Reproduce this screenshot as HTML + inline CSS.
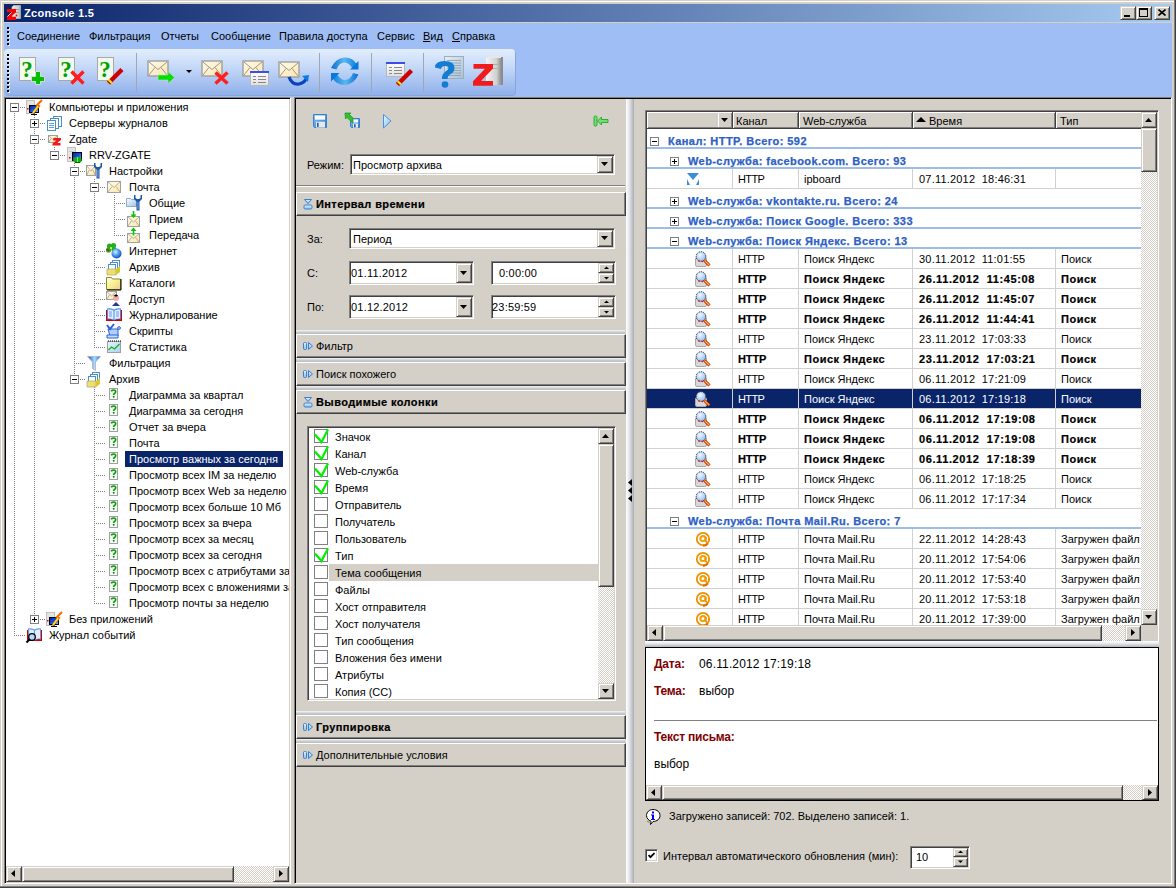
<!DOCTYPE html>
<html><head><meta charset="utf-8"><style>
html,body{margin:0;padding:0}
body{width:1176px;height:888px;overflow:hidden;position:relative;background:#D4D0C8;font-family:"Liberation Sans",sans-serif;font-size:11px;color:#000}
div{position:absolute;box-sizing:border-box}
.t{position:absolute;white-space:pre;line-height:13px}
u{text-decoration:underline;text-underline-offset:1px}
</style></head><body>
<div style="left:1px;top:1px;width:1173px;height:1px;background:#fff"></div>
<div style="left:1px;top:1px;width:1px;height:885px;background:#fff"></div>
<div style="left:1174px;top:0px;width:1px;height:887px;background:#808080"></div>
<div style="left:1175px;top:0px;width:1px;height:888px;background:#404040"></div>
<div style="left:0px;top:886px;width:1175px;height:1px;background:#808080"></div>
<div style="left:0px;top:887px;width:1176px;height:1px;background:#404040"></div>
<div style="left:4px;top:4px;width:1168px;height:18px;background:linear-gradient(90deg,#0A246A,#A6CAF0)"></div>
<span class="t " style="left:24px;top:7px;color:#fff;font-weight:bold;letter-spacing:0.3px">Zconsole 1.5</span>
<svg style="position:absolute;left:6px;top:5px;" width="16" height="16" viewBox="0 0 16 16"><defs><linearGradient id="tsv" x1="0" y1="0" x2="1" y2="0"><stop offset="0" stop-color="#F0F0F0"/><stop offset="0.8" stop-color="#C8C8C8"/><stop offset="1" stop-color="#A0A0A0"/></linearGradient></defs><path d="M7.5 0.5h7v13h-8.5v-11.5z" fill="url(#tsv)" stroke="#B8B8B8" stroke-width="0.8"/><rect x="9" y="4" width="4" height="0.8" fill="#909090"/><rect x="9" y="7" width="4" height="0.8" fill="#909090"/><circle cx="10.5" cy="10.5" r="0.9" fill="#E00"/><path d="M1 4h9v3.2l-5 4.6h5v3.2H1v-3.2l5-4.6H1z" fill="#f00"/><path d="M1.5 11.5l4-4" stroke="#fff" stroke-width="0.8"/></svg>
<div style="left:1120px;top:6px;width:16px;height:14px;background:#D4D0C8;border:1px solid;border-color:#D4D0C8 #404040 #404040 #D4D0C8;box-shadow:inset 1px 1px #fff,inset -1px -1px #808080;"></div>
<div style="left:1136px;top:6px;width:16px;height:14px;background:#D4D0C8;border:1px solid;border-color:#D4D0C8 #404040 #404040 #D4D0C8;box-shadow:inset 1px 1px #fff,inset -1px -1px #808080;"></div>
<div style="left:1154px;top:6px;width:16px;height:14px;background:#D4D0C8;border:1px solid;border-color:#D4D0C8 #404040 #404040 #D4D0C8;box-shadow:inset 1px 1px #fff,inset -1px -1px #808080;"></div>
<div style="left:1124px;top:15px;width:6px;height:2px;background:#000"></div>
<div style="left:1139px;top:8px;width:9px;height:9px;border:1px solid #000;border-top-width:2px;box-sizing:border-box"></div>
<svg style="position:absolute;left:1158px;top:9px;" width="8" height="7" viewBox="0 0 8 7"><path d="M0.5 0.5L7.5 6.5M7.5 0.5L0.5 6.5" stroke="#000" stroke-width="1.6"/></svg>
<div style="left:4px;top:23px;width:1168px;height:74px;background:#9EBEF5"></div>
<div style="left:7px;top:27px;width:2px;height:2px;background:#000;box-shadow:1px 1px #dce8fc"></div>
<div style="left:7px;top:31px;width:2px;height:2px;background:#000;box-shadow:1px 1px #dce8fc"></div>
<div style="left:7px;top:35px;width:2px;height:2px;background:#000;box-shadow:1px 1px #dce8fc"></div>
<div style="left:7px;top:39px;width:2px;height:2px;background:#000;box-shadow:1px 1px #dce8fc"></div>
<div style="left:7px;top:43px;width:2px;height:2px;background:#000;box-shadow:1px 1px #dce8fc"></div>
<span class="t " style="left:17px;top:30px;">Соединение</span>
<span class="t " style="left:89px;top:30px;">Фильтрация</span>
<span class="t " style="left:161px;top:30px;">Отчеты</span>
<span class="t " style="left:211px;top:30px;">Сообщение</span>
<span class="t " style="left:279px;top:30px;">Правила доступа</span>
<span class="t " style="left:377px;top:30px;">Сервис</span>
<span class="t " style="left:423px;top:30px;"><u>В</u>ид</span>
<span class="t " style="left:452px;top:30px;"><u>С</u>правка</span>
<div style="left:4px;top:49px;width:511px;height:46px;background:linear-gradient(#E3EEFD,#C4D8F8 40%,#8FB0EA);border-radius:4px;box-shadow:1px 1px 0 #86a6e0"></div>
<div style="left:7px;top:54px;width:2px;height:2px;background:#000;box-shadow:1px 1px #e8f0fc"></div>
<div style="left:7px;top:58px;width:2px;height:2px;background:#000;box-shadow:1px 1px #e8f0fc"></div>
<div style="left:7px;top:62px;width:2px;height:2px;background:#000;box-shadow:1px 1px #e8f0fc"></div>
<div style="left:7px;top:66px;width:2px;height:2px;background:#000;box-shadow:1px 1px #e8f0fc"></div>
<div style="left:7px;top:70px;width:2px;height:2px;background:#000;box-shadow:1px 1px #e8f0fc"></div>
<div style="left:7px;top:74px;width:2px;height:2px;background:#000;box-shadow:1px 1px #e8f0fc"></div>
<div style="left:7px;top:78px;width:2px;height:2px;background:#000;box-shadow:1px 1px #e8f0fc"></div>
<div style="left:7px;top:82px;width:2px;height:2px;background:#000;box-shadow:1px 1px #e8f0fc"></div>
<div style="left:7px;top:86px;width:2px;height:2px;background:#000;box-shadow:1px 1px #e8f0fc"></div>
<div style="left:7px;top:90px;width:2px;height:2px;background:#000;box-shadow:1px 1px #e8f0fc"></div>
<div style="left:136px;top:53px;width:1px;height:39px;background:#A2A6B0"></div>
<div style="left:319px;top:53px;width:1px;height:39px;background:#A2A6B0"></div>
<div style="left:371px;top:53px;width:1px;height:39px;background:#A2A6B0"></div>
<div style="left:423px;top:53px;width:1px;height:39px;background:#A2A6B0"></div>
<svg style="position:absolute;left:0;top:0" width="520" height="100" viewBox="0 0 520 100"><defs>
<linearGradient id="envg" x1="0" y1="0" x2="1" y2="1"><stop offset="0" stop-color="#FFFBEA"/><stop offset="1" stop-color="#FCE6B0"/></linearGradient>
<linearGradient id="listg" x1="0" y1="0" x2="0" y2="1"><stop offset="0" stop-color="#FFFFFF"/><stop offset="1" stop-color="#E0E0E0"/></linearGradient>
<linearGradient id="refg" x1="0" y1="0" x2="1" y2="0"><stop offset="0" stop-color="#0A6CD0"/><stop offset="0.5" stop-color="#5AB8F0"/><stop offset="1" stop-color="#1080E0"/></linearGradient>
<linearGradient id="srvg" x1="0" y1="0" x2="1" y2="0"><stop offset="0" stop-color="#F4F4F4"/><stop offset="0.7" stop-color="#D0D0D0"/><stop offset="1" stop-color="#909090"/></linearGradient>
<linearGradient id="helpdoc" x1="0" y1="0" x2="1" y2="1"><stop offset="0" stop-color="#E6EEF4"/><stop offset="1" stop-color="#A8C0D0"/></linearGradient>
</defs><rect x="19.5" y="57.5" width="16" height="23" fill="#F2FAEE" stroke="#A8A8A8"/>
<text x="27" y="77" font-family="Liberation Serif" font-weight="bold" font-size="23" fill="#00A000" text-anchor="middle">?</text><path d="M35.5 71.5h5v5h4v5h-4v3h-5v-3h-4v-5h4z" fill="#00C000" stroke="#D8D8D8" stroke-width="1"/><rect x="58.5" y="57.5" width="16" height="23" fill="#F2FAEE" stroke="#A8A8A8"/>
<text x="66" y="77" font-family="Liberation Serif" font-weight="bold" font-size="23" fill="#00A000" text-anchor="middle">?</text><path d="M71.5 71.5L83.5 83.5M83.5 71.5L71.5 83.5" stroke="#FF1E1E" stroke-width="3.4" stroke-linecap="butt"/><rect x="97.5" y="57.5" width="16" height="23" fill="#F2FAEE" stroke="#A8A8A8"/>
<text x="105" y="77" font-family="Liberation Serif" font-weight="bold" font-size="23" fill="#00A000" text-anchor="middle">?</text><line x1="108.5" y1="83" x2="122" y2="69.5" stroke="#D00000" stroke-width="4.5" stroke-linecap="butt"/>
<line x1="108.5" y1="83" x2="110.93" y2="80.57" stroke="#F8F000" stroke-width="4.5"/>
<line x1="108.5" y1="83" x2="109.445" y2="82.055" stroke="#C00000" stroke-width="4.5"/><defs></defs><rect x="148" y="61" width="20" height="15" fill="url(#envg)" stroke="#A4A4A4" stroke-width="1.5"/>
<path d="M149 62L158.0 69.5L167 62M149 75L155.0 67.5M167 75L161.0 67.5" stroke="#A09888" stroke-width="1" fill="none"/><path d="M158 75h10v-3.5l6.5 6l-6.5 6v-3.5h-10z" fill="#00E000" stroke="#C8D8C8" stroke-width="0.6"/><path d="M186 70h6l-3 3z" fill="#000"/><defs></defs><rect x="202" y="61" width="20" height="15" fill="url(#envg)" stroke="#A4A4A4" stroke-width="1.5"/>
<path d="M203 62L212.0 69.5L221 62M203 75L209.0 67.5M221 75L215.0 67.5" stroke="#A09888" stroke-width="1" fill="none"/><path d="M215.5 72.5L227.5 83.5M227.5 72.5L215.5 83.5" stroke="#FF1E1E" stroke-width="3.4" stroke-linecap="butt"/><defs></defs><rect x="243" y="61" width="20" height="15" fill="url(#envg)" stroke="#A4A4A4" stroke-width="1.5"/>
<path d="M244 62L253.0 69.5L262 62M244 75L250.0 67.5M262 75L256.0 67.5" stroke="#A09888" stroke-width="1" fill="none"/><rect x="250.5" y="71.5" width="18" height="14" fill="url(#listg)" stroke="#B8B8B8"/><rect x="250" y="71" width="19" height="2" fill="#3B4CF0"/><rect x="253" y="76" width="3" height="1" fill="#888"/><rect x="258" y="76" width="8" height="1" fill="#888"/><rect x="253" y="79" width="3" height="1" fill="#888"/><rect x="258" y="79" width="8" height="1" fill="#888"/><rect x="253" y="82" width="3" height="1" fill="#888"/><rect x="258" y="82" width="8" height="1" fill="#888"/><defs></defs><rect x="279" y="62" width="20" height="15" fill="url(#envg)" stroke="#A4A4A4" stroke-width="1.5"/>
<path d="M280 63L289.0 70.5L298 63M280 76L286.0 68.5M298 76L292.0 68.5" stroke="#A09888" stroke-width="1" fill="none"/><path d="M289 77 Q292 85 299 84 Q304 83 306 79" stroke="#0A44B8" stroke-width="3.2" fill="none"/><path d="M302 76L309 75L308 82z" fill="#0A7CE8"/><path d="M331 68Q336 57.5 345 57.5Q353 57.5 357 64.5L352.5 68.5Q349 62.5 344.5 62.5Q339 62.5 336.5 69.5z" fill="url(#refg)"/><path d="M358.5 61v8.5h-8.5z" fill="#0A78D8"/><g transform="rotate(180 344.75 71.25)"><path d="M331 68Q336 57.5 345 57.5Q353 57.5 357 64.5L352.5 68.5Q349 62.5 344.5 62.5Q339 62.5 336.5 69.5z" fill="url(#refg)"/><path d="M358.5 61v8.5h-8.5z" fill="#0A78D8"/></g><rect x="386.5" y="62.5" width="18" height="14" fill="url(#listg)" stroke="#B8B8B8"/><rect x="386" y="62" width="19" height="2" fill="#3B4CF0"/><rect x="389" y="67" width="3" height="1" fill="#888"/><rect x="394" y="67" width="8" height="1" fill="#888"/><rect x="389" y="70" width="3" height="1" fill="#888"/><rect x="394" y="70" width="8" height="1" fill="#888"/><rect x="389" y="73" width="3" height="1" fill="#888"/><rect x="394" y="73" width="8" height="1" fill="#888"/><line x1="397.5" y1="84.5" x2="411.5" y2="70.5" stroke="#D00000" stroke-width="4.5" stroke-linecap="butt"/>
<line x1="397.5" y1="84.5" x2="400.02" y2="81.98" stroke="#F8F000" stroke-width="4.5"/>
<line x1="397.5" y1="84.5" x2="398.48" y2="83.52" stroke="#C00000" stroke-width="4.5"/><rect x="444.5" y="56.5" width="19" height="22" fill="url(#helpdoc)" stroke="#98B0C0"/><rect x="447" y="60.0" width="14" height="1" fill="#8FA8BC"/><rect x="447" y="62.5" width="14" height="1" fill="#8FA8BC"/><rect x="447" y="65.0" width="14" height="1" fill="#8FA8BC"/><rect x="447" y="67.5" width="14" height="1" fill="#8FA8BC"/><rect x="447" y="70.0" width="14" height="1" fill="#8FA8BC"/><rect x="447" y="72.5" width="14" height="1" fill="#8FA8BC"/><rect x="447" y="75.0" width="14" height="1" fill="#8FA8BC"/><path d="M435 67.5q0-6.5 9.5-6.5q10 0 10 7q0 4-4.5 6.5q-2.5 1.3-2.5 4.5h-5.5q-.3-5 3.5-7.5q3-1.8 3-3.5q0-2-3.5-2q-3.5 0-4 3z" fill="#137CD4"/><circle cx="445" cy="84.5" r="3.3" fill="#137CD4"/><rect x="486" y="58" width="15" height="27" fill="url(#srvg)"/><path d="M486 58l3-1.5h14l-2 1.5z" fill="#E8E8E8"/><rect x="501" y="57" width="2" height="28" fill="#8C8C8C"/><rect x="488" y="64" width="11" height="1" fill="#B0B0B0"/><rect x="488" y="68" width="11" height="1" fill="#B0B0B0"/><path d="M473.5 64h19.5v4.5l-12 12.5h12v4.7h-20v-4.5l12-12.5h-11.5z" fill="#F01C1C"/></svg>
<div style="left:4px;top:97px;width:287px;height:787px;background:#fff;border:1px solid;border-color:#808080 #fff #fff #808080;box-shadow:inset 1px 1px #000,inset -1px -1px #D4D0C8;"></div>
<div style="left:6px;top:99px;width:283px;height:767px;overflow:hidden"><div style="left:-6px;top:-99px;width:300px;height:900px"><svg style="position:absolute;left:0;top:0" width="300" height="900" viewBox="0 0 300 900" shape-rendering="auto"><defs>
<linearGradient id="tenv" x1="0" y1="0" x2="1" y2="1"><stop offset="0" stop-color="#FFFDF0"/><stop offset="1" stop-color="#FBE6A8"/></linearGradient>
<linearGradient id="tmon" x1="0" y1="0" x2="1" y2="1"><stop offset="0" stop-color="#0018A8"/><stop offset="0.6" stop-color="#2060E0"/><stop offset="1" stop-color="#A0C8FF"/></linearGradient>
<linearGradient id="tfold" x1="0" y1="0" x2="1" y2="1"><stop offset="0" stop-color="#FFFFFF"/><stop offset="1" stop-color="#98C0E8"/></linearGradient>
<linearGradient id="tyfold" x1="0" y1="0" x2="1" y2="1"><stop offset="0" stop-color="#FFFFF0"/><stop offset="0.5" stop-color="#F8F090"/><stop offset="1" stop-color="#F0C8A0"/></linearGradient>
<radialGradient id="tglobe" cx="0.4" cy="0.35" r="0.7"><stop offset="0" stop-color="#D0F0FF"/><stop offset="0.5" stop-color="#4A9AF0"/><stop offset="1" stop-color="#1040B0"/></radialGradient>
<linearGradient id="tstat" x1="0" y1="0" x2="1" y2="1"><stop offset="0" stop-color="#E8F4FF"/><stop offset="1" stop-color="#A8D0F0"/></linearGradient>
<linearGradient id="tfun" x1="0" y1="0" x2="1" y2="0"><stop offset="0" stop-color="#0050E8"/><stop offset="0.55" stop-color="#A8E0FF"/><stop offset="1" stop-color="#0060E8"/></linearGradient>
</defs><rect x="34" y="115" width="1" height="1" fill="#808080"/><rect x="34" y="117" width="1" height="1" fill="#808080"/><rect x="34" y="119" width="1" height="1" fill="#808080"/><rect x="34" y="121" width="1" height="1" fill="#808080"/><rect x="34" y="123" width="1" height="1" fill="#808080"/><rect x="34" y="125" width="1" height="1" fill="#808080"/><rect x="34" y="127" width="1" height="1" fill="#808080"/><rect x="34" y="129" width="1" height="1" fill="#808080"/><rect x="34" y="131" width="1" height="1" fill="#808080"/><rect x="34" y="133" width="1" height="1" fill="#808080"/><rect x="34" y="135" width="1" height="1" fill="#808080"/><rect x="34" y="137" width="1" height="1" fill="#808080"/><rect x="34" y="139" width="1" height="1" fill="#808080"/><rect x="34" y="141" width="1" height="1" fill="#808080"/><rect x="34" y="143" width="1" height="1" fill="#808080"/><rect x="34" y="145" width="1" height="1" fill="#808080"/><rect x="34" y="147" width="1" height="1" fill="#808080"/><rect x="34" y="149" width="1" height="1" fill="#808080"/><rect x="34" y="151" width="1" height="1" fill="#808080"/><rect x="34" y="153" width="1" height="1" fill="#808080"/><rect x="34" y="155" width="1" height="1" fill="#808080"/><rect x="34" y="157" width="1" height="1" fill="#808080"/><rect x="34" y="159" width="1" height="1" fill="#808080"/><rect x="34" y="161" width="1" height="1" fill="#808080"/><rect x="34" y="163" width="1" height="1" fill="#808080"/><rect x="34" y="165" width="1" height="1" fill="#808080"/><rect x="34" y="167" width="1" height="1" fill="#808080"/><rect x="34" y="169" width="1" height="1" fill="#808080"/><rect x="34" y="171" width="1" height="1" fill="#808080"/><rect x="34" y="173" width="1" height="1" fill="#808080"/><rect x="34" y="175" width="1" height="1" fill="#808080"/><rect x="34" y="177" width="1" height="1" fill="#808080"/><rect x="34" y="179" width="1" height="1" fill="#808080"/><rect x="34" y="181" width="1" height="1" fill="#808080"/><rect x="34" y="183" width="1" height="1" fill="#808080"/><rect x="34" y="185" width="1" height="1" fill="#808080"/><rect x="34" y="187" width="1" height="1" fill="#808080"/><rect x="34" y="189" width="1" height="1" fill="#808080"/><rect x="34" y="191" width="1" height="1" fill="#808080"/><rect x="34" y="193" width="1" height="1" fill="#808080"/><rect x="34" y="195" width="1" height="1" fill="#808080"/><rect x="34" y="197" width="1" height="1" fill="#808080"/><rect x="34" y="199" width="1" height="1" fill="#808080"/><rect x="34" y="201" width="1" height="1" fill="#808080"/><rect x="34" y="203" width="1" height="1" fill="#808080"/><rect x="34" y="205" width="1" height="1" fill="#808080"/><rect x="34" y="207" width="1" height="1" fill="#808080"/><rect x="34" y="209" width="1" height="1" fill="#808080"/><rect x="34" y="211" width="1" height="1" fill="#808080"/><rect x="34" y="213" width="1" height="1" fill="#808080"/><rect x="34" y="215" width="1" height="1" fill="#808080"/><rect x="34" y="217" width="1" height="1" fill="#808080"/><rect x="34" y="219" width="1" height="1" fill="#808080"/><rect x="34" y="221" width="1" height="1" fill="#808080"/><rect x="34" y="223" width="1" height="1" fill="#808080"/><rect x="34" y="225" width="1" height="1" fill="#808080"/><rect x="34" y="227" width="1" height="1" fill="#808080"/><rect x="34" y="229" width="1" height="1" fill="#808080"/><rect x="34" y="231" width="1" height="1" fill="#808080"/><rect x="34" y="233" width="1" height="1" fill="#808080"/><rect x="34" y="235" width="1" height="1" fill="#808080"/><rect x="34" y="237" width="1" height="1" fill="#808080"/><rect x="34" y="239" width="1" height="1" fill="#808080"/><rect x="34" y="241" width="1" height="1" fill="#808080"/><rect x="34" y="243" width="1" height="1" fill="#808080"/><rect x="34" y="245" width="1" height="1" fill="#808080"/><rect x="34" y="247" width="1" height="1" fill="#808080"/><rect x="34" y="249" width="1" height="1" fill="#808080"/><rect x="34" y="251" width="1" height="1" fill="#808080"/><rect x="34" y="253" width="1" height="1" fill="#808080"/><rect x="34" y="255" width="1" height="1" fill="#808080"/><rect x="34" y="257" width="1" height="1" fill="#808080"/><rect x="34" y="259" width="1" height="1" fill="#808080"/><rect x="34" y="261" width="1" height="1" fill="#808080"/><rect x="34" y="263" width="1" height="1" fill="#808080"/><rect x="34" y="265" width="1" height="1" fill="#808080"/><rect x="34" y="267" width="1" height="1" fill="#808080"/><rect x="34" y="269" width="1" height="1" fill="#808080"/><rect x="34" y="271" width="1" height="1" fill="#808080"/><rect x="34" y="273" width="1" height="1" fill="#808080"/><rect x="34" y="275" width="1" height="1" fill="#808080"/><rect x="34" y="277" width="1" height="1" fill="#808080"/><rect x="34" y="279" width="1" height="1" fill="#808080"/><rect x="34" y="281" width="1" height="1" fill="#808080"/><rect x="34" y="283" width="1" height="1" fill="#808080"/><rect x="34" y="285" width="1" height="1" fill="#808080"/><rect x="34" y="287" width="1" height="1" fill="#808080"/><rect x="34" y="289" width="1" height="1" fill="#808080"/><rect x="34" y="291" width="1" height="1" fill="#808080"/><rect x="34" y="293" width="1" height="1" fill="#808080"/><rect x="34" y="295" width="1" height="1" fill="#808080"/><rect x="34" y="297" width="1" height="1" fill="#808080"/><rect x="34" y="299" width="1" height="1" fill="#808080"/><rect x="34" y="301" width="1" height="1" fill="#808080"/><rect x="34" y="303" width="1" height="1" fill="#808080"/><rect x="34" y="305" width="1" height="1" fill="#808080"/><rect x="34" y="307" width="1" height="1" fill="#808080"/><rect x="34" y="309" width="1" height="1" fill="#808080"/><rect x="34" y="311" width="1" height="1" fill="#808080"/><rect x="34" y="313" width="1" height="1" fill="#808080"/><rect x="34" y="315" width="1" height="1" fill="#808080"/><rect x="34" y="317" width="1" height="1" fill="#808080"/><rect x="34" y="319" width="1" height="1" fill="#808080"/><rect x="34" y="321" width="1" height="1" fill="#808080"/><rect x="34" y="323" width="1" height="1" fill="#808080"/><rect x="34" y="325" width="1" height="1" fill="#808080"/><rect x="34" y="327" width="1" height="1" fill="#808080"/><rect x="34" y="329" width="1" height="1" fill="#808080"/><rect x="34" y="331" width="1" height="1" fill="#808080"/><rect x="34" y="333" width="1" height="1" fill="#808080"/><rect x="34" y="335" width="1" height="1" fill="#808080"/><rect x="34" y="337" width="1" height="1" fill="#808080"/><rect x="34" y="339" width="1" height="1" fill="#808080"/><rect x="34" y="341" width="1" height="1" fill="#808080"/><rect x="34" y="343" width="1" height="1" fill="#808080"/><rect x="34" y="345" width="1" height="1" fill="#808080"/><rect x="34" y="347" width="1" height="1" fill="#808080"/><rect x="34" y="349" width="1" height="1" fill="#808080"/><rect x="34" y="351" width="1" height="1" fill="#808080"/><rect x="34" y="353" width="1" height="1" fill="#808080"/><rect x="34" y="355" width="1" height="1" fill="#808080"/><rect x="34" y="357" width="1" height="1" fill="#808080"/><rect x="34" y="359" width="1" height="1" fill="#808080"/><rect x="34" y="361" width="1" height="1" fill="#808080"/><rect x="34" y="363" width="1" height="1" fill="#808080"/><rect x="34" y="365" width="1" height="1" fill="#808080"/><rect x="34" y="367" width="1" height="1" fill="#808080"/><rect x="34" y="369" width="1" height="1" fill="#808080"/><rect x="34" y="371" width="1" height="1" fill="#808080"/><rect x="34" y="373" width="1" height="1" fill="#808080"/><rect x="34" y="375" width="1" height="1" fill="#808080"/><rect x="34" y="377" width="1" height="1" fill="#808080"/><rect x="34" y="379" width="1" height="1" fill="#808080"/><rect x="34" y="381" width="1" height="1" fill="#808080"/><rect x="34" y="383" width="1" height="1" fill="#808080"/><rect x="34" y="385" width="1" height="1" fill="#808080"/><rect x="34" y="387" width="1" height="1" fill="#808080"/><rect x="34" y="389" width="1" height="1" fill="#808080"/><rect x="34" y="391" width="1" height="1" fill="#808080"/><rect x="34" y="393" width="1" height="1" fill="#808080"/><rect x="34" y="395" width="1" height="1" fill="#808080"/><rect x="34" y="397" width="1" height="1" fill="#808080"/><rect x="34" y="399" width="1" height="1" fill="#808080"/><rect x="34" y="401" width="1" height="1" fill="#808080"/><rect x="34" y="403" width="1" height="1" fill="#808080"/><rect x="34" y="405" width="1" height="1" fill="#808080"/><rect x="34" y="407" width="1" height="1" fill="#808080"/><rect x="34" y="409" width="1" height="1" fill="#808080"/><rect x="34" y="411" width="1" height="1" fill="#808080"/><rect x="34" y="413" width="1" height="1" fill="#808080"/><rect x="34" y="415" width="1" height="1" fill="#808080"/><rect x="34" y="417" width="1" height="1" fill="#808080"/><rect x="34" y="419" width="1" height="1" fill="#808080"/><rect x="34" y="421" width="1" height="1" fill="#808080"/><rect x="34" y="423" width="1" height="1" fill="#808080"/><rect x="34" y="425" width="1" height="1" fill="#808080"/><rect x="34" y="427" width="1" height="1" fill="#808080"/><rect x="34" y="429" width="1" height="1" fill="#808080"/><rect x="34" y="431" width="1" height="1" fill="#808080"/><rect x="34" y="433" width="1" height="1" fill="#808080"/><rect x="34" y="435" width="1" height="1" fill="#808080"/><rect x="34" y="437" width="1" height="1" fill="#808080"/><rect x="34" y="439" width="1" height="1" fill="#808080"/><rect x="34" y="441" width="1" height="1" fill="#808080"/><rect x="34" y="443" width="1" height="1" fill="#808080"/><rect x="34" y="445" width="1" height="1" fill="#808080"/><rect x="34" y="447" width="1" height="1" fill="#808080"/><rect x="34" y="449" width="1" height="1" fill="#808080"/><rect x="34" y="451" width="1" height="1" fill="#808080"/><rect x="34" y="453" width="1" height="1" fill="#808080"/><rect x="34" y="455" width="1" height="1" fill="#808080"/><rect x="34" y="457" width="1" height="1" fill="#808080"/><rect x="34" y="459" width="1" height="1" fill="#808080"/><rect x="34" y="461" width="1" height="1" fill="#808080"/><rect x="34" y="463" width="1" height="1" fill="#808080"/><rect x="34" y="465" width="1" height="1" fill="#808080"/><rect x="34" y="467" width="1" height="1" fill="#808080"/><rect x="34" y="469" width="1" height="1" fill="#808080"/><rect x="34" y="471" width="1" height="1" fill="#808080"/><rect x="34" y="473" width="1" height="1" fill="#808080"/><rect x="34" y="475" width="1" height="1" fill="#808080"/><rect x="34" y="477" width="1" height="1" fill="#808080"/><rect x="34" y="479" width="1" height="1" fill="#808080"/><rect x="34" y="481" width="1" height="1" fill="#808080"/><rect x="34" y="483" width="1" height="1" fill="#808080"/><rect x="34" y="485" width="1" height="1" fill="#808080"/><rect x="34" y="487" width="1" height="1" fill="#808080"/><rect x="34" y="489" width="1" height="1" fill="#808080"/><rect x="34" y="491" width="1" height="1" fill="#808080"/><rect x="34" y="493" width="1" height="1" fill="#808080"/><rect x="34" y="495" width="1" height="1" fill="#808080"/><rect x="34" y="497" width="1" height="1" fill="#808080"/><rect x="34" y="499" width="1" height="1" fill="#808080"/><rect x="34" y="501" width="1" height="1" fill="#808080"/><rect x="34" y="503" width="1" height="1" fill="#808080"/><rect x="34" y="505" width="1" height="1" fill="#808080"/><rect x="34" y="507" width="1" height="1" fill="#808080"/><rect x="34" y="509" width="1" height="1" fill="#808080"/><rect x="34" y="511" width="1" height="1" fill="#808080"/><rect x="34" y="513" width="1" height="1" fill="#808080"/><rect x="34" y="515" width="1" height="1" fill="#808080"/><rect x="34" y="517" width="1" height="1" fill="#808080"/><rect x="34" y="519" width="1" height="1" fill="#808080"/><rect x="34" y="521" width="1" height="1" fill="#808080"/><rect x="34" y="523" width="1" height="1" fill="#808080"/><rect x="34" y="525" width="1" height="1" fill="#808080"/><rect x="34" y="527" width="1" height="1" fill="#808080"/><rect x="34" y="529" width="1" height="1" fill="#808080"/><rect x="34" y="531" width="1" height="1" fill="#808080"/><rect x="34" y="533" width="1" height="1" fill="#808080"/><rect x="34" y="535" width="1" height="1" fill="#808080"/><rect x="34" y="537" width="1" height="1" fill="#808080"/><rect x="34" y="539" width="1" height="1" fill="#808080"/><rect x="34" y="541" width="1" height="1" fill="#808080"/><rect x="34" y="543" width="1" height="1" fill="#808080"/><rect x="34" y="545" width="1" height="1" fill="#808080"/><rect x="34" y="547" width="1" height="1" fill="#808080"/><rect x="34" y="549" width="1" height="1" fill="#808080"/><rect x="34" y="551" width="1" height="1" fill="#808080"/><rect x="34" y="553" width="1" height="1" fill="#808080"/><rect x="34" y="555" width="1" height="1" fill="#808080"/><rect x="34" y="557" width="1" height="1" fill="#808080"/><rect x="34" y="559" width="1" height="1" fill="#808080"/><rect x="34" y="561" width="1" height="1" fill="#808080"/><rect x="34" y="563" width="1" height="1" fill="#808080"/><rect x="34" y="565" width="1" height="1" fill="#808080"/><rect x="34" y="567" width="1" height="1" fill="#808080"/><rect x="34" y="569" width="1" height="1" fill="#808080"/><rect x="34" y="571" width="1" height="1" fill="#808080"/><rect x="34" y="573" width="1" height="1" fill="#808080"/><rect x="34" y="575" width="1" height="1" fill="#808080"/><rect x="34" y="577" width="1" height="1" fill="#808080"/><rect x="34" y="579" width="1" height="1" fill="#808080"/><rect x="34" y="581" width="1" height="1" fill="#808080"/><rect x="34" y="583" width="1" height="1" fill="#808080"/><rect x="34" y="585" width="1" height="1" fill="#808080"/><rect x="34" y="587" width="1" height="1" fill="#808080"/><rect x="34" y="589" width="1" height="1" fill="#808080"/><rect x="34" y="591" width="1" height="1" fill="#808080"/><rect x="34" y="593" width="1" height="1" fill="#808080"/><rect x="34" y="595" width="1" height="1" fill="#808080"/><rect x="34" y="597" width="1" height="1" fill="#808080"/><rect x="34" y="599" width="1" height="1" fill="#808080"/><rect x="34" y="601" width="1" height="1" fill="#808080"/><rect x="34" y="603" width="1" height="1" fill="#808080"/><rect x="34" y="605" width="1" height="1" fill="#808080"/><rect x="34" y="607" width="1" height="1" fill="#808080"/><rect x="34" y="609" width="1" height="1" fill="#808080"/><rect x="34" y="611" width="1" height="1" fill="#808080"/><rect x="34" y="613" width="1" height="1" fill="#808080"/><rect x="34" y="615" width="1" height="1" fill="#808080"/><rect x="34" y="617" width="1" height="1" fill="#808080"/><rect x="34" y="619" width="1" height="1" fill="#808080"/><rect x="14" y="107" width="1" height="1" fill="#808080"/><rect x="14" y="109" width="1" height="1" fill="#808080"/><rect x="14" y="111" width="1" height="1" fill="#808080"/><rect x="14" y="113" width="1" height="1" fill="#808080"/><rect x="14" y="115" width="1" height="1" fill="#808080"/><rect x="14" y="117" width="1" height="1" fill="#808080"/><rect x="14" y="119" width="1" height="1" fill="#808080"/><rect x="14" y="121" width="1" height="1" fill="#808080"/><rect x="14" y="123" width="1" height="1" fill="#808080"/><rect x="14" y="125" width="1" height="1" fill="#808080"/><rect x="14" y="127" width="1" height="1" fill="#808080"/><rect x="14" y="129" width="1" height="1" fill="#808080"/><rect x="14" y="131" width="1" height="1" fill="#808080"/><rect x="14" y="133" width="1" height="1" fill="#808080"/><rect x="14" y="135" width="1" height="1" fill="#808080"/><rect x="14" y="137" width="1" height="1" fill="#808080"/><rect x="14" y="139" width="1" height="1" fill="#808080"/><rect x="14" y="141" width="1" height="1" fill="#808080"/><rect x="14" y="143" width="1" height="1" fill="#808080"/><rect x="14" y="145" width="1" height="1" fill="#808080"/><rect x="14" y="147" width="1" height="1" fill="#808080"/><rect x="14" y="149" width="1" height="1" fill="#808080"/><rect x="14" y="151" width="1" height="1" fill="#808080"/><rect x="14" y="153" width="1" height="1" fill="#808080"/><rect x="14" y="155" width="1" height="1" fill="#808080"/><rect x="14" y="157" width="1" height="1" fill="#808080"/><rect x="14" y="159" width="1" height="1" fill="#808080"/><rect x="14" y="161" width="1" height="1" fill="#808080"/><rect x="14" y="163" width="1" height="1" fill="#808080"/><rect x="14" y="165" width="1" height="1" fill="#808080"/><rect x="14" y="167" width="1" height="1" fill="#808080"/><rect x="14" y="169" width="1" height="1" fill="#808080"/><rect x="14" y="171" width="1" height="1" fill="#808080"/><rect x="14" y="173" width="1" height="1" fill="#808080"/><rect x="14" y="175" width="1" height="1" fill="#808080"/><rect x="14" y="177" width="1" height="1" fill="#808080"/><rect x="14" y="179" width="1" height="1" fill="#808080"/><rect x="14" y="181" width="1" height="1" fill="#808080"/><rect x="14" y="183" width="1" height="1" fill="#808080"/><rect x="14" y="185" width="1" height="1" fill="#808080"/><rect x="14" y="187" width="1" height="1" fill="#808080"/><rect x="14" y="189" width="1" height="1" fill="#808080"/><rect x="14" y="191" width="1" height="1" fill="#808080"/><rect x="14" y="193" width="1" height="1" fill="#808080"/><rect x="14" y="195" width="1" height="1" fill="#808080"/><rect x="14" y="197" width="1" height="1" fill="#808080"/><rect x="14" y="199" width="1" height="1" fill="#808080"/><rect x="14" y="201" width="1" height="1" fill="#808080"/><rect x="14" y="203" width="1" height="1" fill="#808080"/><rect x="14" y="205" width="1" height="1" fill="#808080"/><rect x="14" y="207" width="1" height="1" fill="#808080"/><rect x="14" y="209" width="1" height="1" fill="#808080"/><rect x="14" y="211" width="1" height="1" fill="#808080"/><rect x="14" y="213" width="1" height="1" fill="#808080"/><rect x="14" y="215" width="1" height="1" fill="#808080"/><rect x="14" y="217" width="1" height="1" fill="#808080"/><rect x="14" y="219" width="1" height="1" fill="#808080"/><rect x="14" y="221" width="1" height="1" fill="#808080"/><rect x="14" y="223" width="1" height="1" fill="#808080"/><rect x="14" y="225" width="1" height="1" fill="#808080"/><rect x="14" y="227" width="1" height="1" fill="#808080"/><rect x="14" y="229" width="1" height="1" fill="#808080"/><rect x="14" y="231" width="1" height="1" fill="#808080"/><rect x="14" y="233" width="1" height="1" fill="#808080"/><rect x="14" y="235" width="1" height="1" fill="#808080"/><rect x="14" y="237" width="1" height="1" fill="#808080"/><rect x="14" y="239" width="1" height="1" fill="#808080"/><rect x="14" y="241" width="1" height="1" fill="#808080"/><rect x="14" y="243" width="1" height="1" fill="#808080"/><rect x="14" y="245" width="1" height="1" fill="#808080"/><rect x="14" y="247" width="1" height="1" fill="#808080"/><rect x="14" y="249" width="1" height="1" fill="#808080"/><rect x="14" y="251" width="1" height="1" fill="#808080"/><rect x="14" y="253" width="1" height="1" fill="#808080"/><rect x="14" y="255" width="1" height="1" fill="#808080"/><rect x="14" y="257" width="1" height="1" fill="#808080"/><rect x="14" y="259" width="1" height="1" fill="#808080"/><rect x="14" y="261" width="1" height="1" fill="#808080"/><rect x="14" y="263" width="1" height="1" fill="#808080"/><rect x="14" y="265" width="1" height="1" fill="#808080"/><rect x="14" y="267" width="1" height="1" fill="#808080"/><rect x="14" y="269" width="1" height="1" fill="#808080"/><rect x="14" y="271" width="1" height="1" fill="#808080"/><rect x="14" y="273" width="1" height="1" fill="#808080"/><rect x="14" y="275" width="1" height="1" fill="#808080"/><rect x="14" y="277" width="1" height="1" fill="#808080"/><rect x="14" y="279" width="1" height="1" fill="#808080"/><rect x="14" y="281" width="1" height="1" fill="#808080"/><rect x="14" y="283" width="1" height="1" fill="#808080"/><rect x="14" y="285" width="1" height="1" fill="#808080"/><rect x="14" y="287" width="1" height="1" fill="#808080"/><rect x="14" y="289" width="1" height="1" fill="#808080"/><rect x="14" y="291" width="1" height="1" fill="#808080"/><rect x="14" y="293" width="1" height="1" fill="#808080"/><rect x="14" y="295" width="1" height="1" fill="#808080"/><rect x="14" y="297" width="1" height="1" fill="#808080"/><rect x="14" y="299" width="1" height="1" fill="#808080"/><rect x="14" y="301" width="1" height="1" fill="#808080"/><rect x="14" y="303" width="1" height="1" fill="#808080"/><rect x="14" y="305" width="1" height="1" fill="#808080"/><rect x="14" y="307" width="1" height="1" fill="#808080"/><rect x="14" y="309" width="1" height="1" fill="#808080"/><rect x="14" y="311" width="1" height="1" fill="#808080"/><rect x="14" y="313" width="1" height="1" fill="#808080"/><rect x="14" y="315" width="1" height="1" fill="#808080"/><rect x="14" y="317" width="1" height="1" fill="#808080"/><rect x="14" y="319" width="1" height="1" fill="#808080"/><rect x="14" y="321" width="1" height="1" fill="#808080"/><rect x="14" y="323" width="1" height="1" fill="#808080"/><rect x="14" y="325" width="1" height="1" fill="#808080"/><rect x="14" y="327" width="1" height="1" fill="#808080"/><rect x="14" y="329" width="1" height="1" fill="#808080"/><rect x="14" y="331" width="1" height="1" fill="#808080"/><rect x="14" y="333" width="1" height="1" fill="#808080"/><rect x="14" y="335" width="1" height="1" fill="#808080"/><rect x="14" y="337" width="1" height="1" fill="#808080"/><rect x="14" y="339" width="1" height="1" fill="#808080"/><rect x="14" y="341" width="1" height="1" fill="#808080"/><rect x="14" y="343" width="1" height="1" fill="#808080"/><rect x="14" y="345" width="1" height="1" fill="#808080"/><rect x="14" y="347" width="1" height="1" fill="#808080"/><rect x="14" y="349" width="1" height="1" fill="#808080"/><rect x="14" y="351" width="1" height="1" fill="#808080"/><rect x="14" y="353" width="1" height="1" fill="#808080"/><rect x="14" y="355" width="1" height="1" fill="#808080"/><rect x="14" y="357" width="1" height="1" fill="#808080"/><rect x="14" y="359" width="1" height="1" fill="#808080"/><rect x="14" y="361" width="1" height="1" fill="#808080"/><rect x="14" y="363" width="1" height="1" fill="#808080"/><rect x="14" y="365" width="1" height="1" fill="#808080"/><rect x="14" y="367" width="1" height="1" fill="#808080"/><rect x="14" y="369" width="1" height="1" fill="#808080"/><rect x="14" y="371" width="1" height="1" fill="#808080"/><rect x="14" y="373" width="1" height="1" fill="#808080"/><rect x="14" y="375" width="1" height="1" fill="#808080"/><rect x="14" y="377" width="1" height="1" fill="#808080"/><rect x="14" y="379" width="1" height="1" fill="#808080"/><rect x="14" y="381" width="1" height="1" fill="#808080"/><rect x="14" y="383" width="1" height="1" fill="#808080"/><rect x="14" y="385" width="1" height="1" fill="#808080"/><rect x="14" y="387" width="1" height="1" fill="#808080"/><rect x="14" y="389" width="1" height="1" fill="#808080"/><rect x="14" y="391" width="1" height="1" fill="#808080"/><rect x="14" y="393" width="1" height="1" fill="#808080"/><rect x="14" y="395" width="1" height="1" fill="#808080"/><rect x="14" y="397" width="1" height="1" fill="#808080"/><rect x="14" y="399" width="1" height="1" fill="#808080"/><rect x="14" y="401" width="1" height="1" fill="#808080"/><rect x="14" y="403" width="1" height="1" fill="#808080"/><rect x="14" y="405" width="1" height="1" fill="#808080"/><rect x="14" y="407" width="1" height="1" fill="#808080"/><rect x="14" y="409" width="1" height="1" fill="#808080"/><rect x="14" y="411" width="1" height="1" fill="#808080"/><rect x="14" y="413" width="1" height="1" fill="#808080"/><rect x="14" y="415" width="1" height="1" fill="#808080"/><rect x="14" y="417" width="1" height="1" fill="#808080"/><rect x="14" y="419" width="1" height="1" fill="#808080"/><rect x="14" y="421" width="1" height="1" fill="#808080"/><rect x="14" y="423" width="1" height="1" fill="#808080"/><rect x="14" y="425" width="1" height="1" fill="#808080"/><rect x="14" y="427" width="1" height="1" fill="#808080"/><rect x="14" y="429" width="1" height="1" fill="#808080"/><rect x="14" y="431" width="1" height="1" fill="#808080"/><rect x="14" y="433" width="1" height="1" fill="#808080"/><rect x="14" y="435" width="1" height="1" fill="#808080"/><rect x="14" y="437" width="1" height="1" fill="#808080"/><rect x="14" y="439" width="1" height="1" fill="#808080"/><rect x="14" y="441" width="1" height="1" fill="#808080"/><rect x="14" y="443" width="1" height="1" fill="#808080"/><rect x="14" y="445" width="1" height="1" fill="#808080"/><rect x="14" y="447" width="1" height="1" fill="#808080"/><rect x="14" y="449" width="1" height="1" fill="#808080"/><rect x="14" y="451" width="1" height="1" fill="#808080"/><rect x="14" y="453" width="1" height="1" fill="#808080"/><rect x="14" y="455" width="1" height="1" fill="#808080"/><rect x="14" y="457" width="1" height="1" fill="#808080"/><rect x="14" y="459" width="1" height="1" fill="#808080"/><rect x="14" y="461" width="1" height="1" fill="#808080"/><rect x="14" y="463" width="1" height="1" fill="#808080"/><rect x="14" y="465" width="1" height="1" fill="#808080"/><rect x="14" y="467" width="1" height="1" fill="#808080"/><rect x="14" y="469" width="1" height="1" fill="#808080"/><rect x="14" y="471" width="1" height="1" fill="#808080"/><rect x="14" y="473" width="1" height="1" fill="#808080"/><rect x="14" y="475" width="1" height="1" fill="#808080"/><rect x="14" y="477" width="1" height="1" fill="#808080"/><rect x="14" y="479" width="1" height="1" fill="#808080"/><rect x="14" y="481" width="1" height="1" fill="#808080"/><rect x="14" y="483" width="1" height="1" fill="#808080"/><rect x="14" y="485" width="1" height="1" fill="#808080"/><rect x="14" y="487" width="1" height="1" fill="#808080"/><rect x="14" y="489" width="1" height="1" fill="#808080"/><rect x="14" y="491" width="1" height="1" fill="#808080"/><rect x="14" y="493" width="1" height="1" fill="#808080"/><rect x="14" y="495" width="1" height="1" fill="#808080"/><rect x="14" y="497" width="1" height="1" fill="#808080"/><rect x="14" y="499" width="1" height="1" fill="#808080"/><rect x="14" y="501" width="1" height="1" fill="#808080"/><rect x="14" y="503" width="1" height="1" fill="#808080"/><rect x="14" y="505" width="1" height="1" fill="#808080"/><rect x="14" y="507" width="1" height="1" fill="#808080"/><rect x="14" y="509" width="1" height="1" fill="#808080"/><rect x="14" y="511" width="1" height="1" fill="#808080"/><rect x="14" y="513" width="1" height="1" fill="#808080"/><rect x="14" y="515" width="1" height="1" fill="#808080"/><rect x="14" y="517" width="1" height="1" fill="#808080"/><rect x="14" y="519" width="1" height="1" fill="#808080"/><rect x="14" y="521" width="1" height="1" fill="#808080"/><rect x="14" y="523" width="1" height="1" fill="#808080"/><rect x="14" y="525" width="1" height="1" fill="#808080"/><rect x="14" y="527" width="1" height="1" fill="#808080"/><rect x="14" y="529" width="1" height="1" fill="#808080"/><rect x="14" y="531" width="1" height="1" fill="#808080"/><rect x="14" y="533" width="1" height="1" fill="#808080"/><rect x="14" y="535" width="1" height="1" fill="#808080"/><rect x="14" y="537" width="1" height="1" fill="#808080"/><rect x="14" y="539" width="1" height="1" fill="#808080"/><rect x="14" y="541" width="1" height="1" fill="#808080"/><rect x="14" y="543" width="1" height="1" fill="#808080"/><rect x="14" y="545" width="1" height="1" fill="#808080"/><rect x="14" y="547" width="1" height="1" fill="#808080"/><rect x="14" y="549" width="1" height="1" fill="#808080"/><rect x="14" y="551" width="1" height="1" fill="#808080"/><rect x="14" y="553" width="1" height="1" fill="#808080"/><rect x="14" y="555" width="1" height="1" fill="#808080"/><rect x="14" y="557" width="1" height="1" fill="#808080"/><rect x="14" y="559" width="1" height="1" fill="#808080"/><rect x="14" y="561" width="1" height="1" fill="#808080"/><rect x="14" y="563" width="1" height="1" fill="#808080"/><rect x="14" y="565" width="1" height="1" fill="#808080"/><rect x="14" y="567" width="1" height="1" fill="#808080"/><rect x="14" y="569" width="1" height="1" fill="#808080"/><rect x="14" y="571" width="1" height="1" fill="#808080"/><rect x="14" y="573" width="1" height="1" fill="#808080"/><rect x="14" y="575" width="1" height="1" fill="#808080"/><rect x="14" y="577" width="1" height="1" fill="#808080"/><rect x="14" y="579" width="1" height="1" fill="#808080"/><rect x="14" y="581" width="1" height="1" fill="#808080"/><rect x="14" y="583" width="1" height="1" fill="#808080"/><rect x="14" y="585" width="1" height="1" fill="#808080"/><rect x="14" y="587" width="1" height="1" fill="#808080"/><rect x="14" y="589" width="1" height="1" fill="#808080"/><rect x="14" y="591" width="1" height="1" fill="#808080"/><rect x="14" y="593" width="1" height="1" fill="#808080"/><rect x="14" y="595" width="1" height="1" fill="#808080"/><rect x="14" y="597" width="1" height="1" fill="#808080"/><rect x="14" y="599" width="1" height="1" fill="#808080"/><rect x="14" y="601" width="1" height="1" fill="#808080"/><rect x="14" y="603" width="1" height="1" fill="#808080"/><rect x="14" y="605" width="1" height="1" fill="#808080"/><rect x="14" y="607" width="1" height="1" fill="#808080"/><rect x="14" y="609" width="1" height="1" fill="#808080"/><rect x="14" y="611" width="1" height="1" fill="#808080"/><rect x="14" y="613" width="1" height="1" fill="#808080"/><rect x="14" y="615" width="1" height="1" fill="#808080"/><rect x="14" y="617" width="1" height="1" fill="#808080"/><rect x="14" y="619" width="1" height="1" fill="#808080"/><rect x="14" y="621" width="1" height="1" fill="#808080"/><rect x="14" y="623" width="1" height="1" fill="#808080"/><rect x="14" y="625" width="1" height="1" fill="#808080"/><rect x="14" y="627" width="1" height="1" fill="#808080"/><rect x="14" y="629" width="1" height="1" fill="#808080"/><rect x="14" y="631" width="1" height="1" fill="#808080"/><rect x="14" y="633" width="1" height="1" fill="#808080"/><rect x="14" y="635" width="1" height="1" fill="#808080"/><rect x="20" y="107" width="1" height="1" fill="#808080"/><rect x="22" y="107" width="1" height="1" fill="#808080"/><rect x="24" y="107" width="1" height="1" fill="#808080"/><rect x="34" y="123" width="1" height="1" fill="#808080"/><rect x="34" y="125" width="1" height="1" fill="#808080"/><rect x="34" y="127" width="1" height="1" fill="#808080"/><rect x="34" y="129" width="1" height="1" fill="#808080"/><rect x="34" y="131" width="1" height="1" fill="#808080"/><rect x="34" y="133" width="1" height="1" fill="#808080"/><rect x="34" y="135" width="1" height="1" fill="#808080"/><rect x="34" y="137" width="1" height="1" fill="#808080"/><rect x="34" y="139" width="1" height="1" fill="#808080"/><rect x="34" y="141" width="1" height="1" fill="#808080"/><rect x="34" y="143" width="1" height="1" fill="#808080"/><rect x="34" y="145" width="1" height="1" fill="#808080"/><rect x="34" y="147" width="1" height="1" fill="#808080"/><rect x="34" y="149" width="1" height="1" fill="#808080"/><rect x="34" y="151" width="1" height="1" fill="#808080"/><rect x="34" y="153" width="1" height="1" fill="#808080"/><rect x="34" y="155" width="1" height="1" fill="#808080"/><rect x="34" y="157" width="1" height="1" fill="#808080"/><rect x="34" y="159" width="1" height="1" fill="#808080"/><rect x="34" y="161" width="1" height="1" fill="#808080"/><rect x="34" y="163" width="1" height="1" fill="#808080"/><rect x="34" y="165" width="1" height="1" fill="#808080"/><rect x="34" y="167" width="1" height="1" fill="#808080"/><rect x="34" y="169" width="1" height="1" fill="#808080"/><rect x="34" y="171" width="1" height="1" fill="#808080"/><rect x="34" y="173" width="1" height="1" fill="#808080"/><rect x="34" y="175" width="1" height="1" fill="#808080"/><rect x="34" y="177" width="1" height="1" fill="#808080"/><rect x="34" y="179" width="1" height="1" fill="#808080"/><rect x="34" y="181" width="1" height="1" fill="#808080"/><rect x="34" y="183" width="1" height="1" fill="#808080"/><rect x="34" y="185" width="1" height="1" fill="#808080"/><rect x="34" y="187" width="1" height="1" fill="#808080"/><rect x="34" y="189" width="1" height="1" fill="#808080"/><rect x="34" y="191" width="1" height="1" fill="#808080"/><rect x="34" y="193" width="1" height="1" fill="#808080"/><rect x="34" y="195" width="1" height="1" fill="#808080"/><rect x="34" y="197" width="1" height="1" fill="#808080"/><rect x="34" y="199" width="1" height="1" fill="#808080"/><rect x="34" y="201" width="1" height="1" fill="#808080"/><rect x="34" y="203" width="1" height="1" fill="#808080"/><rect x="34" y="205" width="1" height="1" fill="#808080"/><rect x="34" y="207" width="1" height="1" fill="#808080"/><rect x="34" y="209" width="1" height="1" fill="#808080"/><rect x="34" y="211" width="1" height="1" fill="#808080"/><rect x="34" y="213" width="1" height="1" fill="#808080"/><rect x="34" y="215" width="1" height="1" fill="#808080"/><rect x="34" y="217" width="1" height="1" fill="#808080"/><rect x="34" y="219" width="1" height="1" fill="#808080"/><rect x="34" y="221" width="1" height="1" fill="#808080"/><rect x="34" y="223" width="1" height="1" fill="#808080"/><rect x="34" y="225" width="1" height="1" fill="#808080"/><rect x="34" y="227" width="1" height="1" fill="#808080"/><rect x="34" y="229" width="1" height="1" fill="#808080"/><rect x="34" y="231" width="1" height="1" fill="#808080"/><rect x="34" y="233" width="1" height="1" fill="#808080"/><rect x="34" y="235" width="1" height="1" fill="#808080"/><rect x="34" y="237" width="1" height="1" fill="#808080"/><rect x="34" y="239" width="1" height="1" fill="#808080"/><rect x="34" y="241" width="1" height="1" fill="#808080"/><rect x="34" y="243" width="1" height="1" fill="#808080"/><rect x="34" y="245" width="1" height="1" fill="#808080"/><rect x="34" y="247" width="1" height="1" fill="#808080"/><rect x="34" y="249" width="1" height="1" fill="#808080"/><rect x="34" y="251" width="1" height="1" fill="#808080"/><rect x="34" y="253" width="1" height="1" fill="#808080"/><rect x="34" y="255" width="1" height="1" fill="#808080"/><rect x="34" y="257" width="1" height="1" fill="#808080"/><rect x="34" y="259" width="1" height="1" fill="#808080"/><rect x="34" y="261" width="1" height="1" fill="#808080"/><rect x="34" y="263" width="1" height="1" fill="#808080"/><rect x="34" y="265" width="1" height="1" fill="#808080"/><rect x="34" y="267" width="1" height="1" fill="#808080"/><rect x="34" y="269" width="1" height="1" fill="#808080"/><rect x="34" y="271" width="1" height="1" fill="#808080"/><rect x="34" y="273" width="1" height="1" fill="#808080"/><rect x="34" y="275" width="1" height="1" fill="#808080"/><rect x="34" y="277" width="1" height="1" fill="#808080"/><rect x="34" y="279" width="1" height="1" fill="#808080"/><rect x="34" y="281" width="1" height="1" fill="#808080"/><rect x="34" y="283" width="1" height="1" fill="#808080"/><rect x="34" y="285" width="1" height="1" fill="#808080"/><rect x="34" y="287" width="1" height="1" fill="#808080"/><rect x="34" y="289" width="1" height="1" fill="#808080"/><rect x="34" y="291" width="1" height="1" fill="#808080"/><rect x="34" y="293" width="1" height="1" fill="#808080"/><rect x="34" y="295" width="1" height="1" fill="#808080"/><rect x="34" y="297" width="1" height="1" fill="#808080"/><rect x="34" y="299" width="1" height="1" fill="#808080"/><rect x="34" y="301" width="1" height="1" fill="#808080"/><rect x="34" y="303" width="1" height="1" fill="#808080"/><rect x="34" y="305" width="1" height="1" fill="#808080"/><rect x="34" y="307" width="1" height="1" fill="#808080"/><rect x="34" y="309" width="1" height="1" fill="#808080"/><rect x="34" y="311" width="1" height="1" fill="#808080"/><rect x="34" y="313" width="1" height="1" fill="#808080"/><rect x="34" y="315" width="1" height="1" fill="#808080"/><rect x="34" y="317" width="1" height="1" fill="#808080"/><rect x="34" y="319" width="1" height="1" fill="#808080"/><rect x="34" y="321" width="1" height="1" fill="#808080"/><rect x="34" y="323" width="1" height="1" fill="#808080"/><rect x="34" y="325" width="1" height="1" fill="#808080"/><rect x="34" y="327" width="1" height="1" fill="#808080"/><rect x="34" y="329" width="1" height="1" fill="#808080"/><rect x="34" y="331" width="1" height="1" fill="#808080"/><rect x="34" y="333" width="1" height="1" fill="#808080"/><rect x="34" y="335" width="1" height="1" fill="#808080"/><rect x="34" y="337" width="1" height="1" fill="#808080"/><rect x="34" y="339" width="1" height="1" fill="#808080"/><rect x="34" y="341" width="1" height="1" fill="#808080"/><rect x="34" y="343" width="1" height="1" fill="#808080"/><rect x="34" y="345" width="1" height="1" fill="#808080"/><rect x="34" y="347" width="1" height="1" fill="#808080"/><rect x="34" y="349" width="1" height="1" fill="#808080"/><rect x="34" y="351" width="1" height="1" fill="#808080"/><rect x="34" y="353" width="1" height="1" fill="#808080"/><rect x="34" y="355" width="1" height="1" fill="#808080"/><rect x="34" y="357" width="1" height="1" fill="#808080"/><rect x="34" y="359" width="1" height="1" fill="#808080"/><rect x="34" y="361" width="1" height="1" fill="#808080"/><rect x="34" y="363" width="1" height="1" fill="#808080"/><rect x="34" y="365" width="1" height="1" fill="#808080"/><rect x="34" y="367" width="1" height="1" fill="#808080"/><rect x="34" y="369" width="1" height="1" fill="#808080"/><rect x="34" y="371" width="1" height="1" fill="#808080"/><rect x="34" y="373" width="1" height="1" fill="#808080"/><rect x="34" y="375" width="1" height="1" fill="#808080"/><rect x="34" y="377" width="1" height="1" fill="#808080"/><rect x="34" y="379" width="1" height="1" fill="#808080"/><rect x="34" y="381" width="1" height="1" fill="#808080"/><rect x="34" y="383" width="1" height="1" fill="#808080"/><rect x="34" y="385" width="1" height="1" fill="#808080"/><rect x="34" y="387" width="1" height="1" fill="#808080"/><rect x="34" y="389" width="1" height="1" fill="#808080"/><rect x="34" y="391" width="1" height="1" fill="#808080"/><rect x="34" y="393" width="1" height="1" fill="#808080"/><rect x="34" y="395" width="1" height="1" fill="#808080"/><rect x="34" y="397" width="1" height="1" fill="#808080"/><rect x="34" y="399" width="1" height="1" fill="#808080"/><rect x="34" y="401" width="1" height="1" fill="#808080"/><rect x="34" y="403" width="1" height="1" fill="#808080"/><rect x="34" y="405" width="1" height="1" fill="#808080"/><rect x="34" y="407" width="1" height="1" fill="#808080"/><rect x="34" y="409" width="1" height="1" fill="#808080"/><rect x="34" y="411" width="1" height="1" fill="#808080"/><rect x="34" y="413" width="1" height="1" fill="#808080"/><rect x="34" y="415" width="1" height="1" fill="#808080"/><rect x="34" y="417" width="1" height="1" fill="#808080"/><rect x="34" y="419" width="1" height="1" fill="#808080"/><rect x="34" y="421" width="1" height="1" fill="#808080"/><rect x="34" y="423" width="1" height="1" fill="#808080"/><rect x="34" y="425" width="1" height="1" fill="#808080"/><rect x="34" y="427" width="1" height="1" fill="#808080"/><rect x="34" y="429" width="1" height="1" fill="#808080"/><rect x="34" y="431" width="1" height="1" fill="#808080"/><rect x="34" y="433" width="1" height="1" fill="#808080"/><rect x="34" y="435" width="1" height="1" fill="#808080"/><rect x="34" y="437" width="1" height="1" fill="#808080"/><rect x="34" y="439" width="1" height="1" fill="#808080"/><rect x="34" y="441" width="1" height="1" fill="#808080"/><rect x="34" y="443" width="1" height="1" fill="#808080"/><rect x="34" y="445" width="1" height="1" fill="#808080"/><rect x="34" y="447" width="1" height="1" fill="#808080"/><rect x="34" y="449" width="1" height="1" fill="#808080"/><rect x="34" y="451" width="1" height="1" fill="#808080"/><rect x="34" y="453" width="1" height="1" fill="#808080"/><rect x="34" y="455" width="1" height="1" fill="#808080"/><rect x="34" y="457" width="1" height="1" fill="#808080"/><rect x="34" y="459" width="1" height="1" fill="#808080"/><rect x="34" y="461" width="1" height="1" fill="#808080"/><rect x="34" y="463" width="1" height="1" fill="#808080"/><rect x="34" y="465" width="1" height="1" fill="#808080"/><rect x="34" y="467" width="1" height="1" fill="#808080"/><rect x="34" y="469" width="1" height="1" fill="#808080"/><rect x="34" y="471" width="1" height="1" fill="#808080"/><rect x="34" y="473" width="1" height="1" fill="#808080"/><rect x="34" y="475" width="1" height="1" fill="#808080"/><rect x="34" y="477" width="1" height="1" fill="#808080"/><rect x="34" y="479" width="1" height="1" fill="#808080"/><rect x="34" y="481" width="1" height="1" fill="#808080"/><rect x="34" y="483" width="1" height="1" fill="#808080"/><rect x="34" y="485" width="1" height="1" fill="#808080"/><rect x="34" y="487" width="1" height="1" fill="#808080"/><rect x="34" y="489" width="1" height="1" fill="#808080"/><rect x="34" y="491" width="1" height="1" fill="#808080"/><rect x="34" y="493" width="1" height="1" fill="#808080"/><rect x="34" y="495" width="1" height="1" fill="#808080"/><rect x="34" y="497" width="1" height="1" fill="#808080"/><rect x="34" y="499" width="1" height="1" fill="#808080"/><rect x="34" y="501" width="1" height="1" fill="#808080"/><rect x="34" y="503" width="1" height="1" fill="#808080"/><rect x="34" y="505" width="1" height="1" fill="#808080"/><rect x="34" y="507" width="1" height="1" fill="#808080"/><rect x="34" y="509" width="1" height="1" fill="#808080"/><rect x="34" y="511" width="1" height="1" fill="#808080"/><rect x="34" y="513" width="1" height="1" fill="#808080"/><rect x="34" y="515" width="1" height="1" fill="#808080"/><rect x="34" y="517" width="1" height="1" fill="#808080"/><rect x="34" y="519" width="1" height="1" fill="#808080"/><rect x="34" y="521" width="1" height="1" fill="#808080"/><rect x="34" y="523" width="1" height="1" fill="#808080"/><rect x="34" y="525" width="1" height="1" fill="#808080"/><rect x="34" y="527" width="1" height="1" fill="#808080"/><rect x="34" y="529" width="1" height="1" fill="#808080"/><rect x="34" y="531" width="1" height="1" fill="#808080"/><rect x="34" y="533" width="1" height="1" fill="#808080"/><rect x="34" y="535" width="1" height="1" fill="#808080"/><rect x="34" y="537" width="1" height="1" fill="#808080"/><rect x="34" y="539" width="1" height="1" fill="#808080"/><rect x="34" y="541" width="1" height="1" fill="#808080"/><rect x="34" y="543" width="1" height="1" fill="#808080"/><rect x="34" y="545" width="1" height="1" fill="#808080"/><rect x="34" y="547" width="1" height="1" fill="#808080"/><rect x="34" y="549" width="1" height="1" fill="#808080"/><rect x="34" y="551" width="1" height="1" fill="#808080"/><rect x="34" y="553" width="1" height="1" fill="#808080"/><rect x="34" y="555" width="1" height="1" fill="#808080"/><rect x="34" y="557" width="1" height="1" fill="#808080"/><rect x="34" y="559" width="1" height="1" fill="#808080"/><rect x="34" y="561" width="1" height="1" fill="#808080"/><rect x="34" y="563" width="1" height="1" fill="#808080"/><rect x="34" y="565" width="1" height="1" fill="#808080"/><rect x="34" y="567" width="1" height="1" fill="#808080"/><rect x="34" y="569" width="1" height="1" fill="#808080"/><rect x="34" y="571" width="1" height="1" fill="#808080"/><rect x="34" y="573" width="1" height="1" fill="#808080"/><rect x="34" y="575" width="1" height="1" fill="#808080"/><rect x="34" y="577" width="1" height="1" fill="#808080"/><rect x="34" y="579" width="1" height="1" fill="#808080"/><rect x="34" y="581" width="1" height="1" fill="#808080"/><rect x="34" y="583" width="1" height="1" fill="#808080"/><rect x="34" y="585" width="1" height="1" fill="#808080"/><rect x="34" y="587" width="1" height="1" fill="#808080"/><rect x="34" y="589" width="1" height="1" fill="#808080"/><rect x="34" y="591" width="1" height="1" fill="#808080"/><rect x="34" y="593" width="1" height="1" fill="#808080"/><rect x="34" y="595" width="1" height="1" fill="#808080"/><rect x="34" y="597" width="1" height="1" fill="#808080"/><rect x="34" y="599" width="1" height="1" fill="#808080"/><rect x="34" y="601" width="1" height="1" fill="#808080"/><rect x="34" y="603" width="1" height="1" fill="#808080"/><rect x="34" y="605" width="1" height="1" fill="#808080"/><rect x="34" y="607" width="1" height="1" fill="#808080"/><rect x="34" y="609" width="1" height="1" fill="#808080"/><rect x="34" y="611" width="1" height="1" fill="#808080"/><rect x="34" y="613" width="1" height="1" fill="#808080"/><rect x="34" y="615" width="1" height="1" fill="#808080"/><rect x="34" y="617" width="1" height="1" fill="#808080"/><rect x="34" y="619" width="1" height="1" fill="#808080"/><rect x="40" y="123" width="1" height="1" fill="#808080"/><rect x="42" y="123" width="1" height="1" fill="#808080"/><rect x="44" y="123" width="1" height="1" fill="#808080"/><rect x="54" y="147" width="1" height="1" fill="#808080"/><rect x="54" y="149" width="1" height="1" fill="#808080"/><rect x="54" y="151" width="1" height="1" fill="#808080"/><rect x="54" y="153" width="1" height="1" fill="#808080"/><rect x="54" y="155" width="1" height="1" fill="#808080"/><rect x="34" y="139" width="1" height="1" fill="#808080"/><rect x="34" y="141" width="1" height="1" fill="#808080"/><rect x="34" y="143" width="1" height="1" fill="#808080"/><rect x="34" y="145" width="1" height="1" fill="#808080"/><rect x="34" y="147" width="1" height="1" fill="#808080"/><rect x="34" y="149" width="1" height="1" fill="#808080"/><rect x="34" y="151" width="1" height="1" fill="#808080"/><rect x="34" y="153" width="1" height="1" fill="#808080"/><rect x="34" y="155" width="1" height="1" fill="#808080"/><rect x="34" y="157" width="1" height="1" fill="#808080"/><rect x="34" y="159" width="1" height="1" fill="#808080"/><rect x="34" y="161" width="1" height="1" fill="#808080"/><rect x="34" y="163" width="1" height="1" fill="#808080"/><rect x="34" y="165" width="1" height="1" fill="#808080"/><rect x="34" y="167" width="1" height="1" fill="#808080"/><rect x="34" y="169" width="1" height="1" fill="#808080"/><rect x="34" y="171" width="1" height="1" fill="#808080"/><rect x="34" y="173" width="1" height="1" fill="#808080"/><rect x="34" y="175" width="1" height="1" fill="#808080"/><rect x="34" y="177" width="1" height="1" fill="#808080"/><rect x="34" y="179" width="1" height="1" fill="#808080"/><rect x="34" y="181" width="1" height="1" fill="#808080"/><rect x="34" y="183" width="1" height="1" fill="#808080"/><rect x="34" y="185" width="1" height="1" fill="#808080"/><rect x="34" y="187" width="1" height="1" fill="#808080"/><rect x="34" y="189" width="1" height="1" fill="#808080"/><rect x="34" y="191" width="1" height="1" fill="#808080"/><rect x="34" y="193" width="1" height="1" fill="#808080"/><rect x="34" y="195" width="1" height="1" fill="#808080"/><rect x="34" y="197" width="1" height="1" fill="#808080"/><rect x="34" y="199" width="1" height="1" fill="#808080"/><rect x="34" y="201" width="1" height="1" fill="#808080"/><rect x="34" y="203" width="1" height="1" fill="#808080"/><rect x="34" y="205" width="1" height="1" fill="#808080"/><rect x="34" y="207" width="1" height="1" fill="#808080"/><rect x="34" y="209" width="1" height="1" fill="#808080"/><rect x="34" y="211" width="1" height="1" fill="#808080"/><rect x="34" y="213" width="1" height="1" fill="#808080"/><rect x="34" y="215" width="1" height="1" fill="#808080"/><rect x="34" y="217" width="1" height="1" fill="#808080"/><rect x="34" y="219" width="1" height="1" fill="#808080"/><rect x="34" y="221" width="1" height="1" fill="#808080"/><rect x="34" y="223" width="1" height="1" fill="#808080"/><rect x="34" y="225" width="1" height="1" fill="#808080"/><rect x="34" y="227" width="1" height="1" fill="#808080"/><rect x="34" y="229" width="1" height="1" fill="#808080"/><rect x="34" y="231" width="1" height="1" fill="#808080"/><rect x="34" y="233" width="1" height="1" fill="#808080"/><rect x="34" y="235" width="1" height="1" fill="#808080"/><rect x="34" y="237" width="1" height="1" fill="#808080"/><rect x="34" y="239" width="1" height="1" fill="#808080"/><rect x="34" y="241" width="1" height="1" fill="#808080"/><rect x="34" y="243" width="1" height="1" fill="#808080"/><rect x="34" y="245" width="1" height="1" fill="#808080"/><rect x="34" y="247" width="1" height="1" fill="#808080"/><rect x="34" y="249" width="1" height="1" fill="#808080"/><rect x="34" y="251" width="1" height="1" fill="#808080"/><rect x="34" y="253" width="1" height="1" fill="#808080"/><rect x="34" y="255" width="1" height="1" fill="#808080"/><rect x="34" y="257" width="1" height="1" fill="#808080"/><rect x="34" y="259" width="1" height="1" fill="#808080"/><rect x="34" y="261" width="1" height="1" fill="#808080"/><rect x="34" y="263" width="1" height="1" fill="#808080"/><rect x="34" y="265" width="1" height="1" fill="#808080"/><rect x="34" y="267" width="1" height="1" fill="#808080"/><rect x="34" y="269" width="1" height="1" fill="#808080"/><rect x="34" y="271" width="1" height="1" fill="#808080"/><rect x="34" y="273" width="1" height="1" fill="#808080"/><rect x="34" y="275" width="1" height="1" fill="#808080"/><rect x="34" y="277" width="1" height="1" fill="#808080"/><rect x="34" y="279" width="1" height="1" fill="#808080"/><rect x="34" y="281" width="1" height="1" fill="#808080"/><rect x="34" y="283" width="1" height="1" fill="#808080"/><rect x="34" y="285" width="1" height="1" fill="#808080"/><rect x="34" y="287" width="1" height="1" fill="#808080"/><rect x="34" y="289" width="1" height="1" fill="#808080"/><rect x="34" y="291" width="1" height="1" fill="#808080"/><rect x="34" y="293" width="1" height="1" fill="#808080"/><rect x="34" y="295" width="1" height="1" fill="#808080"/><rect x="34" y="297" width="1" height="1" fill="#808080"/><rect x="34" y="299" width="1" height="1" fill="#808080"/><rect x="34" y="301" width="1" height="1" fill="#808080"/><rect x="34" y="303" width="1" height="1" fill="#808080"/><rect x="34" y="305" width="1" height="1" fill="#808080"/><rect x="34" y="307" width="1" height="1" fill="#808080"/><rect x="34" y="309" width="1" height="1" fill="#808080"/><rect x="34" y="311" width="1" height="1" fill="#808080"/><rect x="34" y="313" width="1" height="1" fill="#808080"/><rect x="34" y="315" width="1" height="1" fill="#808080"/><rect x="34" y="317" width="1" height="1" fill="#808080"/><rect x="34" y="319" width="1" height="1" fill="#808080"/><rect x="34" y="321" width="1" height="1" fill="#808080"/><rect x="34" y="323" width="1" height="1" fill="#808080"/><rect x="34" y="325" width="1" height="1" fill="#808080"/><rect x="34" y="327" width="1" height="1" fill="#808080"/><rect x="34" y="329" width="1" height="1" fill="#808080"/><rect x="34" y="331" width="1" height="1" fill="#808080"/><rect x="34" y="333" width="1" height="1" fill="#808080"/><rect x="34" y="335" width="1" height="1" fill="#808080"/><rect x="34" y="337" width="1" height="1" fill="#808080"/><rect x="34" y="339" width="1" height="1" fill="#808080"/><rect x="34" y="341" width="1" height="1" fill="#808080"/><rect x="34" y="343" width="1" height="1" fill="#808080"/><rect x="34" y="345" width="1" height="1" fill="#808080"/><rect x="34" y="347" width="1" height="1" fill="#808080"/><rect x="34" y="349" width="1" height="1" fill="#808080"/><rect x="34" y="351" width="1" height="1" fill="#808080"/><rect x="34" y="353" width="1" height="1" fill="#808080"/><rect x="34" y="355" width="1" height="1" fill="#808080"/><rect x="34" y="357" width="1" height="1" fill="#808080"/><rect x="34" y="359" width="1" height="1" fill="#808080"/><rect x="34" y="361" width="1" height="1" fill="#808080"/><rect x="34" y="363" width="1" height="1" fill="#808080"/><rect x="34" y="365" width="1" height="1" fill="#808080"/><rect x="34" y="367" width="1" height="1" fill="#808080"/><rect x="34" y="369" width="1" height="1" fill="#808080"/><rect x="34" y="371" width="1" height="1" fill="#808080"/><rect x="34" y="373" width="1" height="1" fill="#808080"/><rect x="34" y="375" width="1" height="1" fill="#808080"/><rect x="34" y="377" width="1" height="1" fill="#808080"/><rect x="34" y="379" width="1" height="1" fill="#808080"/><rect x="34" y="381" width="1" height="1" fill="#808080"/><rect x="34" y="383" width="1" height="1" fill="#808080"/><rect x="34" y="385" width="1" height="1" fill="#808080"/><rect x="34" y="387" width="1" height="1" fill="#808080"/><rect x="34" y="389" width="1" height="1" fill="#808080"/><rect x="34" y="391" width="1" height="1" fill="#808080"/><rect x="34" y="393" width="1" height="1" fill="#808080"/><rect x="34" y="395" width="1" height="1" fill="#808080"/><rect x="34" y="397" width="1" height="1" fill="#808080"/><rect x="34" y="399" width="1" height="1" fill="#808080"/><rect x="34" y="401" width="1" height="1" fill="#808080"/><rect x="34" y="403" width="1" height="1" fill="#808080"/><rect x="34" y="405" width="1" height="1" fill="#808080"/><rect x="34" y="407" width="1" height="1" fill="#808080"/><rect x="34" y="409" width="1" height="1" fill="#808080"/><rect x="34" y="411" width="1" height="1" fill="#808080"/><rect x="34" y="413" width="1" height="1" fill="#808080"/><rect x="34" y="415" width="1" height="1" fill="#808080"/><rect x="34" y="417" width="1" height="1" fill="#808080"/><rect x="34" y="419" width="1" height="1" fill="#808080"/><rect x="34" y="421" width="1" height="1" fill="#808080"/><rect x="34" y="423" width="1" height="1" fill="#808080"/><rect x="34" y="425" width="1" height="1" fill="#808080"/><rect x="34" y="427" width="1" height="1" fill="#808080"/><rect x="34" y="429" width="1" height="1" fill="#808080"/><rect x="34" y="431" width="1" height="1" fill="#808080"/><rect x="34" y="433" width="1" height="1" fill="#808080"/><rect x="34" y="435" width="1" height="1" fill="#808080"/><rect x="34" y="437" width="1" height="1" fill="#808080"/><rect x="34" y="439" width="1" height="1" fill="#808080"/><rect x="34" y="441" width="1" height="1" fill="#808080"/><rect x="34" y="443" width="1" height="1" fill="#808080"/><rect x="34" y="445" width="1" height="1" fill="#808080"/><rect x="34" y="447" width="1" height="1" fill="#808080"/><rect x="34" y="449" width="1" height="1" fill="#808080"/><rect x="34" y="451" width="1" height="1" fill="#808080"/><rect x="34" y="453" width="1" height="1" fill="#808080"/><rect x="34" y="455" width="1" height="1" fill="#808080"/><rect x="34" y="457" width="1" height="1" fill="#808080"/><rect x="34" y="459" width="1" height="1" fill="#808080"/><rect x="34" y="461" width="1" height="1" fill="#808080"/><rect x="34" y="463" width="1" height="1" fill="#808080"/><rect x="34" y="465" width="1" height="1" fill="#808080"/><rect x="34" y="467" width="1" height="1" fill="#808080"/><rect x="34" y="469" width="1" height="1" fill="#808080"/><rect x="34" y="471" width="1" height="1" fill="#808080"/><rect x="34" y="473" width="1" height="1" fill="#808080"/><rect x="34" y="475" width="1" height="1" fill="#808080"/><rect x="34" y="477" width="1" height="1" fill="#808080"/><rect x="34" y="479" width="1" height="1" fill="#808080"/><rect x="34" y="481" width="1" height="1" fill="#808080"/><rect x="34" y="483" width="1" height="1" fill="#808080"/><rect x="34" y="485" width="1" height="1" fill="#808080"/><rect x="34" y="487" width="1" height="1" fill="#808080"/><rect x="34" y="489" width="1" height="1" fill="#808080"/><rect x="34" y="491" width="1" height="1" fill="#808080"/><rect x="34" y="493" width="1" height="1" fill="#808080"/><rect x="34" y="495" width="1" height="1" fill="#808080"/><rect x="34" y="497" width="1" height="1" fill="#808080"/><rect x="34" y="499" width="1" height="1" fill="#808080"/><rect x="34" y="501" width="1" height="1" fill="#808080"/><rect x="34" y="503" width="1" height="1" fill="#808080"/><rect x="34" y="505" width="1" height="1" fill="#808080"/><rect x="34" y="507" width="1" height="1" fill="#808080"/><rect x="34" y="509" width="1" height="1" fill="#808080"/><rect x="34" y="511" width="1" height="1" fill="#808080"/><rect x="34" y="513" width="1" height="1" fill="#808080"/><rect x="34" y="515" width="1" height="1" fill="#808080"/><rect x="34" y="517" width="1" height="1" fill="#808080"/><rect x="34" y="519" width="1" height="1" fill="#808080"/><rect x="34" y="521" width="1" height="1" fill="#808080"/><rect x="34" y="523" width="1" height="1" fill="#808080"/><rect x="34" y="525" width="1" height="1" fill="#808080"/><rect x="34" y="527" width="1" height="1" fill="#808080"/><rect x="34" y="529" width="1" height="1" fill="#808080"/><rect x="34" y="531" width="1" height="1" fill="#808080"/><rect x="34" y="533" width="1" height="1" fill="#808080"/><rect x="34" y="535" width="1" height="1" fill="#808080"/><rect x="34" y="537" width="1" height="1" fill="#808080"/><rect x="34" y="539" width="1" height="1" fill="#808080"/><rect x="34" y="541" width="1" height="1" fill="#808080"/><rect x="34" y="543" width="1" height="1" fill="#808080"/><rect x="34" y="545" width="1" height="1" fill="#808080"/><rect x="34" y="547" width="1" height="1" fill="#808080"/><rect x="34" y="549" width="1" height="1" fill="#808080"/><rect x="34" y="551" width="1" height="1" fill="#808080"/><rect x="34" y="553" width="1" height="1" fill="#808080"/><rect x="34" y="555" width="1" height="1" fill="#808080"/><rect x="34" y="557" width="1" height="1" fill="#808080"/><rect x="34" y="559" width="1" height="1" fill="#808080"/><rect x="34" y="561" width="1" height="1" fill="#808080"/><rect x="34" y="563" width="1" height="1" fill="#808080"/><rect x="34" y="565" width="1" height="1" fill="#808080"/><rect x="34" y="567" width="1" height="1" fill="#808080"/><rect x="34" y="569" width="1" height="1" fill="#808080"/><rect x="34" y="571" width="1" height="1" fill="#808080"/><rect x="34" y="573" width="1" height="1" fill="#808080"/><rect x="34" y="575" width="1" height="1" fill="#808080"/><rect x="34" y="577" width="1" height="1" fill="#808080"/><rect x="34" y="579" width="1" height="1" fill="#808080"/><rect x="34" y="581" width="1" height="1" fill="#808080"/><rect x="34" y="583" width="1" height="1" fill="#808080"/><rect x="34" y="585" width="1" height="1" fill="#808080"/><rect x="34" y="587" width="1" height="1" fill="#808080"/><rect x="34" y="589" width="1" height="1" fill="#808080"/><rect x="34" y="591" width="1" height="1" fill="#808080"/><rect x="34" y="593" width="1" height="1" fill="#808080"/><rect x="34" y="595" width="1" height="1" fill="#808080"/><rect x="34" y="597" width="1" height="1" fill="#808080"/><rect x="34" y="599" width="1" height="1" fill="#808080"/><rect x="34" y="601" width="1" height="1" fill="#808080"/><rect x="34" y="603" width="1" height="1" fill="#808080"/><rect x="34" y="605" width="1" height="1" fill="#808080"/><rect x="34" y="607" width="1" height="1" fill="#808080"/><rect x="34" y="609" width="1" height="1" fill="#808080"/><rect x="34" y="611" width="1" height="1" fill="#808080"/><rect x="34" y="613" width="1" height="1" fill="#808080"/><rect x="34" y="615" width="1" height="1" fill="#808080"/><rect x="34" y="617" width="1" height="1" fill="#808080"/><rect x="34" y="619" width="1" height="1" fill="#808080"/><rect x="40" y="139" width="1" height="1" fill="#808080"/><rect x="42" y="139" width="1" height="1" fill="#808080"/><rect x="44" y="139" width="1" height="1" fill="#808080"/><rect x="74" y="163" width="1" height="1" fill="#808080"/><rect x="74" y="165" width="1" height="1" fill="#808080"/><rect x="74" y="167" width="1" height="1" fill="#808080"/><rect x="74" y="169" width="1" height="1" fill="#808080"/><rect x="74" y="171" width="1" height="1" fill="#808080"/><rect x="74" y="173" width="1" height="1" fill="#808080"/><rect x="74" y="175" width="1" height="1" fill="#808080"/><rect x="74" y="177" width="1" height="1" fill="#808080"/><rect x="74" y="179" width="1" height="1" fill="#808080"/><rect x="74" y="181" width="1" height="1" fill="#808080"/><rect x="74" y="183" width="1" height="1" fill="#808080"/><rect x="74" y="185" width="1" height="1" fill="#808080"/><rect x="74" y="187" width="1" height="1" fill="#808080"/><rect x="74" y="189" width="1" height="1" fill="#808080"/><rect x="74" y="191" width="1" height="1" fill="#808080"/><rect x="74" y="193" width="1" height="1" fill="#808080"/><rect x="74" y="195" width="1" height="1" fill="#808080"/><rect x="74" y="197" width="1" height="1" fill="#808080"/><rect x="74" y="199" width="1" height="1" fill="#808080"/><rect x="74" y="201" width="1" height="1" fill="#808080"/><rect x="74" y="203" width="1" height="1" fill="#808080"/><rect x="74" y="205" width="1" height="1" fill="#808080"/><rect x="74" y="207" width="1" height="1" fill="#808080"/><rect x="74" y="209" width="1" height="1" fill="#808080"/><rect x="74" y="211" width="1" height="1" fill="#808080"/><rect x="74" y="213" width="1" height="1" fill="#808080"/><rect x="74" y="215" width="1" height="1" fill="#808080"/><rect x="74" y="217" width="1" height="1" fill="#808080"/><rect x="74" y="219" width="1" height="1" fill="#808080"/><rect x="74" y="221" width="1" height="1" fill="#808080"/><rect x="74" y="223" width="1" height="1" fill="#808080"/><rect x="74" y="225" width="1" height="1" fill="#808080"/><rect x="74" y="227" width="1" height="1" fill="#808080"/><rect x="74" y="229" width="1" height="1" fill="#808080"/><rect x="74" y="231" width="1" height="1" fill="#808080"/><rect x="74" y="233" width="1" height="1" fill="#808080"/><rect x="74" y="235" width="1" height="1" fill="#808080"/><rect x="74" y="237" width="1" height="1" fill="#808080"/><rect x="74" y="239" width="1" height="1" fill="#808080"/><rect x="74" y="241" width="1" height="1" fill="#808080"/><rect x="74" y="243" width="1" height="1" fill="#808080"/><rect x="74" y="245" width="1" height="1" fill="#808080"/><rect x="74" y="247" width="1" height="1" fill="#808080"/><rect x="74" y="249" width="1" height="1" fill="#808080"/><rect x="74" y="251" width="1" height="1" fill="#808080"/><rect x="74" y="253" width="1" height="1" fill="#808080"/><rect x="74" y="255" width="1" height="1" fill="#808080"/><rect x="74" y="257" width="1" height="1" fill="#808080"/><rect x="74" y="259" width="1" height="1" fill="#808080"/><rect x="74" y="261" width="1" height="1" fill="#808080"/><rect x="74" y="263" width="1" height="1" fill="#808080"/><rect x="74" y="265" width="1" height="1" fill="#808080"/><rect x="74" y="267" width="1" height="1" fill="#808080"/><rect x="74" y="269" width="1" height="1" fill="#808080"/><rect x="74" y="271" width="1" height="1" fill="#808080"/><rect x="74" y="273" width="1" height="1" fill="#808080"/><rect x="74" y="275" width="1" height="1" fill="#808080"/><rect x="74" y="277" width="1" height="1" fill="#808080"/><rect x="74" y="279" width="1" height="1" fill="#808080"/><rect x="74" y="281" width="1" height="1" fill="#808080"/><rect x="74" y="283" width="1" height="1" fill="#808080"/><rect x="74" y="285" width="1" height="1" fill="#808080"/><rect x="74" y="287" width="1" height="1" fill="#808080"/><rect x="74" y="289" width="1" height="1" fill="#808080"/><rect x="74" y="291" width="1" height="1" fill="#808080"/><rect x="74" y="293" width="1" height="1" fill="#808080"/><rect x="74" y="295" width="1" height="1" fill="#808080"/><rect x="74" y="297" width="1" height="1" fill="#808080"/><rect x="74" y="299" width="1" height="1" fill="#808080"/><rect x="74" y="301" width="1" height="1" fill="#808080"/><rect x="74" y="303" width="1" height="1" fill="#808080"/><rect x="74" y="305" width="1" height="1" fill="#808080"/><rect x="74" y="307" width="1" height="1" fill="#808080"/><rect x="74" y="309" width="1" height="1" fill="#808080"/><rect x="74" y="311" width="1" height="1" fill="#808080"/><rect x="74" y="313" width="1" height="1" fill="#808080"/><rect x="74" y="315" width="1" height="1" fill="#808080"/><rect x="74" y="317" width="1" height="1" fill="#808080"/><rect x="74" y="319" width="1" height="1" fill="#808080"/><rect x="74" y="321" width="1" height="1" fill="#808080"/><rect x="74" y="323" width="1" height="1" fill="#808080"/><rect x="74" y="325" width="1" height="1" fill="#808080"/><rect x="74" y="327" width="1" height="1" fill="#808080"/><rect x="74" y="329" width="1" height="1" fill="#808080"/><rect x="74" y="331" width="1" height="1" fill="#808080"/><rect x="74" y="333" width="1" height="1" fill="#808080"/><rect x="74" y="335" width="1" height="1" fill="#808080"/><rect x="74" y="337" width="1" height="1" fill="#808080"/><rect x="74" y="339" width="1" height="1" fill="#808080"/><rect x="74" y="341" width="1" height="1" fill="#808080"/><rect x="74" y="343" width="1" height="1" fill="#808080"/><rect x="74" y="345" width="1" height="1" fill="#808080"/><rect x="74" y="347" width="1" height="1" fill="#808080"/><rect x="74" y="349" width="1" height="1" fill="#808080"/><rect x="74" y="351" width="1" height="1" fill="#808080"/><rect x="74" y="353" width="1" height="1" fill="#808080"/><rect x="74" y="355" width="1" height="1" fill="#808080"/><rect x="74" y="357" width="1" height="1" fill="#808080"/><rect x="74" y="359" width="1" height="1" fill="#808080"/><rect x="74" y="361" width="1" height="1" fill="#808080"/><rect x="74" y="363" width="1" height="1" fill="#808080"/><rect x="74" y="365" width="1" height="1" fill="#808080"/><rect x="74" y="367" width="1" height="1" fill="#808080"/><rect x="74" y="369" width="1" height="1" fill="#808080"/><rect x="74" y="371" width="1" height="1" fill="#808080"/><rect x="74" y="373" width="1" height="1" fill="#808080"/><rect x="74" y="375" width="1" height="1" fill="#808080"/><rect x="74" y="377" width="1" height="1" fill="#808080"/><rect x="74" y="379" width="1" height="1" fill="#808080"/><rect x="60" y="155" width="1" height="1" fill="#808080"/><rect x="62" y="155" width="1" height="1" fill="#808080"/><rect x="64" y="155" width="1" height="1" fill="#808080"/><rect x="94" y="179" width="1" height="1" fill="#808080"/><rect x="94" y="181" width="1" height="1" fill="#808080"/><rect x="94" y="183" width="1" height="1" fill="#808080"/><rect x="94" y="185" width="1" height="1" fill="#808080"/><rect x="94" y="187" width="1" height="1" fill="#808080"/><rect x="94" y="189" width="1" height="1" fill="#808080"/><rect x="94" y="191" width="1" height="1" fill="#808080"/><rect x="94" y="193" width="1" height="1" fill="#808080"/><rect x="94" y="195" width="1" height="1" fill="#808080"/><rect x="94" y="197" width="1" height="1" fill="#808080"/><rect x="94" y="199" width="1" height="1" fill="#808080"/><rect x="94" y="201" width="1" height="1" fill="#808080"/><rect x="94" y="203" width="1" height="1" fill="#808080"/><rect x="94" y="205" width="1" height="1" fill="#808080"/><rect x="94" y="207" width="1" height="1" fill="#808080"/><rect x="94" y="209" width="1" height="1" fill="#808080"/><rect x="94" y="211" width="1" height="1" fill="#808080"/><rect x="94" y="213" width="1" height="1" fill="#808080"/><rect x="94" y="215" width="1" height="1" fill="#808080"/><rect x="94" y="217" width="1" height="1" fill="#808080"/><rect x="94" y="219" width="1" height="1" fill="#808080"/><rect x="94" y="221" width="1" height="1" fill="#808080"/><rect x="94" y="223" width="1" height="1" fill="#808080"/><rect x="94" y="225" width="1" height="1" fill="#808080"/><rect x="94" y="227" width="1" height="1" fill="#808080"/><rect x="94" y="229" width="1" height="1" fill="#808080"/><rect x="94" y="231" width="1" height="1" fill="#808080"/><rect x="94" y="233" width="1" height="1" fill="#808080"/><rect x="94" y="235" width="1" height="1" fill="#808080"/><rect x="94" y="237" width="1" height="1" fill="#808080"/><rect x="94" y="239" width="1" height="1" fill="#808080"/><rect x="94" y="241" width="1" height="1" fill="#808080"/><rect x="94" y="243" width="1" height="1" fill="#808080"/><rect x="94" y="245" width="1" height="1" fill="#808080"/><rect x="94" y="247" width="1" height="1" fill="#808080"/><rect x="94" y="249" width="1" height="1" fill="#808080"/><rect x="94" y="251" width="1" height="1" fill="#808080"/><rect x="94" y="253" width="1" height="1" fill="#808080"/><rect x="94" y="255" width="1" height="1" fill="#808080"/><rect x="94" y="257" width="1" height="1" fill="#808080"/><rect x="94" y="259" width="1" height="1" fill="#808080"/><rect x="94" y="261" width="1" height="1" fill="#808080"/><rect x="94" y="263" width="1" height="1" fill="#808080"/><rect x="94" y="265" width="1" height="1" fill="#808080"/><rect x="94" y="267" width="1" height="1" fill="#808080"/><rect x="94" y="269" width="1" height="1" fill="#808080"/><rect x="94" y="271" width="1" height="1" fill="#808080"/><rect x="94" y="273" width="1" height="1" fill="#808080"/><rect x="94" y="275" width="1" height="1" fill="#808080"/><rect x="94" y="277" width="1" height="1" fill="#808080"/><rect x="94" y="279" width="1" height="1" fill="#808080"/><rect x="94" y="281" width="1" height="1" fill="#808080"/><rect x="94" y="283" width="1" height="1" fill="#808080"/><rect x="94" y="285" width="1" height="1" fill="#808080"/><rect x="94" y="287" width="1" height="1" fill="#808080"/><rect x="94" y="289" width="1" height="1" fill="#808080"/><rect x="94" y="291" width="1" height="1" fill="#808080"/><rect x="94" y="293" width="1" height="1" fill="#808080"/><rect x="94" y="295" width="1" height="1" fill="#808080"/><rect x="94" y="297" width="1" height="1" fill="#808080"/><rect x="94" y="299" width="1" height="1" fill="#808080"/><rect x="94" y="301" width="1" height="1" fill="#808080"/><rect x="94" y="303" width="1" height="1" fill="#808080"/><rect x="94" y="305" width="1" height="1" fill="#808080"/><rect x="94" y="307" width="1" height="1" fill="#808080"/><rect x="94" y="309" width="1" height="1" fill="#808080"/><rect x="94" y="311" width="1" height="1" fill="#808080"/><rect x="94" y="313" width="1" height="1" fill="#808080"/><rect x="94" y="315" width="1" height="1" fill="#808080"/><rect x="94" y="317" width="1" height="1" fill="#808080"/><rect x="94" y="319" width="1" height="1" fill="#808080"/><rect x="94" y="321" width="1" height="1" fill="#808080"/><rect x="94" y="323" width="1" height="1" fill="#808080"/><rect x="94" y="325" width="1" height="1" fill="#808080"/><rect x="94" y="327" width="1" height="1" fill="#808080"/><rect x="94" y="329" width="1" height="1" fill="#808080"/><rect x="94" y="331" width="1" height="1" fill="#808080"/><rect x="94" y="333" width="1" height="1" fill="#808080"/><rect x="94" y="335" width="1" height="1" fill="#808080"/><rect x="94" y="337" width="1" height="1" fill="#808080"/><rect x="94" y="339" width="1" height="1" fill="#808080"/><rect x="94" y="341" width="1" height="1" fill="#808080"/><rect x="94" y="343" width="1" height="1" fill="#808080"/><rect x="94" y="345" width="1" height="1" fill="#808080"/><rect x="94" y="347" width="1" height="1" fill="#808080"/><rect x="74" y="171" width="1" height="1" fill="#808080"/><rect x="74" y="173" width="1" height="1" fill="#808080"/><rect x="74" y="175" width="1" height="1" fill="#808080"/><rect x="74" y="177" width="1" height="1" fill="#808080"/><rect x="74" y="179" width="1" height="1" fill="#808080"/><rect x="74" y="181" width="1" height="1" fill="#808080"/><rect x="74" y="183" width="1" height="1" fill="#808080"/><rect x="74" y="185" width="1" height="1" fill="#808080"/><rect x="74" y="187" width="1" height="1" fill="#808080"/><rect x="74" y="189" width="1" height="1" fill="#808080"/><rect x="74" y="191" width="1" height="1" fill="#808080"/><rect x="74" y="193" width="1" height="1" fill="#808080"/><rect x="74" y="195" width="1" height="1" fill="#808080"/><rect x="74" y="197" width="1" height="1" fill="#808080"/><rect x="74" y="199" width="1" height="1" fill="#808080"/><rect x="74" y="201" width="1" height="1" fill="#808080"/><rect x="74" y="203" width="1" height="1" fill="#808080"/><rect x="74" y="205" width="1" height="1" fill="#808080"/><rect x="74" y="207" width="1" height="1" fill="#808080"/><rect x="74" y="209" width="1" height="1" fill="#808080"/><rect x="74" y="211" width="1" height="1" fill="#808080"/><rect x="74" y="213" width="1" height="1" fill="#808080"/><rect x="74" y="215" width="1" height="1" fill="#808080"/><rect x="74" y="217" width="1" height="1" fill="#808080"/><rect x="74" y="219" width="1" height="1" fill="#808080"/><rect x="74" y="221" width="1" height="1" fill="#808080"/><rect x="74" y="223" width="1" height="1" fill="#808080"/><rect x="74" y="225" width="1" height="1" fill="#808080"/><rect x="74" y="227" width="1" height="1" fill="#808080"/><rect x="74" y="229" width="1" height="1" fill="#808080"/><rect x="74" y="231" width="1" height="1" fill="#808080"/><rect x="74" y="233" width="1" height="1" fill="#808080"/><rect x="74" y="235" width="1" height="1" fill="#808080"/><rect x="74" y="237" width="1" height="1" fill="#808080"/><rect x="74" y="239" width="1" height="1" fill="#808080"/><rect x="74" y="241" width="1" height="1" fill="#808080"/><rect x="74" y="243" width="1" height="1" fill="#808080"/><rect x="74" y="245" width="1" height="1" fill="#808080"/><rect x="74" y="247" width="1" height="1" fill="#808080"/><rect x="74" y="249" width="1" height="1" fill="#808080"/><rect x="74" y="251" width="1" height="1" fill="#808080"/><rect x="74" y="253" width="1" height="1" fill="#808080"/><rect x="74" y="255" width="1" height="1" fill="#808080"/><rect x="74" y="257" width="1" height="1" fill="#808080"/><rect x="74" y="259" width="1" height="1" fill="#808080"/><rect x="74" y="261" width="1" height="1" fill="#808080"/><rect x="74" y="263" width="1" height="1" fill="#808080"/><rect x="74" y="265" width="1" height="1" fill="#808080"/><rect x="74" y="267" width="1" height="1" fill="#808080"/><rect x="74" y="269" width="1" height="1" fill="#808080"/><rect x="74" y="271" width="1" height="1" fill="#808080"/><rect x="74" y="273" width="1" height="1" fill="#808080"/><rect x="74" y="275" width="1" height="1" fill="#808080"/><rect x="74" y="277" width="1" height="1" fill="#808080"/><rect x="74" y="279" width="1" height="1" fill="#808080"/><rect x="74" y="281" width="1" height="1" fill="#808080"/><rect x="74" y="283" width="1" height="1" fill="#808080"/><rect x="74" y="285" width="1" height="1" fill="#808080"/><rect x="74" y="287" width="1" height="1" fill="#808080"/><rect x="74" y="289" width="1" height="1" fill="#808080"/><rect x="74" y="291" width="1" height="1" fill="#808080"/><rect x="74" y="293" width="1" height="1" fill="#808080"/><rect x="74" y="295" width="1" height="1" fill="#808080"/><rect x="74" y="297" width="1" height="1" fill="#808080"/><rect x="74" y="299" width="1" height="1" fill="#808080"/><rect x="74" y="301" width="1" height="1" fill="#808080"/><rect x="74" y="303" width="1" height="1" fill="#808080"/><rect x="74" y="305" width="1" height="1" fill="#808080"/><rect x="74" y="307" width="1" height="1" fill="#808080"/><rect x="74" y="309" width="1" height="1" fill="#808080"/><rect x="74" y="311" width="1" height="1" fill="#808080"/><rect x="74" y="313" width="1" height="1" fill="#808080"/><rect x="74" y="315" width="1" height="1" fill="#808080"/><rect x="74" y="317" width="1" height="1" fill="#808080"/><rect x="74" y="319" width="1" height="1" fill="#808080"/><rect x="74" y="321" width="1" height="1" fill="#808080"/><rect x="74" y="323" width="1" height="1" fill="#808080"/><rect x="74" y="325" width="1" height="1" fill="#808080"/><rect x="74" y="327" width="1" height="1" fill="#808080"/><rect x="74" y="329" width="1" height="1" fill="#808080"/><rect x="74" y="331" width="1" height="1" fill="#808080"/><rect x="74" y="333" width="1" height="1" fill="#808080"/><rect x="74" y="335" width="1" height="1" fill="#808080"/><rect x="74" y="337" width="1" height="1" fill="#808080"/><rect x="74" y="339" width="1" height="1" fill="#808080"/><rect x="74" y="341" width="1" height="1" fill="#808080"/><rect x="74" y="343" width="1" height="1" fill="#808080"/><rect x="74" y="345" width="1" height="1" fill="#808080"/><rect x="74" y="347" width="1" height="1" fill="#808080"/><rect x="74" y="349" width="1" height="1" fill="#808080"/><rect x="74" y="351" width="1" height="1" fill="#808080"/><rect x="74" y="353" width="1" height="1" fill="#808080"/><rect x="74" y="355" width="1" height="1" fill="#808080"/><rect x="74" y="357" width="1" height="1" fill="#808080"/><rect x="74" y="359" width="1" height="1" fill="#808080"/><rect x="74" y="361" width="1" height="1" fill="#808080"/><rect x="74" y="363" width="1" height="1" fill="#808080"/><rect x="74" y="365" width="1" height="1" fill="#808080"/><rect x="74" y="367" width="1" height="1" fill="#808080"/><rect x="74" y="369" width="1" height="1" fill="#808080"/><rect x="74" y="371" width="1" height="1" fill="#808080"/><rect x="74" y="373" width="1" height="1" fill="#808080"/><rect x="74" y="375" width="1" height="1" fill="#808080"/><rect x="74" y="377" width="1" height="1" fill="#808080"/><rect x="74" y="379" width="1" height="1" fill="#808080"/><rect x="80" y="171" width="1" height="1" fill="#808080"/><rect x="82" y="171" width="1" height="1" fill="#808080"/><rect x="84" y="171" width="1" height="1" fill="#808080"/><rect x="114" y="195" width="1" height="1" fill="#808080"/><rect x="114" y="197" width="1" height="1" fill="#808080"/><rect x="114" y="199" width="1" height="1" fill="#808080"/><rect x="114" y="201" width="1" height="1" fill="#808080"/><rect x="114" y="203" width="1" height="1" fill="#808080"/><rect x="114" y="205" width="1" height="1" fill="#808080"/><rect x="114" y="207" width="1" height="1" fill="#808080"/><rect x="114" y="209" width="1" height="1" fill="#808080"/><rect x="114" y="211" width="1" height="1" fill="#808080"/><rect x="114" y="213" width="1" height="1" fill="#808080"/><rect x="114" y="215" width="1" height="1" fill="#808080"/><rect x="114" y="217" width="1" height="1" fill="#808080"/><rect x="114" y="219" width="1" height="1" fill="#808080"/><rect x="114" y="221" width="1" height="1" fill="#808080"/><rect x="114" y="223" width="1" height="1" fill="#808080"/><rect x="114" y="225" width="1" height="1" fill="#808080"/><rect x="114" y="227" width="1" height="1" fill="#808080"/><rect x="114" y="229" width="1" height="1" fill="#808080"/><rect x="114" y="231" width="1" height="1" fill="#808080"/><rect x="114" y="233" width="1" height="1" fill="#808080"/><rect x="114" y="235" width="1" height="1" fill="#808080"/><rect x="94" y="187" width="1" height="1" fill="#808080"/><rect x="94" y="189" width="1" height="1" fill="#808080"/><rect x="94" y="191" width="1" height="1" fill="#808080"/><rect x="94" y="193" width="1" height="1" fill="#808080"/><rect x="94" y="195" width="1" height="1" fill="#808080"/><rect x="94" y="197" width="1" height="1" fill="#808080"/><rect x="94" y="199" width="1" height="1" fill="#808080"/><rect x="94" y="201" width="1" height="1" fill="#808080"/><rect x="94" y="203" width="1" height="1" fill="#808080"/><rect x="94" y="205" width="1" height="1" fill="#808080"/><rect x="94" y="207" width="1" height="1" fill="#808080"/><rect x="94" y="209" width="1" height="1" fill="#808080"/><rect x="94" y="211" width="1" height="1" fill="#808080"/><rect x="94" y="213" width="1" height="1" fill="#808080"/><rect x="94" y="215" width="1" height="1" fill="#808080"/><rect x="94" y="217" width="1" height="1" fill="#808080"/><rect x="94" y="219" width="1" height="1" fill="#808080"/><rect x="94" y="221" width="1" height="1" fill="#808080"/><rect x="94" y="223" width="1" height="1" fill="#808080"/><rect x="94" y="225" width="1" height="1" fill="#808080"/><rect x="94" y="227" width="1" height="1" fill="#808080"/><rect x="94" y="229" width="1" height="1" fill="#808080"/><rect x="94" y="231" width="1" height="1" fill="#808080"/><rect x="94" y="233" width="1" height="1" fill="#808080"/><rect x="94" y="235" width="1" height="1" fill="#808080"/><rect x="94" y="237" width="1" height="1" fill="#808080"/><rect x="94" y="239" width="1" height="1" fill="#808080"/><rect x="94" y="241" width="1" height="1" fill="#808080"/><rect x="94" y="243" width="1" height="1" fill="#808080"/><rect x="94" y="245" width="1" height="1" fill="#808080"/><rect x="94" y="247" width="1" height="1" fill="#808080"/><rect x="94" y="249" width="1" height="1" fill="#808080"/><rect x="94" y="251" width="1" height="1" fill="#808080"/><rect x="94" y="253" width="1" height="1" fill="#808080"/><rect x="94" y="255" width="1" height="1" fill="#808080"/><rect x="94" y="257" width="1" height="1" fill="#808080"/><rect x="94" y="259" width="1" height="1" fill="#808080"/><rect x="94" y="261" width="1" height="1" fill="#808080"/><rect x="94" y="263" width="1" height="1" fill="#808080"/><rect x="94" y="265" width="1" height="1" fill="#808080"/><rect x="94" y="267" width="1" height="1" fill="#808080"/><rect x="94" y="269" width="1" height="1" fill="#808080"/><rect x="94" y="271" width="1" height="1" fill="#808080"/><rect x="94" y="273" width="1" height="1" fill="#808080"/><rect x="94" y="275" width="1" height="1" fill="#808080"/><rect x="94" y="277" width="1" height="1" fill="#808080"/><rect x="94" y="279" width="1" height="1" fill="#808080"/><rect x="94" y="281" width="1" height="1" fill="#808080"/><rect x="94" y="283" width="1" height="1" fill="#808080"/><rect x="94" y="285" width="1" height="1" fill="#808080"/><rect x="94" y="287" width="1" height="1" fill="#808080"/><rect x="94" y="289" width="1" height="1" fill="#808080"/><rect x="94" y="291" width="1" height="1" fill="#808080"/><rect x="94" y="293" width="1" height="1" fill="#808080"/><rect x="94" y="295" width="1" height="1" fill="#808080"/><rect x="94" y="297" width="1" height="1" fill="#808080"/><rect x="94" y="299" width="1" height="1" fill="#808080"/><rect x="94" y="301" width="1" height="1" fill="#808080"/><rect x="94" y="303" width="1" height="1" fill="#808080"/><rect x="94" y="305" width="1" height="1" fill="#808080"/><rect x="94" y="307" width="1" height="1" fill="#808080"/><rect x="94" y="309" width="1" height="1" fill="#808080"/><rect x="94" y="311" width="1" height="1" fill="#808080"/><rect x="94" y="313" width="1" height="1" fill="#808080"/><rect x="94" y="315" width="1" height="1" fill="#808080"/><rect x="94" y="317" width="1" height="1" fill="#808080"/><rect x="94" y="319" width="1" height="1" fill="#808080"/><rect x="94" y="321" width="1" height="1" fill="#808080"/><rect x="94" y="323" width="1" height="1" fill="#808080"/><rect x="94" y="325" width="1" height="1" fill="#808080"/><rect x="94" y="327" width="1" height="1" fill="#808080"/><rect x="94" y="329" width="1" height="1" fill="#808080"/><rect x="94" y="331" width="1" height="1" fill="#808080"/><rect x="94" y="333" width="1" height="1" fill="#808080"/><rect x="94" y="335" width="1" height="1" fill="#808080"/><rect x="94" y="337" width="1" height="1" fill="#808080"/><rect x="94" y="339" width="1" height="1" fill="#808080"/><rect x="94" y="341" width="1" height="1" fill="#808080"/><rect x="94" y="343" width="1" height="1" fill="#808080"/><rect x="94" y="345" width="1" height="1" fill="#808080"/><rect x="94" y="347" width="1" height="1" fill="#808080"/><rect x="100" y="187" width="1" height="1" fill="#808080"/><rect x="102" y="187" width="1" height="1" fill="#808080"/><rect x="104" y="187" width="1" height="1" fill="#808080"/><rect x="114" y="203" width="1" height="1" fill="#808080"/><rect x="114" y="205" width="1" height="1" fill="#808080"/><rect x="114" y="207" width="1" height="1" fill="#808080"/><rect x="114" y="209" width="1" height="1" fill="#808080"/><rect x="114" y="211" width="1" height="1" fill="#808080"/><rect x="114" y="213" width="1" height="1" fill="#808080"/><rect x="114" y="215" width="1" height="1" fill="#808080"/><rect x="114" y="217" width="1" height="1" fill="#808080"/><rect x="114" y="219" width="1" height="1" fill="#808080"/><rect x="114" y="221" width="1" height="1" fill="#808080"/><rect x="114" y="223" width="1" height="1" fill="#808080"/><rect x="114" y="225" width="1" height="1" fill="#808080"/><rect x="114" y="227" width="1" height="1" fill="#808080"/><rect x="114" y="229" width="1" height="1" fill="#808080"/><rect x="114" y="231" width="1" height="1" fill="#808080"/><rect x="114" y="233" width="1" height="1" fill="#808080"/><rect x="114" y="235" width="1" height="1" fill="#808080"/><rect x="114" y="203" width="1" height="1" fill="#808080"/><rect x="116" y="203" width="1" height="1" fill="#808080"/><rect x="118" y="203" width="1" height="1" fill="#808080"/><rect x="120" y="203" width="1" height="1" fill="#808080"/><rect x="122" y="203" width="1" height="1" fill="#808080"/><rect x="124" y="203" width="1" height="1" fill="#808080"/><rect x="114" y="219" width="1" height="1" fill="#808080"/><rect x="114" y="221" width="1" height="1" fill="#808080"/><rect x="114" y="223" width="1" height="1" fill="#808080"/><rect x="114" y="225" width="1" height="1" fill="#808080"/><rect x="114" y="227" width="1" height="1" fill="#808080"/><rect x="114" y="229" width="1" height="1" fill="#808080"/><rect x="114" y="231" width="1" height="1" fill="#808080"/><rect x="114" y="233" width="1" height="1" fill="#808080"/><rect x="114" y="235" width="1" height="1" fill="#808080"/><rect x="114" y="219" width="1" height="1" fill="#808080"/><rect x="116" y="219" width="1" height="1" fill="#808080"/><rect x="118" y="219" width="1" height="1" fill="#808080"/><rect x="120" y="219" width="1" height="1" fill="#808080"/><rect x="122" y="219" width="1" height="1" fill="#808080"/><rect x="124" y="219" width="1" height="1" fill="#808080"/><rect x="114" y="235" width="1" height="1" fill="#808080"/><rect x="116" y="235" width="1" height="1" fill="#808080"/><rect x="118" y="235" width="1" height="1" fill="#808080"/><rect x="120" y="235" width="1" height="1" fill="#808080"/><rect x="122" y="235" width="1" height="1" fill="#808080"/><rect x="124" y="235" width="1" height="1" fill="#808080"/><rect x="94" y="251" width="1" height="1" fill="#808080"/><rect x="94" y="253" width="1" height="1" fill="#808080"/><rect x="94" y="255" width="1" height="1" fill="#808080"/><rect x="94" y="257" width="1" height="1" fill="#808080"/><rect x="94" y="259" width="1" height="1" fill="#808080"/><rect x="94" y="261" width="1" height="1" fill="#808080"/><rect x="94" y="263" width="1" height="1" fill="#808080"/><rect x="94" y="265" width="1" height="1" fill="#808080"/><rect x="94" y="267" width="1" height="1" fill="#808080"/><rect x="94" y="269" width="1" height="1" fill="#808080"/><rect x="94" y="271" width="1" height="1" fill="#808080"/><rect x="94" y="273" width="1" height="1" fill="#808080"/><rect x="94" y="275" width="1" height="1" fill="#808080"/><rect x="94" y="277" width="1" height="1" fill="#808080"/><rect x="94" y="279" width="1" height="1" fill="#808080"/><rect x="94" y="281" width="1" height="1" fill="#808080"/><rect x="94" y="283" width="1" height="1" fill="#808080"/><rect x="94" y="285" width="1" height="1" fill="#808080"/><rect x="94" y="287" width="1" height="1" fill="#808080"/><rect x="94" y="289" width="1" height="1" fill="#808080"/><rect x="94" y="291" width="1" height="1" fill="#808080"/><rect x="94" y="293" width="1" height="1" fill="#808080"/><rect x="94" y="295" width="1" height="1" fill="#808080"/><rect x="94" y="297" width="1" height="1" fill="#808080"/><rect x="94" y="299" width="1" height="1" fill="#808080"/><rect x="94" y="301" width="1" height="1" fill="#808080"/><rect x="94" y="303" width="1" height="1" fill="#808080"/><rect x="94" y="305" width="1" height="1" fill="#808080"/><rect x="94" y="307" width="1" height="1" fill="#808080"/><rect x="94" y="309" width="1" height="1" fill="#808080"/><rect x="94" y="311" width="1" height="1" fill="#808080"/><rect x="94" y="313" width="1" height="1" fill="#808080"/><rect x="94" y="315" width="1" height="1" fill="#808080"/><rect x="94" y="317" width="1" height="1" fill="#808080"/><rect x="94" y="319" width="1" height="1" fill="#808080"/><rect x="94" y="321" width="1" height="1" fill="#808080"/><rect x="94" y="323" width="1" height="1" fill="#808080"/><rect x="94" y="325" width="1" height="1" fill="#808080"/><rect x="94" y="327" width="1" height="1" fill="#808080"/><rect x="94" y="329" width="1" height="1" fill="#808080"/><rect x="94" y="331" width="1" height="1" fill="#808080"/><rect x="94" y="333" width="1" height="1" fill="#808080"/><rect x="94" y="335" width="1" height="1" fill="#808080"/><rect x="94" y="337" width="1" height="1" fill="#808080"/><rect x="94" y="339" width="1" height="1" fill="#808080"/><rect x="94" y="341" width="1" height="1" fill="#808080"/><rect x="94" y="343" width="1" height="1" fill="#808080"/><rect x="94" y="345" width="1" height="1" fill="#808080"/><rect x="94" y="347" width="1" height="1" fill="#808080"/><rect x="94" y="251" width="1" height="1" fill="#808080"/><rect x="96" y="251" width="1" height="1" fill="#808080"/><rect x="98" y="251" width="1" height="1" fill="#808080"/><rect x="100" y="251" width="1" height="1" fill="#808080"/><rect x="102" y="251" width="1" height="1" fill="#808080"/><rect x="104" y="251" width="1" height="1" fill="#808080"/><rect x="94" y="267" width="1" height="1" fill="#808080"/><rect x="94" y="269" width="1" height="1" fill="#808080"/><rect x="94" y="271" width="1" height="1" fill="#808080"/><rect x="94" y="273" width="1" height="1" fill="#808080"/><rect x="94" y="275" width="1" height="1" fill="#808080"/><rect x="94" y="277" width="1" height="1" fill="#808080"/><rect x="94" y="279" width="1" height="1" fill="#808080"/><rect x="94" y="281" width="1" height="1" fill="#808080"/><rect x="94" y="283" width="1" height="1" fill="#808080"/><rect x="94" y="285" width="1" height="1" fill="#808080"/><rect x="94" y="287" width="1" height="1" fill="#808080"/><rect x="94" y="289" width="1" height="1" fill="#808080"/><rect x="94" y="291" width="1" height="1" fill="#808080"/><rect x="94" y="293" width="1" height="1" fill="#808080"/><rect x="94" y="295" width="1" height="1" fill="#808080"/><rect x="94" y="297" width="1" height="1" fill="#808080"/><rect x="94" y="299" width="1" height="1" fill="#808080"/><rect x="94" y="301" width="1" height="1" fill="#808080"/><rect x="94" y="303" width="1" height="1" fill="#808080"/><rect x="94" y="305" width="1" height="1" fill="#808080"/><rect x="94" y="307" width="1" height="1" fill="#808080"/><rect x="94" y="309" width="1" height="1" fill="#808080"/><rect x="94" y="311" width="1" height="1" fill="#808080"/><rect x="94" y="313" width="1" height="1" fill="#808080"/><rect x="94" y="315" width="1" height="1" fill="#808080"/><rect x="94" y="317" width="1" height="1" fill="#808080"/><rect x="94" y="319" width="1" height="1" fill="#808080"/><rect x="94" y="321" width="1" height="1" fill="#808080"/><rect x="94" y="323" width="1" height="1" fill="#808080"/><rect x="94" y="325" width="1" height="1" fill="#808080"/><rect x="94" y="327" width="1" height="1" fill="#808080"/><rect x="94" y="329" width="1" height="1" fill="#808080"/><rect x="94" y="331" width="1" height="1" fill="#808080"/><rect x="94" y="333" width="1" height="1" fill="#808080"/><rect x="94" y="335" width="1" height="1" fill="#808080"/><rect x="94" y="337" width="1" height="1" fill="#808080"/><rect x="94" y="339" width="1" height="1" fill="#808080"/><rect x="94" y="341" width="1" height="1" fill="#808080"/><rect x="94" y="343" width="1" height="1" fill="#808080"/><rect x="94" y="345" width="1" height="1" fill="#808080"/><rect x="94" y="347" width="1" height="1" fill="#808080"/><rect x="94" y="267" width="1" height="1" fill="#808080"/><rect x="96" y="267" width="1" height="1" fill="#808080"/><rect x="98" y="267" width="1" height="1" fill="#808080"/><rect x="100" y="267" width="1" height="1" fill="#808080"/><rect x="102" y="267" width="1" height="1" fill="#808080"/><rect x="104" y="267" width="1" height="1" fill="#808080"/><rect x="94" y="283" width="1" height="1" fill="#808080"/><rect x="94" y="285" width="1" height="1" fill="#808080"/><rect x="94" y="287" width="1" height="1" fill="#808080"/><rect x="94" y="289" width="1" height="1" fill="#808080"/><rect x="94" y="291" width="1" height="1" fill="#808080"/><rect x="94" y="293" width="1" height="1" fill="#808080"/><rect x="94" y="295" width="1" height="1" fill="#808080"/><rect x="94" y="297" width="1" height="1" fill="#808080"/><rect x="94" y="299" width="1" height="1" fill="#808080"/><rect x="94" y="301" width="1" height="1" fill="#808080"/><rect x="94" y="303" width="1" height="1" fill="#808080"/><rect x="94" y="305" width="1" height="1" fill="#808080"/><rect x="94" y="307" width="1" height="1" fill="#808080"/><rect x="94" y="309" width="1" height="1" fill="#808080"/><rect x="94" y="311" width="1" height="1" fill="#808080"/><rect x="94" y="313" width="1" height="1" fill="#808080"/><rect x="94" y="315" width="1" height="1" fill="#808080"/><rect x="94" y="317" width="1" height="1" fill="#808080"/><rect x="94" y="319" width="1" height="1" fill="#808080"/><rect x="94" y="321" width="1" height="1" fill="#808080"/><rect x="94" y="323" width="1" height="1" fill="#808080"/><rect x="94" y="325" width="1" height="1" fill="#808080"/><rect x="94" y="327" width="1" height="1" fill="#808080"/><rect x="94" y="329" width="1" height="1" fill="#808080"/><rect x="94" y="331" width="1" height="1" fill="#808080"/><rect x="94" y="333" width="1" height="1" fill="#808080"/><rect x="94" y="335" width="1" height="1" fill="#808080"/><rect x="94" y="337" width="1" height="1" fill="#808080"/><rect x="94" y="339" width="1" height="1" fill="#808080"/><rect x="94" y="341" width="1" height="1" fill="#808080"/><rect x="94" y="343" width="1" height="1" fill="#808080"/><rect x="94" y="345" width="1" height="1" fill="#808080"/><rect x="94" y="347" width="1" height="1" fill="#808080"/><rect x="94" y="283" width="1" height="1" fill="#808080"/><rect x="96" y="283" width="1" height="1" fill="#808080"/><rect x="98" y="283" width="1" height="1" fill="#808080"/><rect x="100" y="283" width="1" height="1" fill="#808080"/><rect x="102" y="283" width="1" height="1" fill="#808080"/><rect x="104" y="283" width="1" height="1" fill="#808080"/><rect x="94" y="299" width="1" height="1" fill="#808080"/><rect x="94" y="301" width="1" height="1" fill="#808080"/><rect x="94" y="303" width="1" height="1" fill="#808080"/><rect x="94" y="305" width="1" height="1" fill="#808080"/><rect x="94" y="307" width="1" height="1" fill="#808080"/><rect x="94" y="309" width="1" height="1" fill="#808080"/><rect x="94" y="311" width="1" height="1" fill="#808080"/><rect x="94" y="313" width="1" height="1" fill="#808080"/><rect x="94" y="315" width="1" height="1" fill="#808080"/><rect x="94" y="317" width="1" height="1" fill="#808080"/><rect x="94" y="319" width="1" height="1" fill="#808080"/><rect x="94" y="321" width="1" height="1" fill="#808080"/><rect x="94" y="323" width="1" height="1" fill="#808080"/><rect x="94" y="325" width="1" height="1" fill="#808080"/><rect x="94" y="327" width="1" height="1" fill="#808080"/><rect x="94" y="329" width="1" height="1" fill="#808080"/><rect x="94" y="331" width="1" height="1" fill="#808080"/><rect x="94" y="333" width="1" height="1" fill="#808080"/><rect x="94" y="335" width="1" height="1" fill="#808080"/><rect x="94" y="337" width="1" height="1" fill="#808080"/><rect x="94" y="339" width="1" height="1" fill="#808080"/><rect x="94" y="341" width="1" height="1" fill="#808080"/><rect x="94" y="343" width="1" height="1" fill="#808080"/><rect x="94" y="345" width="1" height="1" fill="#808080"/><rect x="94" y="347" width="1" height="1" fill="#808080"/><rect x="94" y="299" width="1" height="1" fill="#808080"/><rect x="96" y="299" width="1" height="1" fill="#808080"/><rect x="98" y="299" width="1" height="1" fill="#808080"/><rect x="100" y="299" width="1" height="1" fill="#808080"/><rect x="102" y="299" width="1" height="1" fill="#808080"/><rect x="104" y="299" width="1" height="1" fill="#808080"/><rect x="94" y="315" width="1" height="1" fill="#808080"/><rect x="94" y="317" width="1" height="1" fill="#808080"/><rect x="94" y="319" width="1" height="1" fill="#808080"/><rect x="94" y="321" width="1" height="1" fill="#808080"/><rect x="94" y="323" width="1" height="1" fill="#808080"/><rect x="94" y="325" width="1" height="1" fill="#808080"/><rect x="94" y="327" width="1" height="1" fill="#808080"/><rect x="94" y="329" width="1" height="1" fill="#808080"/><rect x="94" y="331" width="1" height="1" fill="#808080"/><rect x="94" y="333" width="1" height="1" fill="#808080"/><rect x="94" y="335" width="1" height="1" fill="#808080"/><rect x="94" y="337" width="1" height="1" fill="#808080"/><rect x="94" y="339" width="1" height="1" fill="#808080"/><rect x="94" y="341" width="1" height="1" fill="#808080"/><rect x="94" y="343" width="1" height="1" fill="#808080"/><rect x="94" y="345" width="1" height="1" fill="#808080"/><rect x="94" y="347" width="1" height="1" fill="#808080"/><rect x="94" y="315" width="1" height="1" fill="#808080"/><rect x="96" y="315" width="1" height="1" fill="#808080"/><rect x="98" y="315" width="1" height="1" fill="#808080"/><rect x="100" y="315" width="1" height="1" fill="#808080"/><rect x="102" y="315" width="1" height="1" fill="#808080"/><rect x="104" y="315" width="1" height="1" fill="#808080"/><rect x="94" y="331" width="1" height="1" fill="#808080"/><rect x="94" y="333" width="1" height="1" fill="#808080"/><rect x="94" y="335" width="1" height="1" fill="#808080"/><rect x="94" y="337" width="1" height="1" fill="#808080"/><rect x="94" y="339" width="1" height="1" fill="#808080"/><rect x="94" y="341" width="1" height="1" fill="#808080"/><rect x="94" y="343" width="1" height="1" fill="#808080"/><rect x="94" y="345" width="1" height="1" fill="#808080"/><rect x="94" y="347" width="1" height="1" fill="#808080"/><rect x="94" y="331" width="1" height="1" fill="#808080"/><rect x="96" y="331" width="1" height="1" fill="#808080"/><rect x="98" y="331" width="1" height="1" fill="#808080"/><rect x="100" y="331" width="1" height="1" fill="#808080"/><rect x="102" y="331" width="1" height="1" fill="#808080"/><rect x="104" y="331" width="1" height="1" fill="#808080"/><rect x="94" y="347" width="1" height="1" fill="#808080"/><rect x="96" y="347" width="1" height="1" fill="#808080"/><rect x="98" y="347" width="1" height="1" fill="#808080"/><rect x="100" y="347" width="1" height="1" fill="#808080"/><rect x="102" y="347" width="1" height="1" fill="#808080"/><rect x="104" y="347" width="1" height="1" fill="#808080"/><rect x="74" y="363" width="1" height="1" fill="#808080"/><rect x="74" y="365" width="1" height="1" fill="#808080"/><rect x="74" y="367" width="1" height="1" fill="#808080"/><rect x="74" y="369" width="1" height="1" fill="#808080"/><rect x="74" y="371" width="1" height="1" fill="#808080"/><rect x="74" y="373" width="1" height="1" fill="#808080"/><rect x="74" y="375" width="1" height="1" fill="#808080"/><rect x="74" y="377" width="1" height="1" fill="#808080"/><rect x="74" y="379" width="1" height="1" fill="#808080"/><rect x="74" y="363" width="1" height="1" fill="#808080"/><rect x="76" y="363" width="1" height="1" fill="#808080"/><rect x="78" y="363" width="1" height="1" fill="#808080"/><rect x="80" y="363" width="1" height="1" fill="#808080"/><rect x="82" y="363" width="1" height="1" fill="#808080"/><rect x="84" y="363" width="1" height="1" fill="#808080"/><rect x="94" y="387" width="1" height="1" fill="#808080"/><rect x="94" y="389" width="1" height="1" fill="#808080"/><rect x="94" y="391" width="1" height="1" fill="#808080"/><rect x="94" y="393" width="1" height="1" fill="#808080"/><rect x="94" y="395" width="1" height="1" fill="#808080"/><rect x="94" y="397" width="1" height="1" fill="#808080"/><rect x="94" y="399" width="1" height="1" fill="#808080"/><rect x="94" y="401" width="1" height="1" fill="#808080"/><rect x="94" y="403" width="1" height="1" fill="#808080"/><rect x="94" y="405" width="1" height="1" fill="#808080"/><rect x="94" y="407" width="1" height="1" fill="#808080"/><rect x="94" y="409" width="1" height="1" fill="#808080"/><rect x="94" y="411" width="1" height="1" fill="#808080"/><rect x="94" y="413" width="1" height="1" fill="#808080"/><rect x="94" y="415" width="1" height="1" fill="#808080"/><rect x="94" y="417" width="1" height="1" fill="#808080"/><rect x="94" y="419" width="1" height="1" fill="#808080"/><rect x="94" y="421" width="1" height="1" fill="#808080"/><rect x="94" y="423" width="1" height="1" fill="#808080"/><rect x="94" y="425" width="1" height="1" fill="#808080"/><rect x="94" y="427" width="1" height="1" fill="#808080"/><rect x="94" y="429" width="1" height="1" fill="#808080"/><rect x="94" y="431" width="1" height="1" fill="#808080"/><rect x="94" y="433" width="1" height="1" fill="#808080"/><rect x="94" y="435" width="1" height="1" fill="#808080"/><rect x="94" y="437" width="1" height="1" fill="#808080"/><rect x="94" y="439" width="1" height="1" fill="#808080"/><rect x="94" y="441" width="1" height="1" fill="#808080"/><rect x="94" y="443" width="1" height="1" fill="#808080"/><rect x="94" y="445" width="1" height="1" fill="#808080"/><rect x="94" y="447" width="1" height="1" fill="#808080"/><rect x="94" y="449" width="1" height="1" fill="#808080"/><rect x="94" y="451" width="1" height="1" fill="#808080"/><rect x="94" y="453" width="1" height="1" fill="#808080"/><rect x="94" y="455" width="1" height="1" fill="#808080"/><rect x="94" y="457" width="1" height="1" fill="#808080"/><rect x="94" y="459" width="1" height="1" fill="#808080"/><rect x="94" y="461" width="1" height="1" fill="#808080"/><rect x="94" y="463" width="1" height="1" fill="#808080"/><rect x="94" y="465" width="1" height="1" fill="#808080"/><rect x="94" y="467" width="1" height="1" fill="#808080"/><rect x="94" y="469" width="1" height="1" fill="#808080"/><rect x="94" y="471" width="1" height="1" fill="#808080"/><rect x="94" y="473" width="1" height="1" fill="#808080"/><rect x="94" y="475" width="1" height="1" fill="#808080"/><rect x="94" y="477" width="1" height="1" fill="#808080"/><rect x="94" y="479" width="1" height="1" fill="#808080"/><rect x="94" y="481" width="1" height="1" fill="#808080"/><rect x="94" y="483" width="1" height="1" fill="#808080"/><rect x="94" y="485" width="1" height="1" fill="#808080"/><rect x="94" y="487" width="1" height="1" fill="#808080"/><rect x="94" y="489" width="1" height="1" fill="#808080"/><rect x="94" y="491" width="1" height="1" fill="#808080"/><rect x="94" y="493" width="1" height="1" fill="#808080"/><rect x="94" y="495" width="1" height="1" fill="#808080"/><rect x="94" y="497" width="1" height="1" fill="#808080"/><rect x="94" y="499" width="1" height="1" fill="#808080"/><rect x="94" y="501" width="1" height="1" fill="#808080"/><rect x="94" y="503" width="1" height="1" fill="#808080"/><rect x="94" y="505" width="1" height="1" fill="#808080"/><rect x="94" y="507" width="1" height="1" fill="#808080"/><rect x="94" y="509" width="1" height="1" fill="#808080"/><rect x="94" y="511" width="1" height="1" fill="#808080"/><rect x="94" y="513" width="1" height="1" fill="#808080"/><rect x="94" y="515" width="1" height="1" fill="#808080"/><rect x="94" y="517" width="1" height="1" fill="#808080"/><rect x="94" y="519" width="1" height="1" fill="#808080"/><rect x="94" y="521" width="1" height="1" fill="#808080"/><rect x="94" y="523" width="1" height="1" fill="#808080"/><rect x="94" y="525" width="1" height="1" fill="#808080"/><rect x="94" y="527" width="1" height="1" fill="#808080"/><rect x="94" y="529" width="1" height="1" fill="#808080"/><rect x="94" y="531" width="1" height="1" fill="#808080"/><rect x="94" y="533" width="1" height="1" fill="#808080"/><rect x="94" y="535" width="1" height="1" fill="#808080"/><rect x="94" y="537" width="1" height="1" fill="#808080"/><rect x="94" y="539" width="1" height="1" fill="#808080"/><rect x="94" y="541" width="1" height="1" fill="#808080"/><rect x="94" y="543" width="1" height="1" fill="#808080"/><rect x="94" y="545" width="1" height="1" fill="#808080"/><rect x="94" y="547" width="1" height="1" fill="#808080"/><rect x="94" y="549" width="1" height="1" fill="#808080"/><rect x="94" y="551" width="1" height="1" fill="#808080"/><rect x="94" y="553" width="1" height="1" fill="#808080"/><rect x="94" y="555" width="1" height="1" fill="#808080"/><rect x="94" y="557" width="1" height="1" fill="#808080"/><rect x="94" y="559" width="1" height="1" fill="#808080"/><rect x="94" y="561" width="1" height="1" fill="#808080"/><rect x="94" y="563" width="1" height="1" fill="#808080"/><rect x="94" y="565" width="1" height="1" fill="#808080"/><rect x="94" y="567" width="1" height="1" fill="#808080"/><rect x="94" y="569" width="1" height="1" fill="#808080"/><rect x="94" y="571" width="1" height="1" fill="#808080"/><rect x="94" y="573" width="1" height="1" fill="#808080"/><rect x="94" y="575" width="1" height="1" fill="#808080"/><rect x="94" y="577" width="1" height="1" fill="#808080"/><rect x="94" y="579" width="1" height="1" fill="#808080"/><rect x="94" y="581" width="1" height="1" fill="#808080"/><rect x="94" y="583" width="1" height="1" fill="#808080"/><rect x="94" y="585" width="1" height="1" fill="#808080"/><rect x="94" y="587" width="1" height="1" fill="#808080"/><rect x="94" y="589" width="1" height="1" fill="#808080"/><rect x="94" y="591" width="1" height="1" fill="#808080"/><rect x="94" y="593" width="1" height="1" fill="#808080"/><rect x="94" y="595" width="1" height="1" fill="#808080"/><rect x="94" y="597" width="1" height="1" fill="#808080"/><rect x="94" y="599" width="1" height="1" fill="#808080"/><rect x="94" y="601" width="1" height="1" fill="#808080"/><rect x="94" y="603" width="1" height="1" fill="#808080"/><rect x="80" y="379" width="1" height="1" fill="#808080"/><rect x="82" y="379" width="1" height="1" fill="#808080"/><rect x="84" y="379" width="1" height="1" fill="#808080"/><rect x="94" y="395" width="1" height="1" fill="#808080"/><rect x="94" y="397" width="1" height="1" fill="#808080"/><rect x="94" y="399" width="1" height="1" fill="#808080"/><rect x="94" y="401" width="1" height="1" fill="#808080"/><rect x="94" y="403" width="1" height="1" fill="#808080"/><rect x="94" y="405" width="1" height="1" fill="#808080"/><rect x="94" y="407" width="1" height="1" fill="#808080"/><rect x="94" y="409" width="1" height="1" fill="#808080"/><rect x="94" y="411" width="1" height="1" fill="#808080"/><rect x="94" y="413" width="1" height="1" fill="#808080"/><rect x="94" y="415" width="1" height="1" fill="#808080"/><rect x="94" y="417" width="1" height="1" fill="#808080"/><rect x="94" y="419" width="1" height="1" fill="#808080"/><rect x="94" y="421" width="1" height="1" fill="#808080"/><rect x="94" y="423" width="1" height="1" fill="#808080"/><rect x="94" y="425" width="1" height="1" fill="#808080"/><rect x="94" y="427" width="1" height="1" fill="#808080"/><rect x="94" y="429" width="1" height="1" fill="#808080"/><rect x="94" y="431" width="1" height="1" fill="#808080"/><rect x="94" y="433" width="1" height="1" fill="#808080"/><rect x="94" y="435" width="1" height="1" fill="#808080"/><rect x="94" y="437" width="1" height="1" fill="#808080"/><rect x="94" y="439" width="1" height="1" fill="#808080"/><rect x="94" y="441" width="1" height="1" fill="#808080"/><rect x="94" y="443" width="1" height="1" fill="#808080"/><rect x="94" y="445" width="1" height="1" fill="#808080"/><rect x="94" y="447" width="1" height="1" fill="#808080"/><rect x="94" y="449" width="1" height="1" fill="#808080"/><rect x="94" y="451" width="1" height="1" fill="#808080"/><rect x="94" y="453" width="1" height="1" fill="#808080"/><rect x="94" y="455" width="1" height="1" fill="#808080"/><rect x="94" y="457" width="1" height="1" fill="#808080"/><rect x="94" y="459" width="1" height="1" fill="#808080"/><rect x="94" y="461" width="1" height="1" fill="#808080"/><rect x="94" y="463" width="1" height="1" fill="#808080"/><rect x="94" y="465" width="1" height="1" fill="#808080"/><rect x="94" y="467" width="1" height="1" fill="#808080"/><rect x="94" y="469" width="1" height="1" fill="#808080"/><rect x="94" y="471" width="1" height="1" fill="#808080"/><rect x="94" y="473" width="1" height="1" fill="#808080"/><rect x="94" y="475" width="1" height="1" fill="#808080"/><rect x="94" y="477" width="1" height="1" fill="#808080"/><rect x="94" y="479" width="1" height="1" fill="#808080"/><rect x="94" y="481" width="1" height="1" fill="#808080"/><rect x="94" y="483" width="1" height="1" fill="#808080"/><rect x="94" y="485" width="1" height="1" fill="#808080"/><rect x="94" y="487" width="1" height="1" fill="#808080"/><rect x="94" y="489" width="1" height="1" fill="#808080"/><rect x="94" y="491" width="1" height="1" fill="#808080"/><rect x="94" y="493" width="1" height="1" fill="#808080"/><rect x="94" y="495" width="1" height="1" fill="#808080"/><rect x="94" y="497" width="1" height="1" fill="#808080"/><rect x="94" y="499" width="1" height="1" fill="#808080"/><rect x="94" y="501" width="1" height="1" fill="#808080"/><rect x="94" y="503" width="1" height="1" fill="#808080"/><rect x="94" y="505" width="1" height="1" fill="#808080"/><rect x="94" y="507" width="1" height="1" fill="#808080"/><rect x="94" y="509" width="1" height="1" fill="#808080"/><rect x="94" y="511" width="1" height="1" fill="#808080"/><rect x="94" y="513" width="1" height="1" fill="#808080"/><rect x="94" y="515" width="1" height="1" fill="#808080"/><rect x="94" y="517" width="1" height="1" fill="#808080"/><rect x="94" y="519" width="1" height="1" fill="#808080"/><rect x="94" y="521" width="1" height="1" fill="#808080"/><rect x="94" y="523" width="1" height="1" fill="#808080"/><rect x="94" y="525" width="1" height="1" fill="#808080"/><rect x="94" y="527" width="1" height="1" fill="#808080"/><rect x="94" y="529" width="1" height="1" fill="#808080"/><rect x="94" y="531" width="1" height="1" fill="#808080"/><rect x="94" y="533" width="1" height="1" fill="#808080"/><rect x="94" y="535" width="1" height="1" fill="#808080"/><rect x="94" y="537" width="1" height="1" fill="#808080"/><rect x="94" y="539" width="1" height="1" fill="#808080"/><rect x="94" y="541" width="1" height="1" fill="#808080"/><rect x="94" y="543" width="1" height="1" fill="#808080"/><rect x="94" y="545" width="1" height="1" fill="#808080"/><rect x="94" y="547" width="1" height="1" fill="#808080"/><rect x="94" y="549" width="1" height="1" fill="#808080"/><rect x="94" y="551" width="1" height="1" fill="#808080"/><rect x="94" y="553" width="1" height="1" fill="#808080"/><rect x="94" y="555" width="1" height="1" fill="#808080"/><rect x="94" y="557" width="1" height="1" fill="#808080"/><rect x="94" y="559" width="1" height="1" fill="#808080"/><rect x="94" y="561" width="1" height="1" fill="#808080"/><rect x="94" y="563" width="1" height="1" fill="#808080"/><rect x="94" y="565" width="1" height="1" fill="#808080"/><rect x="94" y="567" width="1" height="1" fill="#808080"/><rect x="94" y="569" width="1" height="1" fill="#808080"/><rect x="94" y="571" width="1" height="1" fill="#808080"/><rect x="94" y="573" width="1" height="1" fill="#808080"/><rect x="94" y="575" width="1" height="1" fill="#808080"/><rect x="94" y="577" width="1" height="1" fill="#808080"/><rect x="94" y="579" width="1" height="1" fill="#808080"/><rect x="94" y="581" width="1" height="1" fill="#808080"/><rect x="94" y="583" width="1" height="1" fill="#808080"/><rect x="94" y="585" width="1" height="1" fill="#808080"/><rect x="94" y="587" width="1" height="1" fill="#808080"/><rect x="94" y="589" width="1" height="1" fill="#808080"/><rect x="94" y="591" width="1" height="1" fill="#808080"/><rect x="94" y="593" width="1" height="1" fill="#808080"/><rect x="94" y="595" width="1" height="1" fill="#808080"/><rect x="94" y="597" width="1" height="1" fill="#808080"/><rect x="94" y="599" width="1" height="1" fill="#808080"/><rect x="94" y="601" width="1" height="1" fill="#808080"/><rect x="94" y="603" width="1" height="1" fill="#808080"/><rect x="94" y="395" width="1" height="1" fill="#808080"/><rect x="96" y="395" width="1" height="1" fill="#808080"/><rect x="98" y="395" width="1" height="1" fill="#808080"/><rect x="100" y="395" width="1" height="1" fill="#808080"/><rect x="102" y="395" width="1" height="1" fill="#808080"/><rect x="104" y="395" width="1" height="1" fill="#808080"/><rect x="94" y="411" width="1" height="1" fill="#808080"/><rect x="94" y="413" width="1" height="1" fill="#808080"/><rect x="94" y="415" width="1" height="1" fill="#808080"/><rect x="94" y="417" width="1" height="1" fill="#808080"/><rect x="94" y="419" width="1" height="1" fill="#808080"/><rect x="94" y="421" width="1" height="1" fill="#808080"/><rect x="94" y="423" width="1" height="1" fill="#808080"/><rect x="94" y="425" width="1" height="1" fill="#808080"/><rect x="94" y="427" width="1" height="1" fill="#808080"/><rect x="94" y="429" width="1" height="1" fill="#808080"/><rect x="94" y="431" width="1" height="1" fill="#808080"/><rect x="94" y="433" width="1" height="1" fill="#808080"/><rect x="94" y="435" width="1" height="1" fill="#808080"/><rect x="94" y="437" width="1" height="1" fill="#808080"/><rect x="94" y="439" width="1" height="1" fill="#808080"/><rect x="94" y="441" width="1" height="1" fill="#808080"/><rect x="94" y="443" width="1" height="1" fill="#808080"/><rect x="94" y="445" width="1" height="1" fill="#808080"/><rect x="94" y="447" width="1" height="1" fill="#808080"/><rect x="94" y="449" width="1" height="1" fill="#808080"/><rect x="94" y="451" width="1" height="1" fill="#808080"/><rect x="94" y="453" width="1" height="1" fill="#808080"/><rect x="94" y="455" width="1" height="1" fill="#808080"/><rect x="94" y="457" width="1" height="1" fill="#808080"/><rect x="94" y="459" width="1" height="1" fill="#808080"/><rect x="94" y="461" width="1" height="1" fill="#808080"/><rect x="94" y="463" width="1" height="1" fill="#808080"/><rect x="94" y="465" width="1" height="1" fill="#808080"/><rect x="94" y="467" width="1" height="1" fill="#808080"/><rect x="94" y="469" width="1" height="1" fill="#808080"/><rect x="94" y="471" width="1" height="1" fill="#808080"/><rect x="94" y="473" width="1" height="1" fill="#808080"/><rect x="94" y="475" width="1" height="1" fill="#808080"/><rect x="94" y="477" width="1" height="1" fill="#808080"/><rect x="94" y="479" width="1" height="1" fill="#808080"/><rect x="94" y="481" width="1" height="1" fill="#808080"/><rect x="94" y="483" width="1" height="1" fill="#808080"/><rect x="94" y="485" width="1" height="1" fill="#808080"/><rect x="94" y="487" width="1" height="1" fill="#808080"/><rect x="94" y="489" width="1" height="1" fill="#808080"/><rect x="94" y="491" width="1" height="1" fill="#808080"/><rect x="94" y="493" width="1" height="1" fill="#808080"/><rect x="94" y="495" width="1" height="1" fill="#808080"/><rect x="94" y="497" width="1" height="1" fill="#808080"/><rect x="94" y="499" width="1" height="1" fill="#808080"/><rect x="94" y="501" width="1" height="1" fill="#808080"/><rect x="94" y="503" width="1" height="1" fill="#808080"/><rect x="94" y="505" width="1" height="1" fill="#808080"/><rect x="94" y="507" width="1" height="1" fill="#808080"/><rect x="94" y="509" width="1" height="1" fill="#808080"/><rect x="94" y="511" width="1" height="1" fill="#808080"/><rect x="94" y="513" width="1" height="1" fill="#808080"/><rect x="94" y="515" width="1" height="1" fill="#808080"/><rect x="94" y="517" width="1" height="1" fill="#808080"/><rect x="94" y="519" width="1" height="1" fill="#808080"/><rect x="94" y="521" width="1" height="1" fill="#808080"/><rect x="94" y="523" width="1" height="1" fill="#808080"/><rect x="94" y="525" width="1" height="1" fill="#808080"/><rect x="94" y="527" width="1" height="1" fill="#808080"/><rect x="94" y="529" width="1" height="1" fill="#808080"/><rect x="94" y="531" width="1" height="1" fill="#808080"/><rect x="94" y="533" width="1" height="1" fill="#808080"/><rect x="94" y="535" width="1" height="1" fill="#808080"/><rect x="94" y="537" width="1" height="1" fill="#808080"/><rect x="94" y="539" width="1" height="1" fill="#808080"/><rect x="94" y="541" width="1" height="1" fill="#808080"/><rect x="94" y="543" width="1" height="1" fill="#808080"/><rect x="94" y="545" width="1" height="1" fill="#808080"/><rect x="94" y="547" width="1" height="1" fill="#808080"/><rect x="94" y="549" width="1" height="1" fill="#808080"/><rect x="94" y="551" width="1" height="1" fill="#808080"/><rect x="94" y="553" width="1" height="1" fill="#808080"/><rect x="94" y="555" width="1" height="1" fill="#808080"/><rect x="94" y="557" width="1" height="1" fill="#808080"/><rect x="94" y="559" width="1" height="1" fill="#808080"/><rect x="94" y="561" width="1" height="1" fill="#808080"/><rect x="94" y="563" width="1" height="1" fill="#808080"/><rect x="94" y="565" width="1" height="1" fill="#808080"/><rect x="94" y="567" width="1" height="1" fill="#808080"/><rect x="94" y="569" width="1" height="1" fill="#808080"/><rect x="94" y="571" width="1" height="1" fill="#808080"/><rect x="94" y="573" width="1" height="1" fill="#808080"/><rect x="94" y="575" width="1" height="1" fill="#808080"/><rect x="94" y="577" width="1" height="1" fill="#808080"/><rect x="94" y="579" width="1" height="1" fill="#808080"/><rect x="94" y="581" width="1" height="1" fill="#808080"/><rect x="94" y="583" width="1" height="1" fill="#808080"/><rect x="94" y="585" width="1" height="1" fill="#808080"/><rect x="94" y="587" width="1" height="1" fill="#808080"/><rect x="94" y="589" width="1" height="1" fill="#808080"/><rect x="94" y="591" width="1" height="1" fill="#808080"/><rect x="94" y="593" width="1" height="1" fill="#808080"/><rect x="94" y="595" width="1" height="1" fill="#808080"/><rect x="94" y="597" width="1" height="1" fill="#808080"/><rect x="94" y="599" width="1" height="1" fill="#808080"/><rect x="94" y="601" width="1" height="1" fill="#808080"/><rect x="94" y="603" width="1" height="1" fill="#808080"/><rect x="94" y="411" width="1" height="1" fill="#808080"/><rect x="96" y="411" width="1" height="1" fill="#808080"/><rect x="98" y="411" width="1" height="1" fill="#808080"/><rect x="100" y="411" width="1" height="1" fill="#808080"/><rect x="102" y="411" width="1" height="1" fill="#808080"/><rect x="104" y="411" width="1" height="1" fill="#808080"/><rect x="94" y="427" width="1" height="1" fill="#808080"/><rect x="94" y="429" width="1" height="1" fill="#808080"/><rect x="94" y="431" width="1" height="1" fill="#808080"/><rect x="94" y="433" width="1" height="1" fill="#808080"/><rect x="94" y="435" width="1" height="1" fill="#808080"/><rect x="94" y="437" width="1" height="1" fill="#808080"/><rect x="94" y="439" width="1" height="1" fill="#808080"/><rect x="94" y="441" width="1" height="1" fill="#808080"/><rect x="94" y="443" width="1" height="1" fill="#808080"/><rect x="94" y="445" width="1" height="1" fill="#808080"/><rect x="94" y="447" width="1" height="1" fill="#808080"/><rect x="94" y="449" width="1" height="1" fill="#808080"/><rect x="94" y="451" width="1" height="1" fill="#808080"/><rect x="94" y="453" width="1" height="1" fill="#808080"/><rect x="94" y="455" width="1" height="1" fill="#808080"/><rect x="94" y="457" width="1" height="1" fill="#808080"/><rect x="94" y="459" width="1" height="1" fill="#808080"/><rect x="94" y="461" width="1" height="1" fill="#808080"/><rect x="94" y="463" width="1" height="1" fill="#808080"/><rect x="94" y="465" width="1" height="1" fill="#808080"/><rect x="94" y="467" width="1" height="1" fill="#808080"/><rect x="94" y="469" width="1" height="1" fill="#808080"/><rect x="94" y="471" width="1" height="1" fill="#808080"/><rect x="94" y="473" width="1" height="1" fill="#808080"/><rect x="94" y="475" width="1" height="1" fill="#808080"/><rect x="94" y="477" width="1" height="1" fill="#808080"/><rect x="94" y="479" width="1" height="1" fill="#808080"/><rect x="94" y="481" width="1" height="1" fill="#808080"/><rect x="94" y="483" width="1" height="1" fill="#808080"/><rect x="94" y="485" width="1" height="1" fill="#808080"/><rect x="94" y="487" width="1" height="1" fill="#808080"/><rect x="94" y="489" width="1" height="1" fill="#808080"/><rect x="94" y="491" width="1" height="1" fill="#808080"/><rect x="94" y="493" width="1" height="1" fill="#808080"/><rect x="94" y="495" width="1" height="1" fill="#808080"/><rect x="94" y="497" width="1" height="1" fill="#808080"/><rect x="94" y="499" width="1" height="1" fill="#808080"/><rect x="94" y="501" width="1" height="1" fill="#808080"/><rect x="94" y="503" width="1" height="1" fill="#808080"/><rect x="94" y="505" width="1" height="1" fill="#808080"/><rect x="94" y="507" width="1" height="1" fill="#808080"/><rect x="94" y="509" width="1" height="1" fill="#808080"/><rect x="94" y="511" width="1" height="1" fill="#808080"/><rect x="94" y="513" width="1" height="1" fill="#808080"/><rect x="94" y="515" width="1" height="1" fill="#808080"/><rect x="94" y="517" width="1" height="1" fill="#808080"/><rect x="94" y="519" width="1" height="1" fill="#808080"/><rect x="94" y="521" width="1" height="1" fill="#808080"/><rect x="94" y="523" width="1" height="1" fill="#808080"/><rect x="94" y="525" width="1" height="1" fill="#808080"/><rect x="94" y="527" width="1" height="1" fill="#808080"/><rect x="94" y="529" width="1" height="1" fill="#808080"/><rect x="94" y="531" width="1" height="1" fill="#808080"/><rect x="94" y="533" width="1" height="1" fill="#808080"/><rect x="94" y="535" width="1" height="1" fill="#808080"/><rect x="94" y="537" width="1" height="1" fill="#808080"/><rect x="94" y="539" width="1" height="1" fill="#808080"/><rect x="94" y="541" width="1" height="1" fill="#808080"/><rect x="94" y="543" width="1" height="1" fill="#808080"/><rect x="94" y="545" width="1" height="1" fill="#808080"/><rect x="94" y="547" width="1" height="1" fill="#808080"/><rect x="94" y="549" width="1" height="1" fill="#808080"/><rect x="94" y="551" width="1" height="1" fill="#808080"/><rect x="94" y="553" width="1" height="1" fill="#808080"/><rect x="94" y="555" width="1" height="1" fill="#808080"/><rect x="94" y="557" width="1" height="1" fill="#808080"/><rect x="94" y="559" width="1" height="1" fill="#808080"/><rect x="94" y="561" width="1" height="1" fill="#808080"/><rect x="94" y="563" width="1" height="1" fill="#808080"/><rect x="94" y="565" width="1" height="1" fill="#808080"/><rect x="94" y="567" width="1" height="1" fill="#808080"/><rect x="94" y="569" width="1" height="1" fill="#808080"/><rect x="94" y="571" width="1" height="1" fill="#808080"/><rect x="94" y="573" width="1" height="1" fill="#808080"/><rect x="94" y="575" width="1" height="1" fill="#808080"/><rect x="94" y="577" width="1" height="1" fill="#808080"/><rect x="94" y="579" width="1" height="1" fill="#808080"/><rect x="94" y="581" width="1" height="1" fill="#808080"/><rect x="94" y="583" width="1" height="1" fill="#808080"/><rect x="94" y="585" width="1" height="1" fill="#808080"/><rect x="94" y="587" width="1" height="1" fill="#808080"/><rect x="94" y="589" width="1" height="1" fill="#808080"/><rect x="94" y="591" width="1" height="1" fill="#808080"/><rect x="94" y="593" width="1" height="1" fill="#808080"/><rect x="94" y="595" width="1" height="1" fill="#808080"/><rect x="94" y="597" width="1" height="1" fill="#808080"/><rect x="94" y="599" width="1" height="1" fill="#808080"/><rect x="94" y="601" width="1" height="1" fill="#808080"/><rect x="94" y="603" width="1" height="1" fill="#808080"/><rect x="94" y="427" width="1" height="1" fill="#808080"/><rect x="96" y="427" width="1" height="1" fill="#808080"/><rect x="98" y="427" width="1" height="1" fill="#808080"/><rect x="100" y="427" width="1" height="1" fill="#808080"/><rect x="102" y="427" width="1" height="1" fill="#808080"/><rect x="104" y="427" width="1" height="1" fill="#808080"/><rect x="94" y="443" width="1" height="1" fill="#808080"/><rect x="94" y="445" width="1" height="1" fill="#808080"/><rect x="94" y="447" width="1" height="1" fill="#808080"/><rect x="94" y="449" width="1" height="1" fill="#808080"/><rect x="94" y="451" width="1" height="1" fill="#808080"/><rect x="94" y="453" width="1" height="1" fill="#808080"/><rect x="94" y="455" width="1" height="1" fill="#808080"/><rect x="94" y="457" width="1" height="1" fill="#808080"/><rect x="94" y="459" width="1" height="1" fill="#808080"/><rect x="94" y="461" width="1" height="1" fill="#808080"/><rect x="94" y="463" width="1" height="1" fill="#808080"/><rect x="94" y="465" width="1" height="1" fill="#808080"/><rect x="94" y="467" width="1" height="1" fill="#808080"/><rect x="94" y="469" width="1" height="1" fill="#808080"/><rect x="94" y="471" width="1" height="1" fill="#808080"/><rect x="94" y="473" width="1" height="1" fill="#808080"/><rect x="94" y="475" width="1" height="1" fill="#808080"/><rect x="94" y="477" width="1" height="1" fill="#808080"/><rect x="94" y="479" width="1" height="1" fill="#808080"/><rect x="94" y="481" width="1" height="1" fill="#808080"/><rect x="94" y="483" width="1" height="1" fill="#808080"/><rect x="94" y="485" width="1" height="1" fill="#808080"/><rect x="94" y="487" width="1" height="1" fill="#808080"/><rect x="94" y="489" width="1" height="1" fill="#808080"/><rect x="94" y="491" width="1" height="1" fill="#808080"/><rect x="94" y="493" width="1" height="1" fill="#808080"/><rect x="94" y="495" width="1" height="1" fill="#808080"/><rect x="94" y="497" width="1" height="1" fill="#808080"/><rect x="94" y="499" width="1" height="1" fill="#808080"/><rect x="94" y="501" width="1" height="1" fill="#808080"/><rect x="94" y="503" width="1" height="1" fill="#808080"/><rect x="94" y="505" width="1" height="1" fill="#808080"/><rect x="94" y="507" width="1" height="1" fill="#808080"/><rect x="94" y="509" width="1" height="1" fill="#808080"/><rect x="94" y="511" width="1" height="1" fill="#808080"/><rect x="94" y="513" width="1" height="1" fill="#808080"/><rect x="94" y="515" width="1" height="1" fill="#808080"/><rect x="94" y="517" width="1" height="1" fill="#808080"/><rect x="94" y="519" width="1" height="1" fill="#808080"/><rect x="94" y="521" width="1" height="1" fill="#808080"/><rect x="94" y="523" width="1" height="1" fill="#808080"/><rect x="94" y="525" width="1" height="1" fill="#808080"/><rect x="94" y="527" width="1" height="1" fill="#808080"/><rect x="94" y="529" width="1" height="1" fill="#808080"/><rect x="94" y="531" width="1" height="1" fill="#808080"/><rect x="94" y="533" width="1" height="1" fill="#808080"/><rect x="94" y="535" width="1" height="1" fill="#808080"/><rect x="94" y="537" width="1" height="1" fill="#808080"/><rect x="94" y="539" width="1" height="1" fill="#808080"/><rect x="94" y="541" width="1" height="1" fill="#808080"/><rect x="94" y="543" width="1" height="1" fill="#808080"/><rect x="94" y="545" width="1" height="1" fill="#808080"/><rect x="94" y="547" width="1" height="1" fill="#808080"/><rect x="94" y="549" width="1" height="1" fill="#808080"/><rect x="94" y="551" width="1" height="1" fill="#808080"/><rect x="94" y="553" width="1" height="1" fill="#808080"/><rect x="94" y="555" width="1" height="1" fill="#808080"/><rect x="94" y="557" width="1" height="1" fill="#808080"/><rect x="94" y="559" width="1" height="1" fill="#808080"/><rect x="94" y="561" width="1" height="1" fill="#808080"/><rect x="94" y="563" width="1" height="1" fill="#808080"/><rect x="94" y="565" width="1" height="1" fill="#808080"/><rect x="94" y="567" width="1" height="1" fill="#808080"/><rect x="94" y="569" width="1" height="1" fill="#808080"/><rect x="94" y="571" width="1" height="1" fill="#808080"/><rect x="94" y="573" width="1" height="1" fill="#808080"/><rect x="94" y="575" width="1" height="1" fill="#808080"/><rect x="94" y="577" width="1" height="1" fill="#808080"/><rect x="94" y="579" width="1" height="1" fill="#808080"/><rect x="94" y="581" width="1" height="1" fill="#808080"/><rect x="94" y="583" width="1" height="1" fill="#808080"/><rect x="94" y="585" width="1" height="1" fill="#808080"/><rect x="94" y="587" width="1" height="1" fill="#808080"/><rect x="94" y="589" width="1" height="1" fill="#808080"/><rect x="94" y="591" width="1" height="1" fill="#808080"/><rect x="94" y="593" width="1" height="1" fill="#808080"/><rect x="94" y="595" width="1" height="1" fill="#808080"/><rect x="94" y="597" width="1" height="1" fill="#808080"/><rect x="94" y="599" width="1" height="1" fill="#808080"/><rect x="94" y="601" width="1" height="1" fill="#808080"/><rect x="94" y="603" width="1" height="1" fill="#808080"/><rect x="94" y="443" width="1" height="1" fill="#808080"/><rect x="96" y="443" width="1" height="1" fill="#808080"/><rect x="98" y="443" width="1" height="1" fill="#808080"/><rect x="100" y="443" width="1" height="1" fill="#808080"/><rect x="102" y="443" width="1" height="1" fill="#808080"/><rect x="104" y="443" width="1" height="1" fill="#808080"/><rect x="94" y="459" width="1" height="1" fill="#808080"/><rect x="94" y="461" width="1" height="1" fill="#808080"/><rect x="94" y="463" width="1" height="1" fill="#808080"/><rect x="94" y="465" width="1" height="1" fill="#808080"/><rect x="94" y="467" width="1" height="1" fill="#808080"/><rect x="94" y="469" width="1" height="1" fill="#808080"/><rect x="94" y="471" width="1" height="1" fill="#808080"/><rect x="94" y="473" width="1" height="1" fill="#808080"/><rect x="94" y="475" width="1" height="1" fill="#808080"/><rect x="94" y="477" width="1" height="1" fill="#808080"/><rect x="94" y="479" width="1" height="1" fill="#808080"/><rect x="94" y="481" width="1" height="1" fill="#808080"/><rect x="94" y="483" width="1" height="1" fill="#808080"/><rect x="94" y="485" width="1" height="1" fill="#808080"/><rect x="94" y="487" width="1" height="1" fill="#808080"/><rect x="94" y="489" width="1" height="1" fill="#808080"/><rect x="94" y="491" width="1" height="1" fill="#808080"/><rect x="94" y="493" width="1" height="1" fill="#808080"/><rect x="94" y="495" width="1" height="1" fill="#808080"/><rect x="94" y="497" width="1" height="1" fill="#808080"/><rect x="94" y="499" width="1" height="1" fill="#808080"/><rect x="94" y="501" width="1" height="1" fill="#808080"/><rect x="94" y="503" width="1" height="1" fill="#808080"/><rect x="94" y="505" width="1" height="1" fill="#808080"/><rect x="94" y="507" width="1" height="1" fill="#808080"/><rect x="94" y="509" width="1" height="1" fill="#808080"/><rect x="94" y="511" width="1" height="1" fill="#808080"/><rect x="94" y="513" width="1" height="1" fill="#808080"/><rect x="94" y="515" width="1" height="1" fill="#808080"/><rect x="94" y="517" width="1" height="1" fill="#808080"/><rect x="94" y="519" width="1" height="1" fill="#808080"/><rect x="94" y="521" width="1" height="1" fill="#808080"/><rect x="94" y="523" width="1" height="1" fill="#808080"/><rect x="94" y="525" width="1" height="1" fill="#808080"/><rect x="94" y="527" width="1" height="1" fill="#808080"/><rect x="94" y="529" width="1" height="1" fill="#808080"/><rect x="94" y="531" width="1" height="1" fill="#808080"/><rect x="94" y="533" width="1" height="1" fill="#808080"/><rect x="94" y="535" width="1" height="1" fill="#808080"/><rect x="94" y="537" width="1" height="1" fill="#808080"/><rect x="94" y="539" width="1" height="1" fill="#808080"/><rect x="94" y="541" width="1" height="1" fill="#808080"/><rect x="94" y="543" width="1" height="1" fill="#808080"/><rect x="94" y="545" width="1" height="1" fill="#808080"/><rect x="94" y="547" width="1" height="1" fill="#808080"/><rect x="94" y="549" width="1" height="1" fill="#808080"/><rect x="94" y="551" width="1" height="1" fill="#808080"/><rect x="94" y="553" width="1" height="1" fill="#808080"/><rect x="94" y="555" width="1" height="1" fill="#808080"/><rect x="94" y="557" width="1" height="1" fill="#808080"/><rect x="94" y="559" width="1" height="1" fill="#808080"/><rect x="94" y="561" width="1" height="1" fill="#808080"/><rect x="94" y="563" width="1" height="1" fill="#808080"/><rect x="94" y="565" width="1" height="1" fill="#808080"/><rect x="94" y="567" width="1" height="1" fill="#808080"/><rect x="94" y="569" width="1" height="1" fill="#808080"/><rect x="94" y="571" width="1" height="1" fill="#808080"/><rect x="94" y="573" width="1" height="1" fill="#808080"/><rect x="94" y="575" width="1" height="1" fill="#808080"/><rect x="94" y="577" width="1" height="1" fill="#808080"/><rect x="94" y="579" width="1" height="1" fill="#808080"/><rect x="94" y="581" width="1" height="1" fill="#808080"/><rect x="94" y="583" width="1" height="1" fill="#808080"/><rect x="94" y="585" width="1" height="1" fill="#808080"/><rect x="94" y="587" width="1" height="1" fill="#808080"/><rect x="94" y="589" width="1" height="1" fill="#808080"/><rect x="94" y="591" width="1" height="1" fill="#808080"/><rect x="94" y="593" width="1" height="1" fill="#808080"/><rect x="94" y="595" width="1" height="1" fill="#808080"/><rect x="94" y="597" width="1" height="1" fill="#808080"/><rect x="94" y="599" width="1" height="1" fill="#808080"/><rect x="94" y="601" width="1" height="1" fill="#808080"/><rect x="94" y="603" width="1" height="1" fill="#808080"/><rect x="94" y="459" width="1" height="1" fill="#808080"/><rect x="96" y="459" width="1" height="1" fill="#808080"/><rect x="98" y="459" width="1" height="1" fill="#808080"/><rect x="100" y="459" width="1" height="1" fill="#808080"/><rect x="102" y="459" width="1" height="1" fill="#808080"/><rect x="104" y="459" width="1" height="1" fill="#808080"/><rect x="94" y="475" width="1" height="1" fill="#808080"/><rect x="94" y="477" width="1" height="1" fill="#808080"/><rect x="94" y="479" width="1" height="1" fill="#808080"/><rect x="94" y="481" width="1" height="1" fill="#808080"/><rect x="94" y="483" width="1" height="1" fill="#808080"/><rect x="94" y="485" width="1" height="1" fill="#808080"/><rect x="94" y="487" width="1" height="1" fill="#808080"/><rect x="94" y="489" width="1" height="1" fill="#808080"/><rect x="94" y="491" width="1" height="1" fill="#808080"/><rect x="94" y="493" width="1" height="1" fill="#808080"/><rect x="94" y="495" width="1" height="1" fill="#808080"/><rect x="94" y="497" width="1" height="1" fill="#808080"/><rect x="94" y="499" width="1" height="1" fill="#808080"/><rect x="94" y="501" width="1" height="1" fill="#808080"/><rect x="94" y="503" width="1" height="1" fill="#808080"/><rect x="94" y="505" width="1" height="1" fill="#808080"/><rect x="94" y="507" width="1" height="1" fill="#808080"/><rect x="94" y="509" width="1" height="1" fill="#808080"/><rect x="94" y="511" width="1" height="1" fill="#808080"/><rect x="94" y="513" width="1" height="1" fill="#808080"/><rect x="94" y="515" width="1" height="1" fill="#808080"/><rect x="94" y="517" width="1" height="1" fill="#808080"/><rect x="94" y="519" width="1" height="1" fill="#808080"/><rect x="94" y="521" width="1" height="1" fill="#808080"/><rect x="94" y="523" width="1" height="1" fill="#808080"/><rect x="94" y="525" width="1" height="1" fill="#808080"/><rect x="94" y="527" width="1" height="1" fill="#808080"/><rect x="94" y="529" width="1" height="1" fill="#808080"/><rect x="94" y="531" width="1" height="1" fill="#808080"/><rect x="94" y="533" width="1" height="1" fill="#808080"/><rect x="94" y="535" width="1" height="1" fill="#808080"/><rect x="94" y="537" width="1" height="1" fill="#808080"/><rect x="94" y="539" width="1" height="1" fill="#808080"/><rect x="94" y="541" width="1" height="1" fill="#808080"/><rect x="94" y="543" width="1" height="1" fill="#808080"/><rect x="94" y="545" width="1" height="1" fill="#808080"/><rect x="94" y="547" width="1" height="1" fill="#808080"/><rect x="94" y="549" width="1" height="1" fill="#808080"/><rect x="94" y="551" width="1" height="1" fill="#808080"/><rect x="94" y="553" width="1" height="1" fill="#808080"/><rect x="94" y="555" width="1" height="1" fill="#808080"/><rect x="94" y="557" width="1" height="1" fill="#808080"/><rect x="94" y="559" width="1" height="1" fill="#808080"/><rect x="94" y="561" width="1" height="1" fill="#808080"/><rect x="94" y="563" width="1" height="1" fill="#808080"/><rect x="94" y="565" width="1" height="1" fill="#808080"/><rect x="94" y="567" width="1" height="1" fill="#808080"/><rect x="94" y="569" width="1" height="1" fill="#808080"/><rect x="94" y="571" width="1" height="1" fill="#808080"/><rect x="94" y="573" width="1" height="1" fill="#808080"/><rect x="94" y="575" width="1" height="1" fill="#808080"/><rect x="94" y="577" width="1" height="1" fill="#808080"/><rect x="94" y="579" width="1" height="1" fill="#808080"/><rect x="94" y="581" width="1" height="1" fill="#808080"/><rect x="94" y="583" width="1" height="1" fill="#808080"/><rect x="94" y="585" width="1" height="1" fill="#808080"/><rect x="94" y="587" width="1" height="1" fill="#808080"/><rect x="94" y="589" width="1" height="1" fill="#808080"/><rect x="94" y="591" width="1" height="1" fill="#808080"/><rect x="94" y="593" width="1" height="1" fill="#808080"/><rect x="94" y="595" width="1" height="1" fill="#808080"/><rect x="94" y="597" width="1" height="1" fill="#808080"/><rect x="94" y="599" width="1" height="1" fill="#808080"/><rect x="94" y="601" width="1" height="1" fill="#808080"/><rect x="94" y="603" width="1" height="1" fill="#808080"/><rect x="94" y="475" width="1" height="1" fill="#808080"/><rect x="96" y="475" width="1" height="1" fill="#808080"/><rect x="98" y="475" width="1" height="1" fill="#808080"/><rect x="100" y="475" width="1" height="1" fill="#808080"/><rect x="102" y="475" width="1" height="1" fill="#808080"/><rect x="104" y="475" width="1" height="1" fill="#808080"/><rect x="94" y="491" width="1" height="1" fill="#808080"/><rect x="94" y="493" width="1" height="1" fill="#808080"/><rect x="94" y="495" width="1" height="1" fill="#808080"/><rect x="94" y="497" width="1" height="1" fill="#808080"/><rect x="94" y="499" width="1" height="1" fill="#808080"/><rect x="94" y="501" width="1" height="1" fill="#808080"/><rect x="94" y="503" width="1" height="1" fill="#808080"/><rect x="94" y="505" width="1" height="1" fill="#808080"/><rect x="94" y="507" width="1" height="1" fill="#808080"/><rect x="94" y="509" width="1" height="1" fill="#808080"/><rect x="94" y="511" width="1" height="1" fill="#808080"/><rect x="94" y="513" width="1" height="1" fill="#808080"/><rect x="94" y="515" width="1" height="1" fill="#808080"/><rect x="94" y="517" width="1" height="1" fill="#808080"/><rect x="94" y="519" width="1" height="1" fill="#808080"/><rect x="94" y="521" width="1" height="1" fill="#808080"/><rect x="94" y="523" width="1" height="1" fill="#808080"/><rect x="94" y="525" width="1" height="1" fill="#808080"/><rect x="94" y="527" width="1" height="1" fill="#808080"/><rect x="94" y="529" width="1" height="1" fill="#808080"/><rect x="94" y="531" width="1" height="1" fill="#808080"/><rect x="94" y="533" width="1" height="1" fill="#808080"/><rect x="94" y="535" width="1" height="1" fill="#808080"/><rect x="94" y="537" width="1" height="1" fill="#808080"/><rect x="94" y="539" width="1" height="1" fill="#808080"/><rect x="94" y="541" width="1" height="1" fill="#808080"/><rect x="94" y="543" width="1" height="1" fill="#808080"/><rect x="94" y="545" width="1" height="1" fill="#808080"/><rect x="94" y="547" width="1" height="1" fill="#808080"/><rect x="94" y="549" width="1" height="1" fill="#808080"/><rect x="94" y="551" width="1" height="1" fill="#808080"/><rect x="94" y="553" width="1" height="1" fill="#808080"/><rect x="94" y="555" width="1" height="1" fill="#808080"/><rect x="94" y="557" width="1" height="1" fill="#808080"/><rect x="94" y="559" width="1" height="1" fill="#808080"/><rect x="94" y="561" width="1" height="1" fill="#808080"/><rect x="94" y="563" width="1" height="1" fill="#808080"/><rect x="94" y="565" width="1" height="1" fill="#808080"/><rect x="94" y="567" width="1" height="1" fill="#808080"/><rect x="94" y="569" width="1" height="1" fill="#808080"/><rect x="94" y="571" width="1" height="1" fill="#808080"/><rect x="94" y="573" width="1" height="1" fill="#808080"/><rect x="94" y="575" width="1" height="1" fill="#808080"/><rect x="94" y="577" width="1" height="1" fill="#808080"/><rect x="94" y="579" width="1" height="1" fill="#808080"/><rect x="94" y="581" width="1" height="1" fill="#808080"/><rect x="94" y="583" width="1" height="1" fill="#808080"/><rect x="94" y="585" width="1" height="1" fill="#808080"/><rect x="94" y="587" width="1" height="1" fill="#808080"/><rect x="94" y="589" width="1" height="1" fill="#808080"/><rect x="94" y="591" width="1" height="1" fill="#808080"/><rect x="94" y="593" width="1" height="1" fill="#808080"/><rect x="94" y="595" width="1" height="1" fill="#808080"/><rect x="94" y="597" width="1" height="1" fill="#808080"/><rect x="94" y="599" width="1" height="1" fill="#808080"/><rect x="94" y="601" width="1" height="1" fill="#808080"/><rect x="94" y="603" width="1" height="1" fill="#808080"/><rect x="94" y="491" width="1" height="1" fill="#808080"/><rect x="96" y="491" width="1" height="1" fill="#808080"/><rect x="98" y="491" width="1" height="1" fill="#808080"/><rect x="100" y="491" width="1" height="1" fill="#808080"/><rect x="102" y="491" width="1" height="1" fill="#808080"/><rect x="104" y="491" width="1" height="1" fill="#808080"/><rect x="94" y="507" width="1" height="1" fill="#808080"/><rect x="94" y="509" width="1" height="1" fill="#808080"/><rect x="94" y="511" width="1" height="1" fill="#808080"/><rect x="94" y="513" width="1" height="1" fill="#808080"/><rect x="94" y="515" width="1" height="1" fill="#808080"/><rect x="94" y="517" width="1" height="1" fill="#808080"/><rect x="94" y="519" width="1" height="1" fill="#808080"/><rect x="94" y="521" width="1" height="1" fill="#808080"/><rect x="94" y="523" width="1" height="1" fill="#808080"/><rect x="94" y="525" width="1" height="1" fill="#808080"/><rect x="94" y="527" width="1" height="1" fill="#808080"/><rect x="94" y="529" width="1" height="1" fill="#808080"/><rect x="94" y="531" width="1" height="1" fill="#808080"/><rect x="94" y="533" width="1" height="1" fill="#808080"/><rect x="94" y="535" width="1" height="1" fill="#808080"/><rect x="94" y="537" width="1" height="1" fill="#808080"/><rect x="94" y="539" width="1" height="1" fill="#808080"/><rect x="94" y="541" width="1" height="1" fill="#808080"/><rect x="94" y="543" width="1" height="1" fill="#808080"/><rect x="94" y="545" width="1" height="1" fill="#808080"/><rect x="94" y="547" width="1" height="1" fill="#808080"/><rect x="94" y="549" width="1" height="1" fill="#808080"/><rect x="94" y="551" width="1" height="1" fill="#808080"/><rect x="94" y="553" width="1" height="1" fill="#808080"/><rect x="94" y="555" width="1" height="1" fill="#808080"/><rect x="94" y="557" width="1" height="1" fill="#808080"/><rect x="94" y="559" width="1" height="1" fill="#808080"/><rect x="94" y="561" width="1" height="1" fill="#808080"/><rect x="94" y="563" width="1" height="1" fill="#808080"/><rect x="94" y="565" width="1" height="1" fill="#808080"/><rect x="94" y="567" width="1" height="1" fill="#808080"/><rect x="94" y="569" width="1" height="1" fill="#808080"/><rect x="94" y="571" width="1" height="1" fill="#808080"/><rect x="94" y="573" width="1" height="1" fill="#808080"/><rect x="94" y="575" width="1" height="1" fill="#808080"/><rect x="94" y="577" width="1" height="1" fill="#808080"/><rect x="94" y="579" width="1" height="1" fill="#808080"/><rect x="94" y="581" width="1" height="1" fill="#808080"/><rect x="94" y="583" width="1" height="1" fill="#808080"/><rect x="94" y="585" width="1" height="1" fill="#808080"/><rect x="94" y="587" width="1" height="1" fill="#808080"/><rect x="94" y="589" width="1" height="1" fill="#808080"/><rect x="94" y="591" width="1" height="1" fill="#808080"/><rect x="94" y="593" width="1" height="1" fill="#808080"/><rect x="94" y="595" width="1" height="1" fill="#808080"/><rect x="94" y="597" width="1" height="1" fill="#808080"/><rect x="94" y="599" width="1" height="1" fill="#808080"/><rect x="94" y="601" width="1" height="1" fill="#808080"/><rect x="94" y="603" width="1" height="1" fill="#808080"/><rect x="94" y="507" width="1" height="1" fill="#808080"/><rect x="96" y="507" width="1" height="1" fill="#808080"/><rect x="98" y="507" width="1" height="1" fill="#808080"/><rect x="100" y="507" width="1" height="1" fill="#808080"/><rect x="102" y="507" width="1" height="1" fill="#808080"/><rect x="104" y="507" width="1" height="1" fill="#808080"/><rect x="94" y="523" width="1" height="1" fill="#808080"/><rect x="94" y="525" width="1" height="1" fill="#808080"/><rect x="94" y="527" width="1" height="1" fill="#808080"/><rect x="94" y="529" width="1" height="1" fill="#808080"/><rect x="94" y="531" width="1" height="1" fill="#808080"/><rect x="94" y="533" width="1" height="1" fill="#808080"/><rect x="94" y="535" width="1" height="1" fill="#808080"/><rect x="94" y="537" width="1" height="1" fill="#808080"/><rect x="94" y="539" width="1" height="1" fill="#808080"/><rect x="94" y="541" width="1" height="1" fill="#808080"/><rect x="94" y="543" width="1" height="1" fill="#808080"/><rect x="94" y="545" width="1" height="1" fill="#808080"/><rect x="94" y="547" width="1" height="1" fill="#808080"/><rect x="94" y="549" width="1" height="1" fill="#808080"/><rect x="94" y="551" width="1" height="1" fill="#808080"/><rect x="94" y="553" width="1" height="1" fill="#808080"/><rect x="94" y="555" width="1" height="1" fill="#808080"/><rect x="94" y="557" width="1" height="1" fill="#808080"/><rect x="94" y="559" width="1" height="1" fill="#808080"/><rect x="94" y="561" width="1" height="1" fill="#808080"/><rect x="94" y="563" width="1" height="1" fill="#808080"/><rect x="94" y="565" width="1" height="1" fill="#808080"/><rect x="94" y="567" width="1" height="1" fill="#808080"/><rect x="94" y="569" width="1" height="1" fill="#808080"/><rect x="94" y="571" width="1" height="1" fill="#808080"/><rect x="94" y="573" width="1" height="1" fill="#808080"/><rect x="94" y="575" width="1" height="1" fill="#808080"/><rect x="94" y="577" width="1" height="1" fill="#808080"/><rect x="94" y="579" width="1" height="1" fill="#808080"/><rect x="94" y="581" width="1" height="1" fill="#808080"/><rect x="94" y="583" width="1" height="1" fill="#808080"/><rect x="94" y="585" width="1" height="1" fill="#808080"/><rect x="94" y="587" width="1" height="1" fill="#808080"/><rect x="94" y="589" width="1" height="1" fill="#808080"/><rect x="94" y="591" width="1" height="1" fill="#808080"/><rect x="94" y="593" width="1" height="1" fill="#808080"/><rect x="94" y="595" width="1" height="1" fill="#808080"/><rect x="94" y="597" width="1" height="1" fill="#808080"/><rect x="94" y="599" width="1" height="1" fill="#808080"/><rect x="94" y="601" width="1" height="1" fill="#808080"/><rect x="94" y="603" width="1" height="1" fill="#808080"/><rect x="94" y="523" width="1" height="1" fill="#808080"/><rect x="96" y="523" width="1" height="1" fill="#808080"/><rect x="98" y="523" width="1" height="1" fill="#808080"/><rect x="100" y="523" width="1" height="1" fill="#808080"/><rect x="102" y="523" width="1" height="1" fill="#808080"/><rect x="104" y="523" width="1" height="1" fill="#808080"/><rect x="94" y="539" width="1" height="1" fill="#808080"/><rect x="94" y="541" width="1" height="1" fill="#808080"/><rect x="94" y="543" width="1" height="1" fill="#808080"/><rect x="94" y="545" width="1" height="1" fill="#808080"/><rect x="94" y="547" width="1" height="1" fill="#808080"/><rect x="94" y="549" width="1" height="1" fill="#808080"/><rect x="94" y="551" width="1" height="1" fill="#808080"/><rect x="94" y="553" width="1" height="1" fill="#808080"/><rect x="94" y="555" width="1" height="1" fill="#808080"/><rect x="94" y="557" width="1" height="1" fill="#808080"/><rect x="94" y="559" width="1" height="1" fill="#808080"/><rect x="94" y="561" width="1" height="1" fill="#808080"/><rect x="94" y="563" width="1" height="1" fill="#808080"/><rect x="94" y="565" width="1" height="1" fill="#808080"/><rect x="94" y="567" width="1" height="1" fill="#808080"/><rect x="94" y="569" width="1" height="1" fill="#808080"/><rect x="94" y="571" width="1" height="1" fill="#808080"/><rect x="94" y="573" width="1" height="1" fill="#808080"/><rect x="94" y="575" width="1" height="1" fill="#808080"/><rect x="94" y="577" width="1" height="1" fill="#808080"/><rect x="94" y="579" width="1" height="1" fill="#808080"/><rect x="94" y="581" width="1" height="1" fill="#808080"/><rect x="94" y="583" width="1" height="1" fill="#808080"/><rect x="94" y="585" width="1" height="1" fill="#808080"/><rect x="94" y="587" width="1" height="1" fill="#808080"/><rect x="94" y="589" width="1" height="1" fill="#808080"/><rect x="94" y="591" width="1" height="1" fill="#808080"/><rect x="94" y="593" width="1" height="1" fill="#808080"/><rect x="94" y="595" width="1" height="1" fill="#808080"/><rect x="94" y="597" width="1" height="1" fill="#808080"/><rect x="94" y="599" width="1" height="1" fill="#808080"/><rect x="94" y="601" width="1" height="1" fill="#808080"/><rect x="94" y="603" width="1" height="1" fill="#808080"/><rect x="94" y="539" width="1" height="1" fill="#808080"/><rect x="96" y="539" width="1" height="1" fill="#808080"/><rect x="98" y="539" width="1" height="1" fill="#808080"/><rect x="100" y="539" width="1" height="1" fill="#808080"/><rect x="102" y="539" width="1" height="1" fill="#808080"/><rect x="104" y="539" width="1" height="1" fill="#808080"/><rect x="94" y="555" width="1" height="1" fill="#808080"/><rect x="94" y="557" width="1" height="1" fill="#808080"/><rect x="94" y="559" width="1" height="1" fill="#808080"/><rect x="94" y="561" width="1" height="1" fill="#808080"/><rect x="94" y="563" width="1" height="1" fill="#808080"/><rect x="94" y="565" width="1" height="1" fill="#808080"/><rect x="94" y="567" width="1" height="1" fill="#808080"/><rect x="94" y="569" width="1" height="1" fill="#808080"/><rect x="94" y="571" width="1" height="1" fill="#808080"/><rect x="94" y="573" width="1" height="1" fill="#808080"/><rect x="94" y="575" width="1" height="1" fill="#808080"/><rect x="94" y="577" width="1" height="1" fill="#808080"/><rect x="94" y="579" width="1" height="1" fill="#808080"/><rect x="94" y="581" width="1" height="1" fill="#808080"/><rect x="94" y="583" width="1" height="1" fill="#808080"/><rect x="94" y="585" width="1" height="1" fill="#808080"/><rect x="94" y="587" width="1" height="1" fill="#808080"/><rect x="94" y="589" width="1" height="1" fill="#808080"/><rect x="94" y="591" width="1" height="1" fill="#808080"/><rect x="94" y="593" width="1" height="1" fill="#808080"/><rect x="94" y="595" width="1" height="1" fill="#808080"/><rect x="94" y="597" width="1" height="1" fill="#808080"/><rect x="94" y="599" width="1" height="1" fill="#808080"/><rect x="94" y="601" width="1" height="1" fill="#808080"/><rect x="94" y="603" width="1" height="1" fill="#808080"/><rect x="94" y="555" width="1" height="1" fill="#808080"/><rect x="96" y="555" width="1" height="1" fill="#808080"/><rect x="98" y="555" width="1" height="1" fill="#808080"/><rect x="100" y="555" width="1" height="1" fill="#808080"/><rect x="102" y="555" width="1" height="1" fill="#808080"/><rect x="104" y="555" width="1" height="1" fill="#808080"/><rect x="94" y="571" width="1" height="1" fill="#808080"/><rect x="94" y="573" width="1" height="1" fill="#808080"/><rect x="94" y="575" width="1" height="1" fill="#808080"/><rect x="94" y="577" width="1" height="1" fill="#808080"/><rect x="94" y="579" width="1" height="1" fill="#808080"/><rect x="94" y="581" width="1" height="1" fill="#808080"/><rect x="94" y="583" width="1" height="1" fill="#808080"/><rect x="94" y="585" width="1" height="1" fill="#808080"/><rect x="94" y="587" width="1" height="1" fill="#808080"/><rect x="94" y="589" width="1" height="1" fill="#808080"/><rect x="94" y="591" width="1" height="1" fill="#808080"/><rect x="94" y="593" width="1" height="1" fill="#808080"/><rect x="94" y="595" width="1" height="1" fill="#808080"/><rect x="94" y="597" width="1" height="1" fill="#808080"/><rect x="94" y="599" width="1" height="1" fill="#808080"/><rect x="94" y="601" width="1" height="1" fill="#808080"/><rect x="94" y="603" width="1" height="1" fill="#808080"/><rect x="94" y="571" width="1" height="1" fill="#808080"/><rect x="96" y="571" width="1" height="1" fill="#808080"/><rect x="98" y="571" width="1" height="1" fill="#808080"/><rect x="100" y="571" width="1" height="1" fill="#808080"/><rect x="102" y="571" width="1" height="1" fill="#808080"/><rect x="104" y="571" width="1" height="1" fill="#808080"/><rect x="94" y="587" width="1" height="1" fill="#808080"/><rect x="94" y="589" width="1" height="1" fill="#808080"/><rect x="94" y="591" width="1" height="1" fill="#808080"/><rect x="94" y="593" width="1" height="1" fill="#808080"/><rect x="94" y="595" width="1" height="1" fill="#808080"/><rect x="94" y="597" width="1" height="1" fill="#808080"/><rect x="94" y="599" width="1" height="1" fill="#808080"/><rect x="94" y="601" width="1" height="1" fill="#808080"/><rect x="94" y="603" width="1" height="1" fill="#808080"/><rect x="94" y="587" width="1" height="1" fill="#808080"/><rect x="96" y="587" width="1" height="1" fill="#808080"/><rect x="98" y="587" width="1" height="1" fill="#808080"/><rect x="100" y="587" width="1" height="1" fill="#808080"/><rect x="102" y="587" width="1" height="1" fill="#808080"/><rect x="104" y="587" width="1" height="1" fill="#808080"/><rect x="94" y="603" width="1" height="1" fill="#808080"/><rect x="96" y="603" width="1" height="1" fill="#808080"/><rect x="98" y="603" width="1" height="1" fill="#808080"/><rect x="100" y="603" width="1" height="1" fill="#808080"/><rect x="102" y="603" width="1" height="1" fill="#808080"/><rect x="104" y="603" width="1" height="1" fill="#808080"/><rect x="40" y="619" width="1" height="1" fill="#808080"/><rect x="42" y="619" width="1" height="1" fill="#808080"/><rect x="44" y="619" width="1" height="1" fill="#808080"/><rect x="14" y="635" width="1" height="1" fill="#808080"/><rect x="16" y="635" width="1" height="1" fill="#808080"/><rect x="18" y="635" width="1" height="1" fill="#808080"/><rect x="20" y="635" width="1" height="1" fill="#808080"/><rect x="22" y="635" width="1" height="1" fill="#808080"/><rect x="24" y="635" width="1" height="1" fill="#808080"/><rect x="10.5" y="103.5" width="8" height="8" fill="#fff" stroke="#808080"/><rect x="12" y="107" width="5" height="1" fill="#000"/><g transform="translate(26,99)"><rect x="0.5" y="1.5" width="8" height="13" fill="#E4E4E4" stroke="#C0C0C0"/><rect x="1" y="9" width="1.5" height="1.5" fill="#E00"/><rect x="3.5" y="6.5" width="9" height="7" fill="url(#tmon)" stroke="#000"/><rect x="5" y="15" width="6" height="1" fill="#000"/><rect x="7.5" y="14" width="1" height="1" fill="#000"/><path d="M16 1L11 6L13 7L7 14" stroke="#FF6A00" stroke-width="2" fill="none"/><path d="M12 7L7 14" stroke="#FFE800" stroke-width="1.5" fill="none"/></g><rect x="30.5" y="119.5" width="8" height="8" fill="#fff" stroke="#808080"/><rect x="32" y="123" width="5" height="1" fill="#000"/><rect x="34" y="121" width="1" height="5" fill="#000"/><g transform="translate(46,115)"><rect x="7.5" y="1.5" width="8" height="10" fill="#FFF" stroke="#4A90C8"/><rect x="4.5" y="3.5" width="8" height="10" fill="#FFF" stroke="#4A90C8"/><rect x="1.5" y="5.5" width="8" height="10" fill="#FFF" stroke="#4A90C8"/><rect x="3" y="8" width="5" height="1" fill="#5EA0D8"/><rect x="3" y="10" width="5" height="1" fill="#5EA0D8"/><rect x="3" y="12" width="5" height="1" fill="#5EA0D8"/></g><rect x="30.5" y="135.5" width="8" height="8" fill="#fff" stroke="#808080"/><rect x="32" y="139" width="5" height="1" fill="#000"/><g transform="translate(46,131)"><rect x="2.5" y="4.5" width="9" height="7" fill="url(#tenv)" stroke="#A0A0A0"/><path d="M3 5L7.0 8.5L11 5M3 11L5.0 7.5M11 11L9.0 7.5" stroke="#A8A090" stroke-width="0.8" fill="none"/><path d="M7.5 7h7.5v2l-4 3h3.5v2.5h-8v-2l4-3h-3.5z" fill="#F01818"/></g><rect x="50.5" y="151.5" width="8" height="8" fill="#fff" stroke="#808080"/><rect x="52" y="155" width="5" height="1" fill="#000"/><g transform="translate(66,147)"><rect x="1.5" y="0.5" width="8" height="14" fill="#E4E4E4" stroke="#C0C0C0"/><rect x="3" y="10" width="1.5" height="1.5" fill="#E00"/><rect x="3" y="4" width="5" height="1" fill="#C8C8C8"/><rect x="6.5" y="5.5" width="9" height="8" fill="url(#tmon)" stroke="#000"/><ellipse cx="11.5" cy="13" rx="4.3" ry="3" fill="#10B010"/><rect x="11" y="10" width="1" height="6" fill="#80E080"/><rect x="9" y="15" width="5" height="1" fill="#006000"/></g><rect x="70.5" y="167.5" width="8" height="8" fill="#fff" stroke="#808080"/><rect x="72" y="171" width="5" height="1" fill="#000"/><g transform="translate(86,163)"><rect x="0.5" y="2.5" width="9" height="10" fill="url(#tenv)" stroke="#A0A0A0"/><path d="M1 3L5.0 8.0L9 3M1 12L3.0 7.0M9 12L7.0 7.0" stroke="#A8A090" stroke-width="0.8" fill="none"/><path d="M8 0v4l2.5 2.5v9h3v-9l2.5-2.5v-4h-1.5v3l-1.5 1h-2l-1.5-1v-3z" fill="#1E56A8"/><rect x="11.5" y="7" width="1" height="7.5" fill="#7AA8E8"/></g><rect x="90.5" y="183.5" width="8" height="8" fill="#fff" stroke="#808080"/><rect x="92" y="187" width="5" height="1" fill="#000"/><g transform="translate(106,179)"><rect x="1.5" y="2.5" width="13" height="11" fill="url(#tenv)" stroke="#A0A0A0"/><path d="M2 3L8.0 8.5L14 3M2 13L6.0 7.5M14 13L10.0 7.5" stroke="#A8A090" stroke-width="0.8" fill="none"/></g><g transform="translate(126,195)"><path d="M0.5 3.5h4l1 1h5v7h-10z" fill="url(#tfold)" stroke="#7A9AB8" stroke-width="0.8"/><path d="M8 0v4l2.5 2.5v9h3v-9l2.5-2.5v-4h-1.5v3l-1.5 1h-2l-1.5-1v-3z" fill="#1E56A8"/><rect x="11.5" y="7" width="1" height="7.5" fill="#7AA8E8"/></g><g transform="translate(126,211)"><rect x="1.5" y="5.5" width="12" height="10" fill="url(#tenv)" stroke="#A0A0A0"/><path d="M2 6L7.5 11.0L13 6M2 15L5.5 10.0M13 15L9.5 10.0" stroke="#A8A090" stroke-width="0.8" fill="none"/><path d="M7.5 0v5" stroke="#00C800" stroke-width="1.6"/><path d="M4.5 3.5l3 3.5l3-3.5z" fill="#00C800"/></g><g transform="translate(126,227)"><rect x="1.5" y="6.5" width="12" height="9" fill="url(#tenv)" stroke="#A0A0A0"/><path d="M2 7L7.5 11.5L13 7M2 15L5.5 10.5M13 15L9.5 10.5" stroke="#A8A090" stroke-width="0.8" fill="none"/><path d="M7.5 2.5v6" stroke="#00C800" stroke-width="1.6"/><path d="M4.5 4l3-3.5l3 3.5z" fill="#00C800"/></g><g transform="translate(106,243)"><g fill="#22B022"><circle cx="3.5" cy="3" r="2.6"/><circle cx="7.5" cy="2.5" r="2.6"/><circle cx="2.5" cy="7" r="2.6"/><circle cx="8" cy="6.5" r="2.6"/></g><circle cx="5" cy="5" r="1" fill="#FFE040"/><path d="M1 6l2 2" stroke="#D01010" stroke-width="1.5"/><circle cx="10.5" cy="10.5" r="5" fill="url(#tglobe)"/></g><g transform="translate(106,259)"><rect x="6.5" y="1.5" width="7" height="8" fill="#FFF" stroke="#4A90C8"/><rect x="4.5" y="3.5" width="7" height="8" fill="#FFF" stroke="#4A90C8"/><rect x="2.5" y="5.5" width="7" height="7" fill="#FFF" stroke="#4A90C8"/><path d="M1 10h9v6h-9z" fill="#F0E060" stroke="#A0A0A0" stroke-width="0.7"/><path d="M10 10l4-3v6l-4 3z" fill="#D8C830"/></g><g transform="translate(106,275)"><path d="M0.5 2.5h5l1 1.5h8v10.5h-14z" fill="url(#tyfold)" stroke="#8A8A20"/><rect x="1" y="14.5" width="14" height="1" fill="#000"/><rect x="14.5" y="4" width="1" height="11" fill="#000"/></g><g transform="translate(106,291)"><rect x="0.5" y="0.5" width="10" height="8" fill="url(#tenv)" stroke="#A0A0A0"/><path d="M1 1L5.5 5.0L10 1M1 8L3.5 4.0M10 8L7.5 4.0" stroke="#A8A090" stroke-width="0.8" fill="none"/><circle cx="10" cy="7" r="3" fill="#F4A8A8"/><path d="M8 4.5q2-2 4 0l-1 1h-2z" fill="#000"/><path d="M6 15l4-4l4 4z" fill="#1E3C90"/></g><g transform="translate(106,307)"><rect x="0" y="3" width="16" height="11" fill="#D00000"/><path d="M1 1.5q3-1 7 1q4-2 7-1v11q-3-1-7 1q-4-2-7-1z" fill="#4A8AE8"/><path d="M2 2.5q2.5-.5 5.5 1v9q-3-1.5-5.5-1zM8.5 3.5q3-1.5 5.5-1v9q-2.5-.5-5.5 1z" fill="#DDEEFF"/><path d="M3 5h3M3 7h3M3 9h3M10 5h3M10 7h3M10 9h3" stroke="#4A8AE8" stroke-width="0.8"/></g><g transform="translate(106,323)"><path d="M2 6h10v7h-8z" fill="#B0D0F8" stroke="#3060D8" stroke-width="1"/><path d="M1 12h11v3h-11z" fill="#C8E0FF" stroke="#3060D8"/><path d="M1 2l3 4l4-5" stroke="#3060D8" stroke-width="2" fill="none"/><circle cx="13" cy="5" r="1.5" fill="#90B8F0" stroke="#3060D8" stroke-width="0.8"/></g><g transform="translate(106,339)"><rect x="1.5" y="2.5" width="13" height="11" fill="url(#tstat)" stroke="#A0A0A0"/><path d="M2 2h13" stroke="#000" stroke-dasharray="1 1"/><path d="M2.5 11l3-3l3 2l5-5" stroke="#10B010" stroke-width="1.2" fill="none"/></g><g transform="translate(86,355)"><path d="M1.5 1.5h13l-5 5.5v8.5l-3-2v-6.5z" fill="url(#tfun)" stroke="#B8A8A8" stroke-width="0.7"/></g><rect x="70.5" y="375.5" width="8" height="8" fill="#fff" stroke="#808080"/><rect x="72" y="379" width="5" height="1" fill="#000"/><g transform="translate(86,371)"><rect x="6.5" y="1.5" width="7" height="8" fill="#FFF" stroke="#4A90C8"/><rect x="4.5" y="3.5" width="7" height="8" fill="#FFF" stroke="#4A90C8"/><rect x="2.5" y="5.5" width="7" height="7" fill="#FFF" stroke="#4A90C8"/><path d="M1 10h9v6h-9z" fill="#F0E060" stroke="#A0A0A0" stroke-width="0.7"/><path d="M10 10l4-3v6l-4 3z" fill="#D8C830"/></g><g transform="translate(106,387)"><rect x="3.5" y="1.5" width="8" height="11" fill="#F0FAF0" stroke="#A0A0A0"/><path d="M5.5 4.5q0-1.5 2-1.5q2.2 0 2.2 1.8q0 1-1.2 1.7q-.8.5-.8 1.5" stroke="#00A000" stroke-width="1.6" fill="none"/><rect x="6.9" y="9" width="1.6" height="1.6" fill="#008000"/></g><g transform="translate(106,403)"><rect x="3.5" y="1.5" width="8" height="11" fill="#F0FAF0" stroke="#A0A0A0"/><path d="M5.5 4.5q0-1.5 2-1.5q2.2 0 2.2 1.8q0 1-1.2 1.7q-.8.5-.8 1.5" stroke="#00A000" stroke-width="1.6" fill="none"/><rect x="6.9" y="9" width="1.6" height="1.6" fill="#008000"/></g><g transform="translate(106,419)"><rect x="3.5" y="1.5" width="8" height="11" fill="#F0FAF0" stroke="#A0A0A0"/><path d="M5.5 4.5q0-1.5 2-1.5q2.2 0 2.2 1.8q0 1-1.2 1.7q-.8.5-.8 1.5" stroke="#00A000" stroke-width="1.6" fill="none"/><rect x="6.9" y="9" width="1.6" height="1.6" fill="#008000"/></g><g transform="translate(106,435)"><rect x="3.5" y="1.5" width="8" height="11" fill="#F0FAF0" stroke="#A0A0A0"/><path d="M5.5 4.5q0-1.5 2-1.5q2.2 0 2.2 1.8q0 1-1.2 1.7q-.8.5-.8 1.5" stroke="#00A000" stroke-width="1.6" fill="none"/><rect x="6.9" y="9" width="1.6" height="1.6" fill="#008000"/></g><g transform="translate(106,451)"><rect x="3.5" y="1.5" width="8" height="11" fill="#F0FAF0" stroke="#A0A0A0"/><path d="M5.5 4.5q0-1.5 2-1.5q2.2 0 2.2 1.8q0 1-1.2 1.7q-.8.5-.8 1.5" stroke="#00A000" stroke-width="1.6" fill="none"/><rect x="6.9" y="9" width="1.6" height="1.6" fill="#008000"/></g><g transform="translate(106,467)"><rect x="3.5" y="1.5" width="8" height="11" fill="#F0FAF0" stroke="#A0A0A0"/><path d="M5.5 4.5q0-1.5 2-1.5q2.2 0 2.2 1.8q0 1-1.2 1.7q-.8.5-.8 1.5" stroke="#00A000" stroke-width="1.6" fill="none"/><rect x="6.9" y="9" width="1.6" height="1.6" fill="#008000"/></g><g transform="translate(106,483)"><rect x="3.5" y="1.5" width="8" height="11" fill="#F0FAF0" stroke="#A0A0A0"/><path d="M5.5 4.5q0-1.5 2-1.5q2.2 0 2.2 1.8q0 1-1.2 1.7q-.8.5-.8 1.5" stroke="#00A000" stroke-width="1.6" fill="none"/><rect x="6.9" y="9" width="1.6" height="1.6" fill="#008000"/></g><g transform="translate(106,499)"><rect x="3.5" y="1.5" width="8" height="11" fill="#F0FAF0" stroke="#A0A0A0"/><path d="M5.5 4.5q0-1.5 2-1.5q2.2 0 2.2 1.8q0 1-1.2 1.7q-.8.5-.8 1.5" stroke="#00A000" stroke-width="1.6" fill="none"/><rect x="6.9" y="9" width="1.6" height="1.6" fill="#008000"/></g><g transform="translate(106,515)"><rect x="3.5" y="1.5" width="8" height="11" fill="#F0FAF0" stroke="#A0A0A0"/><path d="M5.5 4.5q0-1.5 2-1.5q2.2 0 2.2 1.8q0 1-1.2 1.7q-.8.5-.8 1.5" stroke="#00A000" stroke-width="1.6" fill="none"/><rect x="6.9" y="9" width="1.6" height="1.6" fill="#008000"/></g><g transform="translate(106,531)"><rect x="3.5" y="1.5" width="8" height="11" fill="#F0FAF0" stroke="#A0A0A0"/><path d="M5.5 4.5q0-1.5 2-1.5q2.2 0 2.2 1.8q0 1-1.2 1.7q-.8.5-.8 1.5" stroke="#00A000" stroke-width="1.6" fill="none"/><rect x="6.9" y="9" width="1.6" height="1.6" fill="#008000"/></g><g transform="translate(106,547)"><rect x="3.5" y="1.5" width="8" height="11" fill="#F0FAF0" stroke="#A0A0A0"/><path d="M5.5 4.5q0-1.5 2-1.5q2.2 0 2.2 1.8q0 1-1.2 1.7q-.8.5-.8 1.5" stroke="#00A000" stroke-width="1.6" fill="none"/><rect x="6.9" y="9" width="1.6" height="1.6" fill="#008000"/></g><g transform="translate(106,563)"><rect x="3.5" y="1.5" width="8" height="11" fill="#F0FAF0" stroke="#A0A0A0"/><path d="M5.5 4.5q0-1.5 2-1.5q2.2 0 2.2 1.8q0 1-1.2 1.7q-.8.5-.8 1.5" stroke="#00A000" stroke-width="1.6" fill="none"/><rect x="6.9" y="9" width="1.6" height="1.6" fill="#008000"/></g><g transform="translate(106,579)"><rect x="3.5" y="1.5" width="8" height="11" fill="#F0FAF0" stroke="#A0A0A0"/><path d="M5.5 4.5q0-1.5 2-1.5q2.2 0 2.2 1.8q0 1-1.2 1.7q-.8.5-.8 1.5" stroke="#00A000" stroke-width="1.6" fill="none"/><rect x="6.9" y="9" width="1.6" height="1.6" fill="#008000"/></g><g transform="translate(106,595)"><rect x="3.5" y="1.5" width="8" height="11" fill="#F0FAF0" stroke="#A0A0A0"/><path d="M5.5 4.5q0-1.5 2-1.5q2.2 0 2.2 1.8q0 1-1.2 1.7q-.8.5-.8 1.5" stroke="#00A000" stroke-width="1.6" fill="none"/><rect x="6.9" y="9" width="1.6" height="1.6" fill="#008000"/></g><rect x="30.5" y="615.5" width="8" height="8" fill="#fff" stroke="#808080"/><rect x="32" y="619" width="5" height="1" fill="#000"/><rect x="34" y="617" width="1" height="5" fill="#000"/><g transform="translate(46,611)"><rect x="0.5" y="1.5" width="8" height="13" fill="#E4E4E4" stroke="#C0C0C0"/><rect x="1" y="9" width="1.5" height="1.5" fill="#E00"/><rect x="3.5" y="6.5" width="9" height="7" fill="url(#tmon)" stroke="#000"/><rect x="5" y="15" width="6" height="1" fill="#000"/><rect x="7.5" y="14" width="1" height="1" fill="#000"/><path d="M16 1L11 6L13 7L7 14" stroke="#FF6A00" stroke-width="2" fill="none"/><path d="M12 7L7 14" stroke="#FFE800" stroke-width="1.5" fill="none"/></g><g transform="translate(26,627)"><rect x="1" y="3" width="15" height="11" fill="#D00000"/><path d="M2 1.5q3-1 6.5 1q3.5-2 6.5-1v11q-3-1-6.5 1q-3.5-2-6.5-1z" fill="#5A9AF0"/><path d="M3 2.5q2.5-.5 5 1v9q-2.5-1.5-5-1zM9 3.5q2.5-1.5 5-1v9q-2.5-.5-5 1z" fill="#E0F0FF"/><circle cx="6" cy="10" r="3.3" fill="#B8D8FF" stroke="#000" stroke-width="1.3"/><path d="M3.5 12.5L0.5 15.5" stroke="#000" stroke-width="2"/></g></svg><span class="t" style="left:49px;top:101px">Компьютеры и приложения</span><span class="t" style="left:69px;top:117px">Серверы журналов</span><span class="t" style="left:69px;top:133px">Zgate</span><span class="t" style="left:89px;top:149px">RRV-ZGATE</span><span class="t" style="left:109px;top:165px">Настройки</span><span class="t" style="left:129px;top:181px">Почта</span><span class="t" style="left:149px;top:197px">Общие</span><span class="t" style="left:149px;top:213px">Прием</span><span class="t" style="left:149px;top:229px">Передача</span><span class="t" style="left:129px;top:245px">Интернет</span><span class="t" style="left:129px;top:261px">Архив</span><span class="t" style="left:129px;top:277px">Каталоги</span><span class="t" style="left:129px;top:293px">Доступ</span><span class="t" style="left:129px;top:309px">Журналирование</span><span class="t" style="left:129px;top:325px">Скрипты</span><span class="t" style="left:129px;top:341px">Статистика</span><span class="t" style="left:109px;top:357px">Фильтрация</span><span class="t" style="left:109px;top:373px">Архив</span><span class="t" style="left:129px;top:389px">Диаграмма за квартал</span><span class="t" style="left:129px;top:405px">Диаграмма за сегодня</span><span class="t" style="left:129px;top:421px">Отчет за вчера</span><span class="t" style="left:129px;top:437px">Почта</span><div style="left:125px;top:451px;width:158px;height:16px;background:#0A246A"></div><span class="t" style="left:129px;top:453px;color:#fff">Просмотр важных за сегодня</span><span class="t" style="left:129px;top:469px">Просмотр всех IM за неделю</span><span class="t" style="left:129px;top:485px">Просмотр всех Web за неделю</span><span class="t" style="left:129px;top:501px">Просмотр всех больше 10 Мб</span><span class="t" style="left:129px;top:517px">Просмотр всех за вчера</span><span class="t" style="left:129px;top:533px">Просмотр всех за месяц</span><span class="t" style="left:129px;top:549px">Просмотр всех за сегодня</span><span class="t" style="left:129px;top:565px">Просмотр всех с атрибутами за неделю</span><span class="t" style="left:129px;top:581px">Просмотр всех с вложениями за неделю</span><span class="t" style="left:129px;top:597px">Просмотр почты за неделю</span><span class="t" style="left:69px;top:613px">Без приложений</span><span class="t" style="left:49px;top:629px">Журнал событий</span></div></div>
<div style="left:6px;top:866px;width:283px;height:16px;background-color:#fff;background-image:repeating-conic-gradient(#D4D0C8 0 25%,#fff 0 50%);background-size:2px 2px"></div>
<div style="left:6px;top:866px;width:16px;height:16px;background:#D4D0C8;border:1px solid;border-color:#D4D0C8 #404040 #404040 #D4D0C8;box-shadow:inset 1px 1px #fff,inset -1px -1px #808080;"></div>
<svg style="position:absolute;left:11px;top:870px" width="4" height="7" viewBox="0 0 4 7"><path d="M4 0v7l-4-3.5z" fill="#000"/></svg>
<div style="left:273px;top:866px;width:16px;height:16px;background:#D4D0C8;border:1px solid;border-color:#D4D0C8 #404040 #404040 #D4D0C8;box-shadow:inset 1px 1px #fff,inset -1px -1px #808080;"></div>
<svg style="position:absolute;left:279px;top:870px" width="4" height="7" viewBox="0 0 4 7"><path d="M0 0v7l4-3.5z" fill="#000"/></svg>
<div style="left:22px;top:866px;width:212px;height:16px;background:#D4D0C8;border:1px solid;border-color:#D4D0C8 #404040 #404040 #D4D0C8;box-shadow:inset 1px 1px #fff,inset -1px -1px #808080;"></div>
<div style="left:294px;top:97px;width:878px;height:787px;background:#D4D0C8;border:1px solid;border-color:#808080 #fff #fff #808080;box-shadow:inset 1px 1px #000,inset -1px -1px #D4D0C8;"></div>
<svg style="position:absolute;left:0;top:0" width="640" height="140" viewBox="0 0 640 140"><defs>
<linearGradient id="flop" x1="0" y1="0" x2="1" y2="1"><stop offset="0" stop-color="#8CC4F4"/><stop offset="1" stop-color="#2A78D0"/></linearGradient>
<linearGradient id="playg" x1="0" y1="0" x2="1" y2="1"><stop offset="0" stop-color="#E8F6FF"/><stop offset="1" stop-color="#80C0F8"/></linearGradient>
<linearGradient id="hdrg" x1="0" y1="0" x2="0" y2="1"><stop offset="0" stop-color="#E4F2FF"/><stop offset="1" stop-color="#7EC0F4"/></linearGradient>
</defs><path d="M313.5 114.5h13v13h-12l-1-1z" fill="url(#flop)" stroke="#3A80CC"/><rect x="315" y="115.5" width="10" height="4.2" fill="#F4FAFF"/><rect x="316" y="121.7" width="9" height="5.9" fill="#E8E8E8"/><rect x="317" y="122.7" width="1.6" height="4.2" fill="#1A5AB0"/><path d="M350.5 118.5h9v9h-8l-1-1z" fill="url(#flop)" stroke="#3A80CC"/><rect x="352" y="119.5" width="6" height="3.0" fill="#F4FAFF"/><rect x="353" y="123.5" width="5" height="4.2" fill="#E8E8E8"/><rect x="354" y="124.2" width="1.6" height="3.0" fill="#1A5AB0"/><path d="M345 113h6l-1.5 1.5l3.5 3.5v5l-2-1.5l-4-4l-1.5 1.5z" fill="#30C030" stroke="#1C901C" stroke-width="0.7"/><path d="M383.5 114.5l7.5 6.5l-7.5 7z" fill="url(#playg)" stroke="#4A8EDC"/><rect x="594" y="116" width="3" height="10" rx="1.2" fill="#70E070" stroke="#18A018" stroke-width="0.8"/><path d="M597.5 121l4-4v2.5h6.5v3h-6.5v2.5z" fill="#70E070" stroke="#18A018" stroke-width="0.8"/></svg>
<span class="t " style="left:307px;top:159px;">Режим:</span>
<div style="left:350px;top:154px;width:265px;height:21px;background:#fff;border:1px solid;border-color:#808080 #fff #fff #808080;box-shadow:inset 1px 1px #404040,inset -1px -1px #D4D0C8;"></div>
<div style="left:597px;top:156px;width:16px;height:17px;background:#D4D0C8;border:1px solid;border-color:#D4D0C8 #404040 #404040 #D4D0C8;box-shadow:inset 1px 1px #fff,inset -1px -1px #808080;"></div>
<svg style="position:absolute;left:601px;top:162px" width="7" height="4" viewBox="0 0 7 4"><path d="M0 0h7l-3.5 4z" fill="#000"/></svg>
<span class="t " style="left:353px;top:159px;">Просмотр архива</span>
<div style="left:296px;top:185px;width:329px;height:1px;background:#808080"></div>
<div style="left:296px;top:186px;width:329px;height:1px;background:#fff"></div>
<div style="left:296px;top:192px;width:330px;height:24px;background:#D4D0C8;border-top:1px solid #fff;border-left:1px solid #fff;border-right:1px solid #404040;border-bottom:1px solid #404040;box-shadow:inset -1px -1px #808080"></div>
<svg style="position:absolute;left:303px;top:199px;" width="10" height="11" viewBox="0 0 10 11"><path d="M1.5 0.5h7l-3.5 4z" fill="url(#hdrg)" stroke="#3A7ED0" stroke-width="1"/><rect x="1" y="6" width="8" height="4" rx="1.2" fill="url(#hdrg)" stroke="#3A7ED0" stroke-width="1"/></svg>
<span class="t " style="left:316px;top:198px;font-weight:bold;letter-spacing:0.4px;-webkit-text-stroke:0.2px">Интервал времени</span>
<span class="t " style="left:307px;top:233px;">За:</span>
<div style="left:349px;top:228px;width:266px;height:21px;background:#fff;border:1px solid;border-color:#808080 #fff #fff #808080;box-shadow:inset 1px 1px #404040,inset -1px -1px #D4D0C8;"></div>
<div style="left:597px;top:230px;width:16px;height:17px;background:#D4D0C8;border:1px solid;border-color:#D4D0C8 #404040 #404040 #D4D0C8;box-shadow:inset 1px 1px #fff,inset -1px -1px #808080;"></div>
<svg style="position:absolute;left:601px;top:236px" width="7" height="4" viewBox="0 0 7 4"><path d="M0 0h7l-3.5 4z" fill="#000"/></svg>
<span class="t " style="left:353px;top:233px;">Период</span>
<span class="t " style="left:307px;top:267px;">С:</span>
<div style="left:349px;top:261px;width:125px;height:24px;background:#fff;border:1px solid;border-color:#808080 #fff #fff #808080;box-shadow:inset 1px 1px #404040,inset -1px -1px #D4D0C8;"></div>
<div style="left:456px;top:263px;width:16px;height:20px;background:#D4D0C8;border:1px solid;border-color:#D4D0C8 #404040 #404040 #D4D0C8;box-shadow:inset 1px 1px #fff,inset -1px -1px #808080;"></div>
<svg style="position:absolute;left:460px;top:271px" width="7" height="4" viewBox="0 0 7 4"><path d="M0 0h7l-3.5 4z" fill="#000"/></svg>
<span class="t " style="left:351px;top:267px;letter-spacing:0.2px">01.11.2012</span>
<div style="left:491px;top:261px;width:125px;height:24px;background:#fff;border:1px solid;border-color:#808080 #fff #fff #808080;box-shadow:inset 1px 1px #404040,inset -1px -1px #D4D0C8;"></div>
<div style="left:598px;top:263px;width:16px;height:10px;background:#D4D0C8;border:1px solid;border-color:#D4D0C8 #404040 #404040 #D4D0C8;box-shadow:inset 1px 1px #fff,inset -1px -1px #808080;"></div>
<div style="left:598px;top:273px;width:16px;height:10px;background:#D4D0C8;border:1px solid;border-color:#D4D0C8 #404040 #404040 #D4D0C8;box-shadow:inset 1px 1px #fff,inset -1px -1px #808080;"></div>
<svg style="position:absolute;left:604px;top:263px" width="5" height="20" viewBox="0 0 5 20"><path d="M0 6h5l-2.5-2.5z" fill="#000"/><path d="M0 14h5l-2.5 2.5z" fill="#000"/></svg>
<span class="t " style="left:499px;top:267px;letter-spacing:0.2px">0:00:00</span>
<span class="t " style="left:307px;top:301px;">По:</span>
<div style="left:349px;top:295px;width:125px;height:24px;background:#fff;border:1px solid;border-color:#808080 #fff #fff #808080;box-shadow:inset 1px 1px #404040,inset -1px -1px #D4D0C8;"></div>
<div style="left:456px;top:297px;width:16px;height:20px;background:#D4D0C8;border:1px solid;border-color:#D4D0C8 #404040 #404040 #D4D0C8;box-shadow:inset 1px 1px #fff,inset -1px -1px #808080;"></div>
<svg style="position:absolute;left:460px;top:305px" width="7" height="4" viewBox="0 0 7 4"><path d="M0 0h7l-3.5 4z" fill="#000"/></svg>
<span class="t " style="left:351px;top:301px;letter-spacing:0.2px">01.12.2012</span>
<div style="left:491px;top:295px;width:125px;height:24px;background:#fff;border:1px solid;border-color:#808080 #fff #fff #808080;box-shadow:inset 1px 1px #404040,inset -1px -1px #D4D0C8;"></div>
<div style="left:598px;top:297px;width:16px;height:10px;background:#D4D0C8;border:1px solid;border-color:#D4D0C8 #404040 #404040 #D4D0C8;box-shadow:inset 1px 1px #fff,inset -1px -1px #808080;"></div>
<div style="left:598px;top:307px;width:16px;height:10px;background:#D4D0C8;border:1px solid;border-color:#D4D0C8 #404040 #404040 #D4D0C8;box-shadow:inset 1px 1px #fff,inset -1px -1px #808080;"></div>
<svg style="position:absolute;left:604px;top:297px" width="5" height="20" viewBox="0 0 5 20"><path d="M0 6h5l-2.5-2.5z" fill="#000"/><path d="M0 14h5l-2.5 2.5z" fill="#000"/></svg>
<span class="t " style="left:492px;top:301px;letter-spacing:0.2px">23:59:59</span>
<div style="left:296px;top:330px;width:329px;height:4px;background:linear-gradient(#F6F6F6,#C8CACC 60%,#B8BCC0)"></div>
<div style="left:296px;top:334px;width:330px;height:24px;background:#D4D0C8;border-top:1px solid #fff;border-left:1px solid #fff;border-right:1px solid #404040;border-bottom:1px solid #404040;box-shadow:inset -1px -1px #808080"></div>
<svg style="position:absolute;left:303px;top:342px;" width="10" height="9" viewBox="0 0 10 9"><rect x="0.5" y="0.5" width="3" height="7" rx="1" fill="url(#hdrg)" stroke="#3A7ED0" stroke-width="1"/><path d="M5.5 0.5l4 3.5l-4 3.5z" fill="url(#hdrg)" stroke="#3A7ED0" stroke-width="1"/></svg>
<span class="t " style="left:316px;top:340px;">Фильтр</span>
<div style="left:296px;top:358px;width:329px;height:4px;background:linear-gradient(#F6F6F6,#C8CACC 60%,#B8BCC0)"></div>
<div style="left:296px;top:362px;width:330px;height:24px;background:#D4D0C8;border-top:1px solid #fff;border-left:1px solid #fff;border-right:1px solid #404040;border-bottom:1px solid #404040;box-shadow:inset -1px -1px #808080"></div>
<svg style="position:absolute;left:303px;top:370px;" width="10" height="9" viewBox="0 0 10 9"><rect x="0.5" y="0.5" width="3" height="7" rx="1" fill="url(#hdrg)" stroke="#3A7ED0" stroke-width="1"/><path d="M5.5 0.5l4 3.5l-4 3.5z" fill="url(#hdrg)" stroke="#3A7ED0" stroke-width="1"/></svg>
<span class="t " style="left:316px;top:368px;">Поиск похожего</span>
<div style="left:296px;top:386px;width:329px;height:4px;background:linear-gradient(#F6F6F6,#C8CACC 60%,#B8BCC0)"></div>
<div style="left:296px;top:390px;width:330px;height:24px;background:#D4D0C8;border-top:1px solid #fff;border-left:1px solid #fff;border-right:1px solid #404040;border-bottom:1px solid #404040;box-shadow:inset -1px -1px #808080"></div>
<svg style="position:absolute;left:303px;top:397px;" width="10" height="11" viewBox="0 0 10 11"><path d="M1.5 0.5h7l-3.5 4z" fill="url(#hdrg)" stroke="#3A7ED0" stroke-width="1"/><rect x="1" y="6" width="8" height="4" rx="1.2" fill="url(#hdrg)" stroke="#3A7ED0" stroke-width="1"/></svg>
<span class="t " style="left:316px;top:396px;font-weight:bold;letter-spacing:0.4px;-webkit-text-stroke:0.2px">Выводимые колонки</span>
<div style="left:307px;top:426px;width:309px;height:275px;background:#fff;border:1px solid;border-color:#808080 #fff #fff #808080;box-shadow:inset 1px 1px #404040,inset -1px -1px #D4D0C8;"></div>
<span class="t " style="left:335px;top:431px;">Значок</span>
<span class="t " style="left:335px;top:448px;">Канал</span>
<span class="t " style="left:335px;top:465px;">Web-служба</span>
<span class="t " style="left:335px;top:482px;">Время</span>
<span class="t " style="left:335px;top:499px;">Отправитель</span>
<span class="t " style="left:335px;top:516px;">Получатель</span>
<span class="t " style="left:335px;top:533px;">Пользователь</span>
<span class="t " style="left:335px;top:550px;">Тип</span>
<div style="left:329px;top:564px;width:269px;height:17px;background:#D4D0C8"></div>
<span class="t " style="left:335px;top:567px;">Тема сообщения</span>
<span class="t " style="left:335px;top:584px;">Файлы</span>
<span class="t " style="left:335px;top:601px;">Хост отправителя</span>
<span class="t " style="left:335px;top:618px;">Хост получателя</span>
<span class="t " style="left:335px;top:635px;">Тип сообщения</span>
<span class="t " style="left:335px;top:652px;">Вложения без имени</span>
<span class="t " style="left:335px;top:669px;">Атрибуты</span>
<span class="t " style="left:335px;top:686px;">Копия (CC)</span>
<svg style="position:absolute;left:0;top:0" width="640" height="720" viewBox="0 0 640 720"><rect x="314.5" y="429.5" width="13" height="13" fill="#fff" stroke="#808080"/><path d="M315 434.5L321.5 442L328 429.5" stroke="#00F000" stroke-width="2.3" fill="none" stroke-linejoin="miter"/><rect x="314.5" y="446.5" width="13" height="13" fill="#fff" stroke="#808080"/><path d="M315 451.5L321.5 459L328 446.5" stroke="#00F000" stroke-width="2.3" fill="none" stroke-linejoin="miter"/><rect x="314.5" y="463.5" width="13" height="13" fill="#fff" stroke="#808080"/><path d="M315 468.5L321.5 476L328 463.5" stroke="#00F000" stroke-width="2.3" fill="none" stroke-linejoin="miter"/><rect x="314.5" y="480.5" width="13" height="13" fill="#fff" stroke="#808080"/><path d="M315 485.5L321.5 493L328 480.5" stroke="#00F000" stroke-width="2.3" fill="none" stroke-linejoin="miter"/><rect x="314.5" y="497.5" width="13" height="13" fill="#fff" stroke="#808080"/><rect x="314.5" y="514.5" width="13" height="13" fill="#fff" stroke="#808080"/><rect x="314.5" y="531.5" width="13" height="13" fill="#fff" stroke="#808080"/><rect x="314.5" y="548.5" width="13" height="13" fill="#fff" stroke="#808080"/><path d="M315 553.5L321.5 561L328 548.5" stroke="#00F000" stroke-width="2.3" fill="none" stroke-linejoin="miter"/><rect x="314.5" y="565.5" width="13" height="13" fill="#fff" stroke="#808080"/><rect x="314.5" y="582.5" width="13" height="13" fill="#fff" stroke="#808080"/><rect x="314.5" y="599.5" width="13" height="13" fill="#fff" stroke="#808080"/><rect x="314.5" y="616.5" width="13" height="13" fill="#fff" stroke="#808080"/><rect x="314.5" y="633.5" width="13" height="13" fill="#fff" stroke="#808080"/><rect x="314.5" y="650.5" width="13" height="13" fill="#fff" stroke="#808080"/><rect x="314.5" y="667.5" width="13" height="13" fill="#fff" stroke="#808080"/><rect x="314.5" y="684.5" width="13" height="13" fill="#fff" stroke="#808080"/></svg>
<div style="left:598px;top:428px;width:16px;height:271px;background-color:#fff;background-image:repeating-conic-gradient(#D4D0C8 0 25%,#fff 0 50%);background-size:2px 2px"></div>
<div style="left:598px;top:428px;width:16px;height:16px;background:#D4D0C8;border:1px solid;border-color:#D4D0C8 #404040 #404040 #D4D0C8;box-shadow:inset 1px 1px #fff,inset -1px -1px #808080;"></div>
<svg style="position:absolute;left:602px;top:434px" width="7" height="4" viewBox="0 0 7 4"><path d="M0 4h7l-3.5-4z" fill="#000"/></svg>
<div style="left:598px;top:683px;width:16px;height:16px;background:#D4D0C8;border:1px solid;border-color:#D4D0C8 #404040 #404040 #D4D0C8;box-shadow:inset 1px 1px #fff,inset -1px -1px #808080;"></div>
<svg style="position:absolute;left:602px;top:689px" width="7" height="4" viewBox="0 0 7 4"><path d="M0 0h7l-3.5 4z" fill="#000"/></svg>
<div style="left:598px;top:444px;width:16px;height:143px;background:#D4D0C8;border:1px solid;border-color:#D4D0C8 #404040 #404040 #D4D0C8;box-shadow:inset 1px 1px #fff,inset -1px -1px #808080;"></div>
<div style="left:296px;top:711px;width:329px;height:4px;background:linear-gradient(#F6F6F6,#C8CACC 60%,#B8BCC0)"></div>
<div style="left:296px;top:715px;width:330px;height:24px;background:#D4D0C8;border-top:1px solid #fff;border-left:1px solid #fff;border-right:1px solid #404040;border-bottom:1px solid #404040;box-shadow:inset -1px -1px #808080"></div>
<svg style="position:absolute;left:303px;top:723px;" width="10" height="9" viewBox="0 0 10 9"><rect x="0.5" y="0.5" width="3" height="7" rx="1" fill="url(#hdrg)" stroke="#3A7ED0" stroke-width="1"/><path d="M5.5 0.5l4 3.5l-4 3.5z" fill="url(#hdrg)" stroke="#3A7ED0" stroke-width="1"/></svg>
<span class="t " style="left:316px;top:721px;font-weight:bold;letter-spacing:0.4px;-webkit-text-stroke:0.2px">Группировка</span>
<div style="left:296px;top:739px;width:329px;height:4px;background:linear-gradient(#F6F6F6,#C8CACC 60%,#B8BCC0)"></div>
<div style="left:296px;top:743px;width:330px;height:24px;background:#D4D0C8;border-top:1px solid #fff;border-left:1px solid #fff;border-right:1px solid #404040;border-bottom:1px solid #404040;box-shadow:inset -1px -1px #808080"></div>
<svg style="position:absolute;left:303px;top:751px;" width="10" height="9" viewBox="0 0 10 9"><rect x="0.5" y="0.5" width="3" height="7" rx="1" fill="url(#hdrg)" stroke="#3A7ED0" stroke-width="1"/><path d="M5.5 0.5l4 3.5l-4 3.5z" fill="url(#hdrg)" stroke="#3A7ED0" stroke-width="1"/></svg>
<span class="t " style="left:316px;top:749px;">Дополнительные условия</span>
<div style="left:626px;top:99px;width:8px;height:784px;background:linear-gradient(90deg,#FFFFFF,#E4E6E8 40%,#A8ACB4)"></div>
<svg style="position:absolute;left:628px;top:479px;" width="4" height="23" viewBox="0 0 4 23"><path d="M4 0v7l-4-3.5z" fill="#000"/><path d="M4 8v7l-4-3.5z" fill="#000"/><path d="M4 16v7l-4-3.5z" fill="#000"/></svg>
<div style="left:645px;top:110px;width:514px;height:533px;background:#fff;border:1px solid;border-color:#808080 #fff #fff #808080;box-shadow:inset 1px 1px #404040,inset -1px -1px #D4D0C8;"></div>
<div style="left:647px;top:112px;width:86px;height:17px;background:#D4D0C8;border-right:1px solid #404040;border-bottom:1px solid #404040;box-shadow:inset 1px 1px #fff,inset -1px -1px #808080"></div>
<div style="left:733px;top:112px;width:66px;height:17px;background:#D4D0C8;border-right:1px solid #404040;border-bottom:1px solid #404040;box-shadow:inset 1px 1px #fff,inset -1px -1px #808080"></div>
<div style="left:799px;top:112px;width:114px;height:17px;background:#D4D0C8;border-right:1px solid #404040;border-bottom:1px solid #404040;box-shadow:inset 1px 1px #fff,inset -1px -1px #808080"></div>
<div style="left:913px;top:112px;width:143px;height:17px;background:#D4D0C8;border-right:1px solid #404040;border-bottom:1px solid #404040;box-shadow:inset 1px 1px #fff,inset -1px -1px #808080"></div>
<div style="left:1056px;top:112px;width:85px;height:17px;background:#D4D0C8;border-bottom:1px solid #404040;box-shadow:inset 1px 1px #fff,inset 0 -1px #808080"></div>
<div style="left:718px;top:113px;width:13px;height:14px;border-left:1px solid #fff"></div>
<svg style="position:absolute;left:721px;top:118px;" width="7" height="4" viewBox="0 0 7 4"><path d="M0 0h7l-3.5 4z" fill="#000"/></svg>
<span class="t " style="left:736px;top:115px;">Канал</span>
<span class="t " style="left:803px;top:115px;">Web-служба</span>
<svg style="position:absolute;left:916px;top:117px;" width="10" height="5" viewBox="0 0 10 5"><path d="M0 5h10l-5-5z" fill="#000"/></svg>
<span class="t " style="left:929px;top:115px;">Время</span>
<span class="t " style="left:1060px;top:115px;">Тип</span>
<div style="left:647px;top:129px;width:494px;height:496px;overflow:hidden"><div style="left:0px;top:18px;width:494px;height:2px;background:#9DBCEC"></div><span class="t" style="left:21px;top:6px;font-weight:bold;color:#2D60C4;letter-spacing:0.42px;-webkit-text-stroke:0.25px #2D60C4">Канал: HTTP. Всего: 592</span><div style="left:0px;top:38px;width:494px;height:2px;background:#9DBCEC"></div><span class="t" style="left:41px;top:26px;font-weight:bold;color:#2D60C4;letter-spacing:0.42px;-webkit-text-stroke:0.25px #2D60C4">Web-служба: facebook.com. Всего: 93</span><div style="left:0px;top:59px;width:494px;height:1px;background:#D0D0D0"></div><div style="left:85px;top:40px;width:1px;height:19px;background:#D0D0D0"></div><div style="left:151px;top:40px;width:1px;height:19px;background:#D0D0D0"></div><div style="left:265px;top:40px;width:1px;height:19px;background:#D0D0D0"></div><div style="left:408px;top:40px;width:1px;height:19px;background:#D0D0D0"></div><span class="t" style="left:91px;top:44px;color:#000;letter-spacing:-0.6px">HTTP</span><span class="t" style="left:157px;top:44px;color:#000;letter-spacing:0px">ipboard</span><span class="t" style="left:272px;top:44px;color:#000;letter-spacing:0.2px">07.11.2012  18:46:31</span><div style="left:0px;top:78px;width:494px;height:2px;background:#9DBCEC"></div><span class="t" style="left:41px;top:66px;font-weight:bold;color:#2D60C4;letter-spacing:0.42px;-webkit-text-stroke:0.25px #2D60C4">Web-служба: vkontakte.ru. Всего: 24</span><div style="left:0px;top:98px;width:494px;height:2px;background:#9DBCEC"></div><span class="t" style="left:41px;top:86px;font-weight:bold;color:#2D60C4;letter-spacing:0.42px;-webkit-text-stroke:0.25px #2D60C4">Web-служба: Поиск Google. Всего: 333</span><div style="left:0px;top:118px;width:494px;height:2px;background:#9DBCEC"></div><span class="t" style="left:41px;top:106px;font-weight:bold;color:#2D60C4;letter-spacing:0.42px;-webkit-text-stroke:0.25px #2D60C4">Web-служба: Поиск Яндекс. Всего: 13</span><div style="left:0px;top:139px;width:494px;height:1px;background:#D0D0D0"></div><div style="left:85px;top:120px;width:1px;height:19px;background:#D0D0D0"></div><div style="left:151px;top:120px;width:1px;height:19px;background:#D0D0D0"></div><div style="left:265px;top:120px;width:1px;height:19px;background:#D0D0D0"></div><div style="left:408px;top:120px;width:1px;height:19px;background:#D0D0D0"></div><span class="t" style="left:91px;top:124px;color:#000;letter-spacing:-0.6px">HTTP</span><span class="t" style="left:157px;top:124px;color:#000;letter-spacing:0px">Поиск Яндекс</span><span class="t" style="left:272px;top:124px;color:#000;letter-spacing:0.2px">30.11.2012  11:01:55</span><span class="t" style="left:414px;top:124px;color:#000;letter-spacing:0px">Поиск</span><div style="left:0px;top:159px;width:494px;height:1px;background:#D0D0D0"></div><div style="left:85px;top:140px;width:1px;height:19px;background:#D0D0D0"></div><div style="left:151px;top:140px;width:1px;height:19px;background:#D0D0D0"></div><div style="left:265px;top:140px;width:1px;height:19px;background:#D0D0D0"></div><div style="left:408px;top:140px;width:1px;height:19px;background:#D0D0D0"></div><span class="t" style="left:91px;top:144px;color:#000;font-weight:bold;-webkit-text-stroke:0.2px;letter-spacing:-0.1px">HTTP</span><span class="t" style="left:157px;top:144px;color:#000;font-weight:bold;-webkit-text-stroke:0.2px;letter-spacing:0.5px">Поиск Яндекс</span><span class="t" style="left:272px;top:144px;color:#000;font-weight:bold;-webkit-text-stroke:0.2px;letter-spacing:0.6px">26.11.2012  11:45:08</span><span class="t" style="left:414px;top:144px;color:#000;font-weight:bold;-webkit-text-stroke:0.2px;letter-spacing:0.5px">Поиск</span><div style="left:0px;top:179px;width:494px;height:1px;background:#D0D0D0"></div><div style="left:85px;top:160px;width:1px;height:19px;background:#D0D0D0"></div><div style="left:151px;top:160px;width:1px;height:19px;background:#D0D0D0"></div><div style="left:265px;top:160px;width:1px;height:19px;background:#D0D0D0"></div><div style="left:408px;top:160px;width:1px;height:19px;background:#D0D0D0"></div><span class="t" style="left:91px;top:164px;color:#000;font-weight:bold;-webkit-text-stroke:0.2px;letter-spacing:-0.1px">HTTP</span><span class="t" style="left:157px;top:164px;color:#000;font-weight:bold;-webkit-text-stroke:0.2px;letter-spacing:0.5px">Поиск Яндекс</span><span class="t" style="left:272px;top:164px;color:#000;font-weight:bold;-webkit-text-stroke:0.2px;letter-spacing:0.6px">26.11.2012  11:45:07</span><span class="t" style="left:414px;top:164px;color:#000;font-weight:bold;-webkit-text-stroke:0.2px;letter-spacing:0.5px">Поиск</span><div style="left:0px;top:199px;width:494px;height:1px;background:#D0D0D0"></div><div style="left:85px;top:180px;width:1px;height:19px;background:#D0D0D0"></div><div style="left:151px;top:180px;width:1px;height:19px;background:#D0D0D0"></div><div style="left:265px;top:180px;width:1px;height:19px;background:#D0D0D0"></div><div style="left:408px;top:180px;width:1px;height:19px;background:#D0D0D0"></div><span class="t" style="left:91px;top:184px;color:#000;font-weight:bold;-webkit-text-stroke:0.2px;letter-spacing:-0.1px">HTTP</span><span class="t" style="left:157px;top:184px;color:#000;font-weight:bold;-webkit-text-stroke:0.2px;letter-spacing:0.5px">Поиск Яндекс</span><span class="t" style="left:272px;top:184px;color:#000;font-weight:bold;-webkit-text-stroke:0.2px;letter-spacing:0.6px">26.11.2012  11:44:41</span><span class="t" style="left:414px;top:184px;color:#000;font-weight:bold;-webkit-text-stroke:0.2px;letter-spacing:0.5px">Поиск</span><div style="left:0px;top:219px;width:494px;height:1px;background:#D0D0D0"></div><div style="left:85px;top:200px;width:1px;height:19px;background:#D0D0D0"></div><div style="left:151px;top:200px;width:1px;height:19px;background:#D0D0D0"></div><div style="left:265px;top:200px;width:1px;height:19px;background:#D0D0D0"></div><div style="left:408px;top:200px;width:1px;height:19px;background:#D0D0D0"></div><span class="t" style="left:91px;top:204px;color:#000;letter-spacing:-0.6px">HTTP</span><span class="t" style="left:157px;top:204px;color:#000;letter-spacing:0px">Поиск Яндекс</span><span class="t" style="left:272px;top:204px;color:#000;letter-spacing:0.2px">23.11.2012  17:03:33</span><span class="t" style="left:414px;top:204px;color:#000;letter-spacing:0px">Поиск</span><div style="left:0px;top:239px;width:494px;height:1px;background:#D0D0D0"></div><div style="left:85px;top:220px;width:1px;height:19px;background:#D0D0D0"></div><div style="left:151px;top:220px;width:1px;height:19px;background:#D0D0D0"></div><div style="left:265px;top:220px;width:1px;height:19px;background:#D0D0D0"></div><div style="left:408px;top:220px;width:1px;height:19px;background:#D0D0D0"></div><span class="t" style="left:91px;top:224px;color:#000;font-weight:bold;-webkit-text-stroke:0.2px;letter-spacing:-0.1px">HTTP</span><span class="t" style="left:157px;top:224px;color:#000;font-weight:bold;-webkit-text-stroke:0.2px;letter-spacing:0.5px">Поиск Яндекс</span><span class="t" style="left:272px;top:224px;color:#000;font-weight:bold;-webkit-text-stroke:0.2px;letter-spacing:0.6px">23.11.2012  17:03:21</span><span class="t" style="left:414px;top:224px;color:#000;font-weight:bold;-webkit-text-stroke:0.2px;letter-spacing:0.5px">Поиск</span><div style="left:0px;top:259px;width:494px;height:1px;background:#D0D0D0"></div><div style="left:85px;top:240px;width:1px;height:19px;background:#D0D0D0"></div><div style="left:151px;top:240px;width:1px;height:19px;background:#D0D0D0"></div><div style="left:265px;top:240px;width:1px;height:19px;background:#D0D0D0"></div><div style="left:408px;top:240px;width:1px;height:19px;background:#D0D0D0"></div><span class="t" style="left:91px;top:244px;color:#000;letter-spacing:-0.6px">HTTP</span><span class="t" style="left:157px;top:244px;color:#000;letter-spacing:0px">Поиск Яндекс</span><span class="t" style="left:272px;top:244px;color:#000;letter-spacing:0.2px">06.11.2012  17:21:09</span><span class="t" style="left:414px;top:244px;color:#000;letter-spacing:0px">Поиск</span><div style="left:0px;top:260px;width:494px;height:19px;background:#0A246A"></div><div style="left:0px;top:279px;width:494px;height:1px;background:#D0D0D0"></div><div style="left:85px;top:260px;width:1px;height:19px;background:#D0D0D0"></div><div style="left:151px;top:260px;width:1px;height:19px;background:#D0D0D0"></div><div style="left:265px;top:260px;width:1px;height:19px;background:#D0D0D0"></div><div style="left:408px;top:260px;width:1px;height:19px;background:#D0D0D0"></div><span class="t" style="left:91px;top:264px;color:#fff;letter-spacing:-0.6px">HTTP</span><span class="t" style="left:157px;top:264px;color:#fff;letter-spacing:0px">Поиск Яндекс</span><span class="t" style="left:272px;top:264px;color:#fff;letter-spacing:0.2px">06.11.2012  17:19:18</span><span class="t" style="left:414px;top:264px;color:#fff;letter-spacing:0px">Поиск</span><div style="left:0px;top:299px;width:494px;height:1px;background:#D0D0D0"></div><div style="left:85px;top:280px;width:1px;height:19px;background:#D0D0D0"></div><div style="left:151px;top:280px;width:1px;height:19px;background:#D0D0D0"></div><div style="left:265px;top:280px;width:1px;height:19px;background:#D0D0D0"></div><div style="left:408px;top:280px;width:1px;height:19px;background:#D0D0D0"></div><span class="t" style="left:91px;top:284px;color:#000;font-weight:bold;-webkit-text-stroke:0.2px;letter-spacing:-0.1px">HTTP</span><span class="t" style="left:157px;top:284px;color:#000;font-weight:bold;-webkit-text-stroke:0.2px;letter-spacing:0.5px">Поиск Яндекс</span><span class="t" style="left:272px;top:284px;color:#000;font-weight:bold;-webkit-text-stroke:0.2px;letter-spacing:0.6px">06.11.2012  17:19:08</span><span class="t" style="left:414px;top:284px;color:#000;font-weight:bold;-webkit-text-stroke:0.2px;letter-spacing:0.5px">Поиск</span><div style="left:0px;top:319px;width:494px;height:1px;background:#D0D0D0"></div><div style="left:85px;top:300px;width:1px;height:19px;background:#D0D0D0"></div><div style="left:151px;top:300px;width:1px;height:19px;background:#D0D0D0"></div><div style="left:265px;top:300px;width:1px;height:19px;background:#D0D0D0"></div><div style="left:408px;top:300px;width:1px;height:19px;background:#D0D0D0"></div><span class="t" style="left:91px;top:304px;color:#000;font-weight:bold;-webkit-text-stroke:0.2px;letter-spacing:-0.1px">HTTP</span><span class="t" style="left:157px;top:304px;color:#000;font-weight:bold;-webkit-text-stroke:0.2px;letter-spacing:0.5px">Поиск Яндекс</span><span class="t" style="left:272px;top:304px;color:#000;font-weight:bold;-webkit-text-stroke:0.2px;letter-spacing:0.6px">06.11.2012  17:19:08</span><span class="t" style="left:414px;top:304px;color:#000;font-weight:bold;-webkit-text-stroke:0.2px;letter-spacing:0.5px">Поиск</span><div style="left:0px;top:339px;width:494px;height:1px;background:#D0D0D0"></div><div style="left:85px;top:320px;width:1px;height:19px;background:#D0D0D0"></div><div style="left:151px;top:320px;width:1px;height:19px;background:#D0D0D0"></div><div style="left:265px;top:320px;width:1px;height:19px;background:#D0D0D0"></div><div style="left:408px;top:320px;width:1px;height:19px;background:#D0D0D0"></div><span class="t" style="left:91px;top:324px;color:#000;font-weight:bold;-webkit-text-stroke:0.2px;letter-spacing:-0.1px">HTTP</span><span class="t" style="left:157px;top:324px;color:#000;font-weight:bold;-webkit-text-stroke:0.2px;letter-spacing:0.5px">Поиск Яндекс</span><span class="t" style="left:272px;top:324px;color:#000;font-weight:bold;-webkit-text-stroke:0.2px;letter-spacing:0.6px">06.11.2012  17:18:39</span><span class="t" style="left:414px;top:324px;color:#000;font-weight:bold;-webkit-text-stroke:0.2px;letter-spacing:0.5px">Поиск</span><div style="left:0px;top:359px;width:494px;height:1px;background:#D0D0D0"></div><div style="left:85px;top:340px;width:1px;height:19px;background:#D0D0D0"></div><div style="left:151px;top:340px;width:1px;height:19px;background:#D0D0D0"></div><div style="left:265px;top:340px;width:1px;height:19px;background:#D0D0D0"></div><div style="left:408px;top:340px;width:1px;height:19px;background:#D0D0D0"></div><span class="t" style="left:91px;top:344px;color:#000;letter-spacing:-0.6px">HTTP</span><span class="t" style="left:157px;top:344px;color:#000;letter-spacing:0px">Поиск Яндекс</span><span class="t" style="left:272px;top:344px;color:#000;letter-spacing:0.2px">06.11.2012  17:18:25</span><span class="t" style="left:414px;top:344px;color:#000;letter-spacing:0px">Поиск</span><div style="left:0px;top:379px;width:494px;height:1px;background:#D0D0D0"></div><div style="left:85px;top:360px;width:1px;height:19px;background:#D0D0D0"></div><div style="left:151px;top:360px;width:1px;height:19px;background:#D0D0D0"></div><div style="left:265px;top:360px;width:1px;height:19px;background:#D0D0D0"></div><div style="left:408px;top:360px;width:1px;height:19px;background:#D0D0D0"></div><span class="t" style="left:91px;top:364px;color:#000;letter-spacing:-0.6px">HTTP</span><span class="t" style="left:157px;top:364px;color:#000;letter-spacing:0px">Поиск Яндекс</span><span class="t" style="left:272px;top:364px;color:#000;letter-spacing:0.2px">06.11.2012  17:17:34</span><span class="t" style="left:414px;top:364px;color:#000;letter-spacing:0px">Поиск</span><div style="left:0px;top:398px;width:494px;height:2px;background:#9DBCEC"></div><span class="t" style="left:41px;top:386px;font-weight:bold;color:#2D60C4;letter-spacing:0.42px;-webkit-text-stroke:0.25px #2D60C4">Web-служба: Почта Mail.Ru. Всего: 7</span><div style="left:0px;top:419px;width:494px;height:1px;background:#D0D0D0"></div><div style="left:85px;top:400px;width:1px;height:19px;background:#D0D0D0"></div><div style="left:151px;top:400px;width:1px;height:19px;background:#D0D0D0"></div><div style="left:265px;top:400px;width:1px;height:19px;background:#D0D0D0"></div><div style="left:408px;top:400px;width:1px;height:19px;background:#D0D0D0"></div><span class="t" style="left:91px;top:404px;color:#000;letter-spacing:-0.6px">HTTP</span><span class="t" style="left:157px;top:404px;color:#000;letter-spacing:0px">Почта Mail.Ru</span><span class="t" style="left:272px;top:404px;color:#000;letter-spacing:0.2px">22.11.2012  14:28:43</span><span class="t" style="left:414px;top:404px;color:#000;letter-spacing:0px">Загружен файл</span><div style="left:0px;top:439px;width:494px;height:1px;background:#D0D0D0"></div><div style="left:85px;top:420px;width:1px;height:19px;background:#D0D0D0"></div><div style="left:151px;top:420px;width:1px;height:19px;background:#D0D0D0"></div><div style="left:265px;top:420px;width:1px;height:19px;background:#D0D0D0"></div><div style="left:408px;top:420px;width:1px;height:19px;background:#D0D0D0"></div><span class="t" style="left:91px;top:424px;color:#000;letter-spacing:-0.6px">HTTP</span><span class="t" style="left:157px;top:424px;color:#000;letter-spacing:0px">Почта Mail.Ru</span><span class="t" style="left:272px;top:424px;color:#000;letter-spacing:0.2px">20.11.2012  17:54:06</span><span class="t" style="left:414px;top:424px;color:#000;letter-spacing:0px">Загружен файл</span><div style="left:0px;top:459px;width:494px;height:1px;background:#D0D0D0"></div><div style="left:85px;top:440px;width:1px;height:19px;background:#D0D0D0"></div><div style="left:151px;top:440px;width:1px;height:19px;background:#D0D0D0"></div><div style="left:265px;top:440px;width:1px;height:19px;background:#D0D0D0"></div><div style="left:408px;top:440px;width:1px;height:19px;background:#D0D0D0"></div><span class="t" style="left:91px;top:444px;color:#000;letter-spacing:-0.6px">HTTP</span><span class="t" style="left:157px;top:444px;color:#000;letter-spacing:0px">Почта Mail.Ru</span><span class="t" style="left:272px;top:444px;color:#000;letter-spacing:0.2px">20.11.2012  17:53:40</span><span class="t" style="left:414px;top:444px;color:#000;letter-spacing:0px">Загружен файл</span><div style="left:0px;top:479px;width:494px;height:1px;background:#D0D0D0"></div><div style="left:85px;top:460px;width:1px;height:19px;background:#D0D0D0"></div><div style="left:151px;top:460px;width:1px;height:19px;background:#D0D0D0"></div><div style="left:265px;top:460px;width:1px;height:19px;background:#D0D0D0"></div><div style="left:408px;top:460px;width:1px;height:19px;background:#D0D0D0"></div><span class="t" style="left:91px;top:464px;color:#000;letter-spacing:-0.6px">HTTP</span><span class="t" style="left:157px;top:464px;color:#000;letter-spacing:0px">Почта Mail.Ru</span><span class="t" style="left:272px;top:464px;color:#000;letter-spacing:0.2px">20.11.2012  17:53:18</span><span class="t" style="left:414px;top:464px;color:#000;letter-spacing:0px">Загружен файл</span><div style="left:0px;top:499px;width:494px;height:1px;background:#D0D0D0"></div><div style="left:85px;top:480px;width:1px;height:19px;background:#D0D0D0"></div><div style="left:151px;top:480px;width:1px;height:19px;background:#D0D0D0"></div><div style="left:265px;top:480px;width:1px;height:19px;background:#D0D0D0"></div><div style="left:408px;top:480px;width:1px;height:19px;background:#D0D0D0"></div><span class="t" style="left:91px;top:484px;color:#000;letter-spacing:-0.6px">HTTP</span><span class="t" style="left:157px;top:484px;color:#000;letter-spacing:0px">Почта Mail.Ru</span><span class="t" style="left:272px;top:484px;color:#000;letter-spacing:0.2px">20.11.2012  17:39:00</span><span class="t" style="left:414px;top:484px;color:#000;letter-spacing:0px">Загружен файл</span><svg style="position:absolute;left:-647px;top:-129px" width="1176" height="700" viewBox="0 0 1176 700"><defs><radialGradient id="magg" cx="0.4" cy="0.35" r="0.7"><stop offset="0" stop-color="#F4FAFF"/><stop offset="1" stop-color="#8CB8F0"/></radialGradient></defs><rect x="650.5" y="137.5" width="8" height="8" fill="#fff" stroke="#808080"/><rect x="652" y="141" width="5" height="1" fill="#000"/><rect x="670.5" y="157.5" width="8" height="8" fill="#fff" stroke="#808080"/><rect x="672" y="161" width="5" height="1" fill="#000"/><rect x="674" y="159" width="1" height="5" fill="#000"/><g transform="translate(687,173)"><path d="M0 0h12l-6 7z" fill="#3A8ED8"/><path d="M0 6l3 6h-3zM12 6l-3 6h3z" fill="#3A8ED8"/></g><rect x="670.5" y="197.5" width="8" height="8" fill="#fff" stroke="#808080"/><rect x="672" y="201" width="5" height="1" fill="#000"/><rect x="674" y="199" width="1" height="5" fill="#000"/><rect x="670.5" y="217.5" width="8" height="8" fill="#fff" stroke="#808080"/><rect x="672" y="221" width="5" height="1" fill="#000"/><rect x="674" y="219" width="1" height="5" fill="#000"/><rect x="670.5" y="237.5" width="8" height="8" fill="#fff" stroke="#808080"/><rect x="672" y="241" width="5" height="1" fill="#000"/><g transform="translate(695,251)"><rect x="0.5" y="6.5" width="11" height="9" rx="1.5" fill="#D8D8D8" stroke="#A8A8A8"/><circle cx="6" cy="5.5" r="4.8" fill="url(#magg)" stroke="#303030" stroke-width="1" stroke-dasharray="1.2 0.8"/><path d="M9.5 9.5l5 5" stroke="#C01010" stroke-width="3"/><path d="M9.8 9.8l4.5 4.5" stroke="#F8B020" stroke-width="1.6"/><circle cx="4" cy="10" r="0.8" fill="#F00"/><circle cx="7.5" cy="10.5" r="0.8" fill="#F00"/></g><g transform="translate(695,271)"><rect x="0.5" y="6.5" width="11" height="9" rx="1.5" fill="#D8D8D8" stroke="#A8A8A8"/><circle cx="6" cy="5.5" r="4.8" fill="url(#magg)" stroke="#303030" stroke-width="1" stroke-dasharray="1.2 0.8"/><path d="M9.5 9.5l5 5" stroke="#C01010" stroke-width="3"/><path d="M9.8 9.8l4.5 4.5" stroke="#F8B020" stroke-width="1.6"/><circle cx="4" cy="10" r="0.8" fill="#F00"/><circle cx="7.5" cy="10.5" r="0.8" fill="#F00"/></g><g transform="translate(695,291)"><rect x="0.5" y="6.5" width="11" height="9" rx="1.5" fill="#D8D8D8" stroke="#A8A8A8"/><circle cx="6" cy="5.5" r="4.8" fill="url(#magg)" stroke="#303030" stroke-width="1" stroke-dasharray="1.2 0.8"/><path d="M9.5 9.5l5 5" stroke="#C01010" stroke-width="3"/><path d="M9.8 9.8l4.5 4.5" stroke="#F8B020" stroke-width="1.6"/><circle cx="4" cy="10" r="0.8" fill="#F00"/><circle cx="7.5" cy="10.5" r="0.8" fill="#F00"/></g><g transform="translate(695,311)"><rect x="0.5" y="6.5" width="11" height="9" rx="1.5" fill="#D8D8D8" stroke="#A8A8A8"/><circle cx="6" cy="5.5" r="4.8" fill="url(#magg)" stroke="#303030" stroke-width="1" stroke-dasharray="1.2 0.8"/><path d="M9.5 9.5l5 5" stroke="#C01010" stroke-width="3"/><path d="M9.8 9.8l4.5 4.5" stroke="#F8B020" stroke-width="1.6"/><circle cx="4" cy="10" r="0.8" fill="#F00"/><circle cx="7.5" cy="10.5" r="0.8" fill="#F00"/></g><g transform="translate(695,331)"><rect x="0.5" y="6.5" width="11" height="9" rx="1.5" fill="#D8D8D8" stroke="#A8A8A8"/><circle cx="6" cy="5.5" r="4.8" fill="url(#magg)" stroke="#303030" stroke-width="1" stroke-dasharray="1.2 0.8"/><path d="M9.5 9.5l5 5" stroke="#C01010" stroke-width="3"/><path d="M9.8 9.8l4.5 4.5" stroke="#F8B020" stroke-width="1.6"/><circle cx="4" cy="10" r="0.8" fill="#F00"/><circle cx="7.5" cy="10.5" r="0.8" fill="#F00"/></g><g transform="translate(695,351)"><rect x="0.5" y="6.5" width="11" height="9" rx="1.5" fill="#D8D8D8" stroke="#A8A8A8"/><circle cx="6" cy="5.5" r="4.8" fill="url(#magg)" stroke="#303030" stroke-width="1" stroke-dasharray="1.2 0.8"/><path d="M9.5 9.5l5 5" stroke="#C01010" stroke-width="3"/><path d="M9.8 9.8l4.5 4.5" stroke="#F8B020" stroke-width="1.6"/><circle cx="4" cy="10" r="0.8" fill="#F00"/><circle cx="7.5" cy="10.5" r="0.8" fill="#F00"/></g><g transform="translate(695,371)"><rect x="0.5" y="6.5" width="11" height="9" rx="1.5" fill="#D8D8D8" stroke="#A8A8A8"/><circle cx="6" cy="5.5" r="4.8" fill="url(#magg)" stroke="#303030" stroke-width="1" stroke-dasharray="1.2 0.8"/><path d="M9.5 9.5l5 5" stroke="#C01010" stroke-width="3"/><path d="M9.8 9.8l4.5 4.5" stroke="#F8B020" stroke-width="1.6"/><circle cx="4" cy="10" r="0.8" fill="#F00"/><circle cx="7.5" cy="10.5" r="0.8" fill="#F00"/></g><g transform="translate(695,391)"><rect x="0.5" y="6.5" width="11" height="9" rx="1.5" fill="#D8D8D8" stroke="#A8A8A8"/><circle cx="6" cy="5.5" r="4.8" fill="url(#magg)" stroke="#303030" stroke-width="1" stroke-dasharray="1.2 0.8"/><path d="M9.5 9.5l5 5" stroke="#C01010" stroke-width="3"/><path d="M9.8 9.8l4.5 4.5" stroke="#F8B020" stroke-width="1.6"/><circle cx="4" cy="10" r="0.8" fill="#F00"/><circle cx="7.5" cy="10.5" r="0.8" fill="#F00"/></g><g transform="translate(695,411)"><rect x="0.5" y="6.5" width="11" height="9" rx="1.5" fill="#D8D8D8" stroke="#A8A8A8"/><circle cx="6" cy="5.5" r="4.8" fill="url(#magg)" stroke="#303030" stroke-width="1" stroke-dasharray="1.2 0.8"/><path d="M9.5 9.5l5 5" stroke="#C01010" stroke-width="3"/><path d="M9.8 9.8l4.5 4.5" stroke="#F8B020" stroke-width="1.6"/><circle cx="4" cy="10" r="0.8" fill="#F00"/><circle cx="7.5" cy="10.5" r="0.8" fill="#F00"/></g><g transform="translate(695,431)"><rect x="0.5" y="6.5" width="11" height="9" rx="1.5" fill="#D8D8D8" stroke="#A8A8A8"/><circle cx="6" cy="5.5" r="4.8" fill="url(#magg)" stroke="#303030" stroke-width="1" stroke-dasharray="1.2 0.8"/><path d="M9.5 9.5l5 5" stroke="#C01010" stroke-width="3"/><path d="M9.8 9.8l4.5 4.5" stroke="#F8B020" stroke-width="1.6"/><circle cx="4" cy="10" r="0.8" fill="#F00"/><circle cx="7.5" cy="10.5" r="0.8" fill="#F00"/></g><g transform="translate(695,451)"><rect x="0.5" y="6.5" width="11" height="9" rx="1.5" fill="#D8D8D8" stroke="#A8A8A8"/><circle cx="6" cy="5.5" r="4.8" fill="url(#magg)" stroke="#303030" stroke-width="1" stroke-dasharray="1.2 0.8"/><path d="M9.5 9.5l5 5" stroke="#C01010" stroke-width="3"/><path d="M9.8 9.8l4.5 4.5" stroke="#F8B020" stroke-width="1.6"/><circle cx="4" cy="10" r="0.8" fill="#F00"/><circle cx="7.5" cy="10.5" r="0.8" fill="#F00"/></g><g transform="translate(695,471)"><rect x="0.5" y="6.5" width="11" height="9" rx="1.5" fill="#D8D8D8" stroke="#A8A8A8"/><circle cx="6" cy="5.5" r="4.8" fill="url(#magg)" stroke="#303030" stroke-width="1" stroke-dasharray="1.2 0.8"/><path d="M9.5 9.5l5 5" stroke="#C01010" stroke-width="3"/><path d="M9.8 9.8l4.5 4.5" stroke="#F8B020" stroke-width="1.6"/><circle cx="4" cy="10" r="0.8" fill="#F00"/><circle cx="7.5" cy="10.5" r="0.8" fill="#F00"/></g><g transform="translate(695,491)"><rect x="0.5" y="6.5" width="11" height="9" rx="1.5" fill="#D8D8D8" stroke="#A8A8A8"/><circle cx="6" cy="5.5" r="4.8" fill="url(#magg)" stroke="#303030" stroke-width="1" stroke-dasharray="1.2 0.8"/><path d="M9.5 9.5l5 5" stroke="#C01010" stroke-width="3"/><path d="M9.8 9.8l4.5 4.5" stroke="#F8B020" stroke-width="1.6"/><circle cx="4" cy="10" r="0.8" fill="#F00"/><circle cx="7.5" cy="10.5" r="0.8" fill="#F00"/></g><rect x="670.5" y="517.5" width="8" height="8" fill="#fff" stroke="#808080"/><rect x="672" y="521" width="5" height="1" fill="#000"/><g transform="translate(695,531)"><circle cx="8" cy="8" r="6.2" fill="none" stroke="#F09000" stroke-width="1.8"/><circle cx="8" cy="7.5" r="2.6" fill="none" stroke="#F0A000" stroke-width="2"/><path d="M10.6 6v3.5q0 1.5 1.5 1.5" stroke="#F09000" stroke-width="1.8" fill="none"/><path d="M13 12.5q-2 2.5-5 2.2" stroke="#E86800" stroke-width="1.8" fill="none"/></g><g transform="translate(695,551)"><circle cx="8" cy="8" r="6.2" fill="none" stroke="#F09000" stroke-width="1.8"/><circle cx="8" cy="7.5" r="2.6" fill="none" stroke="#F0A000" stroke-width="2"/><path d="M10.6 6v3.5q0 1.5 1.5 1.5" stroke="#F09000" stroke-width="1.8" fill="none"/><path d="M13 12.5q-2 2.5-5 2.2" stroke="#E86800" stroke-width="1.8" fill="none"/></g><g transform="translate(695,571)"><circle cx="8" cy="8" r="6.2" fill="none" stroke="#F09000" stroke-width="1.8"/><circle cx="8" cy="7.5" r="2.6" fill="none" stroke="#F0A000" stroke-width="2"/><path d="M10.6 6v3.5q0 1.5 1.5 1.5" stroke="#F09000" stroke-width="1.8" fill="none"/><path d="M13 12.5q-2 2.5-5 2.2" stroke="#E86800" stroke-width="1.8" fill="none"/></g><g transform="translate(695,591)"><circle cx="8" cy="8" r="6.2" fill="none" stroke="#F09000" stroke-width="1.8"/><circle cx="8" cy="7.5" r="2.6" fill="none" stroke="#F0A000" stroke-width="2"/><path d="M10.6 6v3.5q0 1.5 1.5 1.5" stroke="#F09000" stroke-width="1.8" fill="none"/><path d="M13 12.5q-2 2.5-5 2.2" stroke="#E86800" stroke-width="1.8" fill="none"/></g><g transform="translate(695,611)"><circle cx="8" cy="8" r="6.2" fill="none" stroke="#F09000" stroke-width="1.8"/><circle cx="8" cy="7.5" r="2.6" fill="none" stroke="#F0A000" stroke-width="2"/><path d="M10.6 6v3.5q0 1.5 1.5 1.5" stroke="#F09000" stroke-width="1.8" fill="none"/><path d="M13 12.5q-2 2.5-5 2.2" stroke="#E86800" stroke-width="1.8" fill="none"/></g></svg></div>
<div style="left:1141px;top:112px;width:16px;height:513px;background-color:#fff;background-image:repeating-conic-gradient(#D4D0C8 0 25%,#fff 0 50%);background-size:2px 2px"></div>
<div style="left:1141px;top:112px;width:16px;height:16px;background:#D4D0C8;border:1px solid;border-color:#D4D0C8 #404040 #404040 #D4D0C8;box-shadow:inset 1px 1px #fff,inset -1px -1px #808080;"></div>
<svg style="position:absolute;left:1145px;top:118px" width="7" height="4" viewBox="0 0 7 4"><path d="M0 4h7l-3.5-4z" fill="#000"/></svg>
<div style="left:1141px;top:609px;width:16px;height:16px;background:#D4D0C8;border:1px solid;border-color:#D4D0C8 #404040 #404040 #D4D0C8;box-shadow:inset 1px 1px #fff,inset -1px -1px #808080;"></div>
<svg style="position:absolute;left:1145px;top:615px" width="7" height="4" viewBox="0 0 7 4"><path d="M0 0h7l-3.5 4z" fill="#000"/></svg>
<div style="left:1141px;top:128px;width:16px;height:44px;background:#D4D0C8;border:1px solid;border-color:#D4D0C8 #404040 #404040 #D4D0C8;box-shadow:inset 1px 1px #fff,inset -1px -1px #808080;"></div>
<div style="left:647px;top:625px;width:494px;height:16px;background-color:#fff;background-image:repeating-conic-gradient(#D4D0C8 0 25%,#fff 0 50%);background-size:2px 2px"></div>
<div style="left:647px;top:625px;width:16px;height:16px;background:#D4D0C8;border:1px solid;border-color:#D4D0C8 #404040 #404040 #D4D0C8;box-shadow:inset 1px 1px #fff,inset -1px -1px #808080;"></div>
<svg style="position:absolute;left:652px;top:629px" width="4" height="7" viewBox="0 0 4 7"><path d="M4 0v7l-4-3.5z" fill="#000"/></svg>
<div style="left:1125px;top:625px;width:16px;height:16px;background:#D4D0C8;border:1px solid;border-color:#D4D0C8 #404040 #404040 #D4D0C8;box-shadow:inset 1px 1px #fff,inset -1px -1px #808080;"></div>
<svg style="position:absolute;left:1131px;top:629px" width="4" height="7" viewBox="0 0 4 7"><path d="M0 0v7l4-3.5z" fill="#000"/></svg>
<div style="left:663px;top:625px;width:439px;height:16px;background:#D4D0C8;border:1px solid;border-color:#D4D0C8 #404040 #404040 #D4D0C8;box-shadow:inset 1px 1px #fff,inset -1px -1px #808080;"></div>
<div style="left:1141px;top:625px;width:16px;height:16px;background:#D4D0C8"></div>
<div style="left:645px;top:641px;width:514px;height:6px;background:linear-gradient(#FFFFFF,#E8EAEC 40%,#B0B4BC)"></div>
<div style="left:645px;top:647px;width:514px;height:154px;background:#fff;border:1px solid #000"></div>
<span class="t " style="left:654px;top:658px;font-size:12px;font-weight:bold;color:#800000;letter-spacing:-0.2px">Дата:</span>
<span class="t " style="left:699px;top:658px;font-size:12px;letter-spacing:0.15px">06.11.2012 17:19:18</span>
<span class="t " style="left:654px;top:685px;font-size:12px;font-weight:bold;color:#800000;letter-spacing:-0.2px">Тема:</span>
<span class="t " style="left:699px;top:685px;font-size:12px">выбор</span>
<div style="left:654px;top:720px;width:503px;height:1px;background:#808080"></div>
<span class="t " style="left:654px;top:731px;font-size:12px;font-weight:bold;color:#800000;letter-spacing:-0.2px">Текст письма:</span>
<span class="t " style="left:654px;top:758px;font-size:12px">выбор</span>
<div style="left:646px;top:785px;width:512px;height:15px;background-color:#fff;background-image:repeating-conic-gradient(#D4D0C8 0 25%,#fff 0 50%);background-size:2px 2px"></div>
<div style="left:646px;top:785px;width:16px;height:15px;background:#D4D0C8;border:1px solid;border-color:#D4D0C8 #404040 #404040 #D4D0C8;box-shadow:inset 1px 1px #fff,inset -1px -1px #808080;"></div>
<svg style="position:absolute;left:651px;top:789px" width="4" height="7" viewBox="0 0 4 7"><path d="M4 0v7l-4-3.5z" fill="#000"/></svg>
<div style="left:1142px;top:785px;width:16px;height:15px;background:#D4D0C8;border:1px solid;border-color:#D4D0C8 #404040 #404040 #D4D0C8;box-shadow:inset 1px 1px #fff,inset -1px -1px #808080;"></div>
<svg style="position:absolute;left:1148px;top:789px" width="4" height="7" viewBox="0 0 4 7"><path d="M0 0v7l4-3.5z" fill="#000"/></svg>
<div style="left:662px;top:785px;width:461px;height:15px;background:#D4D0C8;border:1px solid;border-color:#D4D0C8 #404040 #404040 #D4D0C8;box-shadow:inset 1px 1px #fff,inset -1px -1px #808080;"></div>
<svg style="position:absolute;left:645px;top:808px;" width="17" height="17" viewBox="0 0 17 17"><path d="M8 1.5c4 0 7 2.5 7 6s-3 6-7 6l-2.5 3l0.5-3.3c-2.5-.8-4.5-3-4.5-5.7c0-3.5 3-6 6.5-6z" fill="#fff" stroke="#000" stroke-width="1"/><path d="M2 13q2 2 4 1" stroke="#808080" stroke-width="1" fill="none"/><rect x="7" y="3.5" width="2" height="2" fill="#0000F0"/><path d="M6 6.5h3v4.5h1v1h-4v-1h1v-3.5h-1z" fill="#0000F0"/></svg>
<span class="t " style="left:669px;top:810px;">Загружено записей: 702. Выделено записей: 1.</span>
<div style="left:645px;top:849px;width:13px;height:13px;background:#fff;border:1px solid;border-color:#808080 #fff #fff #808080;box-shadow:inset 1px 1px #404040,inset -1px -1px #D4D0C8;"></div>
<svg style="position:absolute;left:648px;top:852px;" width="7" height="7" viewBox="0 0 7 7"><path d="M0.5 3l2 2.2l4-4.2" stroke="#000" stroke-width="1.8" fill="none"/></svg>
<span class="t " style="left:663px;top:850px;">Интервал автоматического обновления (мин):</span>
<div style="left:910px;top:846px;width:60px;height:23px;background:#fff;border:1px solid;border-color:#808080 #fff #fff #808080;box-shadow:inset 1px 1px #404040,inset -1px -1px #D4D0C8;"></div>
<div style="left:953px;top:848px;width:15px;height:9px;background:#D4D0C8;border:1px solid;border-color:#D4D0C8 #404040 #404040 #D4D0C8;box-shadow:inset 1px 1px #fff,inset -1px -1px #808080;"></div>
<div style="left:953px;top:857px;width:15px;height:10px;background:#D4D0C8;border:1px solid;border-color:#D4D0C8 #404040 #404040 #D4D0C8;box-shadow:inset 1px 1px #fff,inset -1px -1px #808080;"></div>
<svg style="position:absolute;left:958px;top:850px;" width="5" height="14" viewBox="0 0 5 14"><path d="M0 3h5l-2.5-2.5z" fill="#000"/><path d="M0 10.5h5l-2.5 2.5z" fill="#000"/></svg>
<span class="t " style="left:916px;top:851px;">10</span>
</body></html>
